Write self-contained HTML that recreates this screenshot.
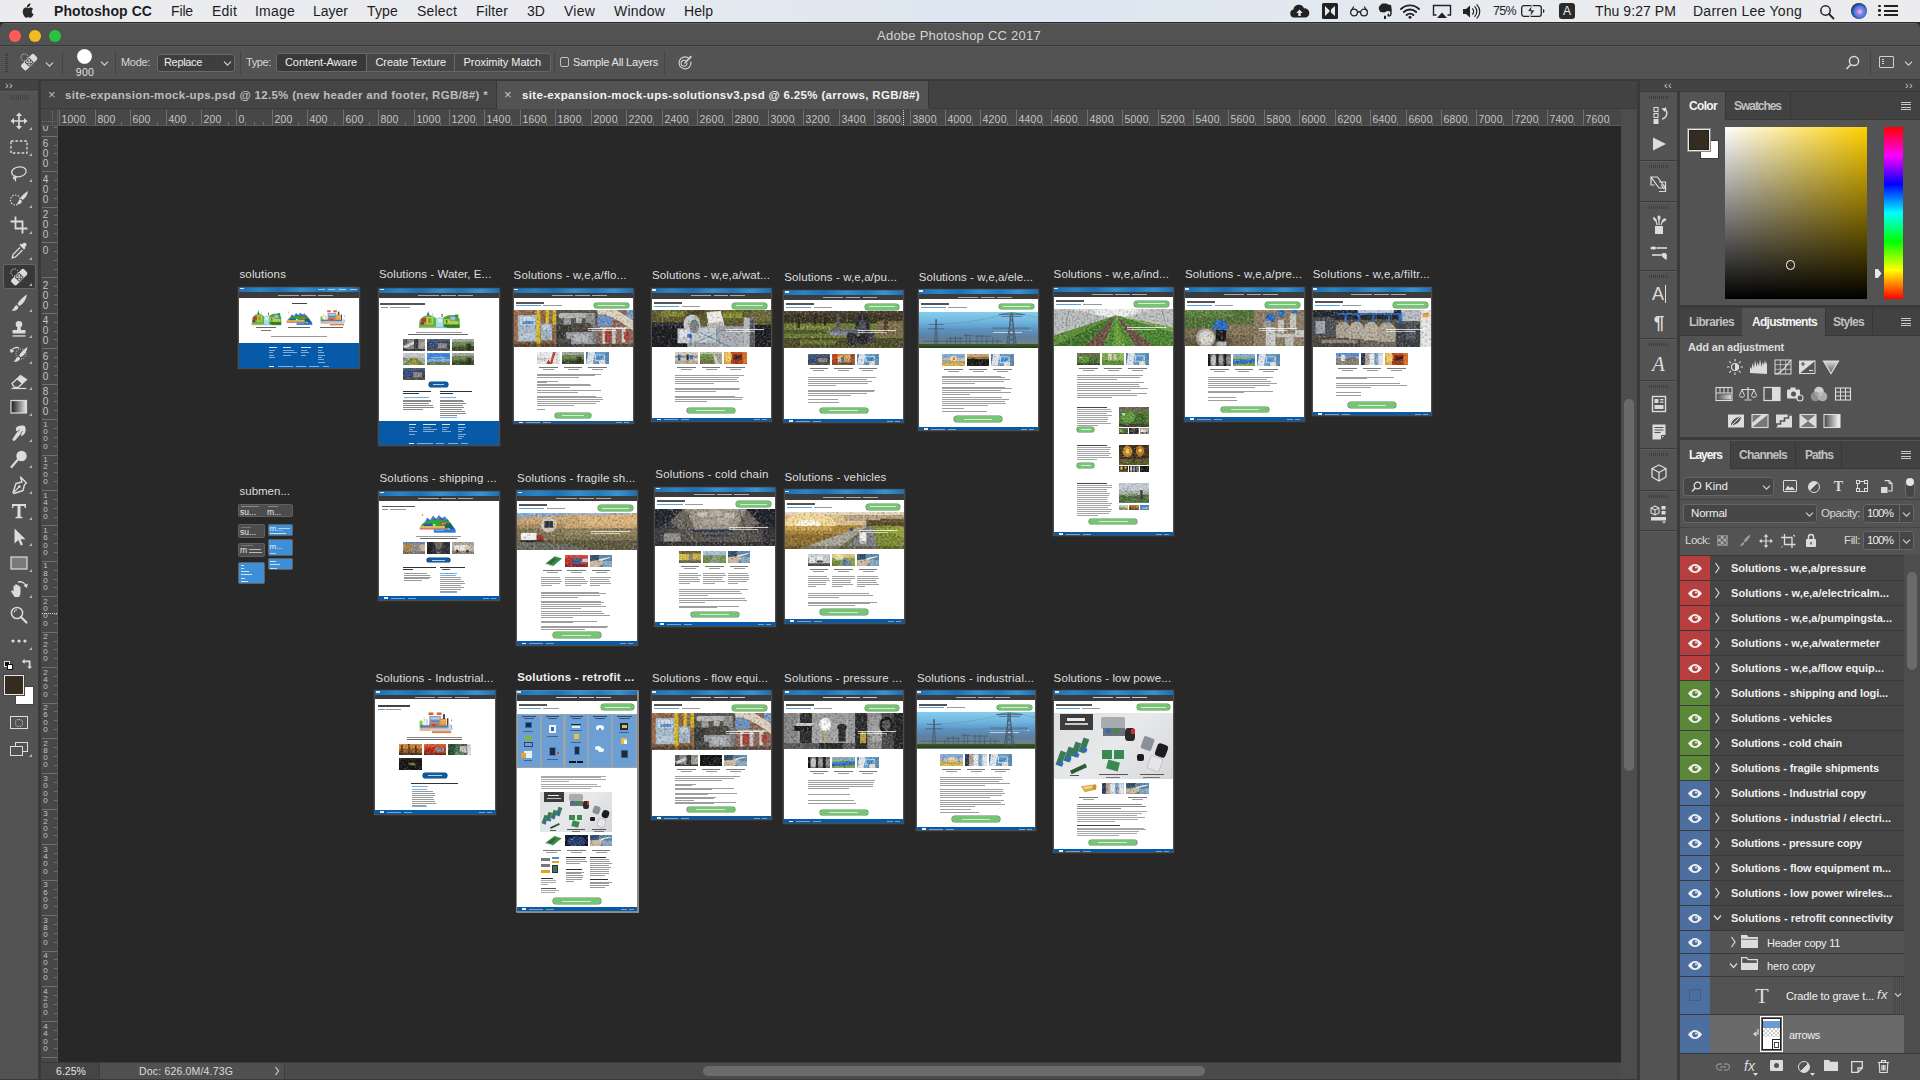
<!DOCTYPE html>
<html><head><meta charset="utf-8"><title>Photoshop</title>
<style>
html,body{margin:0;padding:0;width:1920px;height:1080px;overflow:hidden;background:#282828;font-family:"Liberation Sans",sans-serif;}
div,svg,span{position:absolute;box-sizing:border-box;}
svg{overflow:visible}
</style></head><body>
<div style="left:0px;top:0px;width:1920px;height:22px;background:linear-gradient(90deg,#ececee 0%,#e9ebf0 30%,#dde6f1 50%,#dfe7f1 62%,#e9ebef 80%,#ececee 100%);"></div>
<div style="left:0px;top:22px;width:1920px;height:1px;background:#2b2b2b;"></div>
<svg style="left:20px;top:3px;" width="14" height="16" viewBox="0 0 14 16"><path d="M9.6 3.1c.6-.8 1-1.8.9-2.9-.9.1-2 .6-2.6 1.4-.6.7-1.1 1.8-.9 2.8 1 .1 2-.5 2.6-1.3zM11.7 8.5c0-1.7 1.4-2.5 1.4-2.6-.8-1.1-2-1.3-2.4-1.3-1-.1-2 .6-2.5.6s-1.3-.6-2.2-.6c-1.1 0-2.2.7-2.7 1.7-1.2 2-.3 5 .8 6.7.6.8 1.2 1.7 2.1 1.7.8 0 1.2-.5 2.2-.5s1.3.5 2.2.5 1.5-.8 2-1.6c.6-.9.9-1.8.9-1.9 0 0-1.8-.7-1.8-2.7z" fill="#2a2a2a"/></svg>
<div style="left:54px;top:2px;font-size:14px;line-height:18px;color:#1d1d1f;white-space:pre;letter-spacing:0.066px;font-weight:700;">Photoshop CC</div>
<div style="left:171px;top:2px;font-size:14px;line-height:18px;color:#1d1d1f;white-space:pre;letter-spacing:-0.140px;">File</div>
<div style="left:212px;top:2px;font-size:14px;line-height:18px;color:#1d1d1f;white-space:pre;letter-spacing:0.219px;">Edit</div>
<div style="left:255px;top:2px;font-size:14px;line-height:18px;color:#1d1d1f;white-space:pre;letter-spacing:0.218px;">Image</div>
<div style="left:313px;top:2px;font-size:14px;line-height:18px;color:#1d1d1f;white-space:pre;letter-spacing:-0.004px;">Layer</div>
<div style="left:367px;top:2px;font-size:14px;line-height:18px;color:#1d1d1f;white-space:pre;letter-spacing:0.162px;">Type</div>
<div style="left:417px;top:2px;font-size:14px;line-height:18px;color:#1d1d1f;white-space:pre;letter-spacing:0.182px;">Select</div>
<div style="left:476px;top:2px;font-size:14px;line-height:18px;color:#1d1d1f;white-space:pre;letter-spacing:0.148px;">Filter</div>
<div style="left:527px;top:2px;font-size:14px;line-height:18px;color:#1d1d1f;white-space:pre;letter-spacing:0.052px;">3D</div>
<div style="left:564px;top:2px;font-size:14px;line-height:18px;color:#1d1d1f;white-space:pre;letter-spacing:0.227px;">View</div>
<div style="left:614px;top:2px;font-size:14px;line-height:18px;color:#1d1d1f;white-space:pre;letter-spacing:0.201px;">Window</div>
<div style="left:684px;top:2px;font-size:14px;line-height:18px;color:#1d1d1f;white-space:pre;letter-spacing:0.052px;">Help</div>
<div style="left:1493px;top:3px;font-size:12.5px;line-height:16px;color:#1d1d1f;white-space:pre;letter-spacing:-0.673px;">75%</div>
<div style="left:1595px;top:2px;font-size:14px;line-height:18px;color:#1d1d1f;white-space:pre;letter-spacing:0.077px;">Thu 9:27 PM</div>
<div style="left:1693px;top:2px;font-size:14px;line-height:18px;color:#1d1d1f;white-space:pre;letter-spacing:0.261px;">Darren Lee Yong</div>
<svg style="left:1289px;top:4px;" width="22" height="15" viewBox="0 0 22 15"><path d="M5 13.5a4 4 0 0 1-.6-7.9 5.5 5.5 0 0 1 10.6-1.2 4.6 4.6 0 0 1 1.5 9.1z" fill="#222"/><path d="M10.5 5.5l3.2 3.4h-2v3h-2.4v-3h-2z" fill="#e6e9ef"/></svg>
<div style="left:1322px;top:3px;width:16px;height:16px;background:#222;border-radius:1.5px;"></div>
<svg style="left:1322px;top:3px;" width="16" height="16" viewBox="0 0 16 16"><path d="M3 3l5 5-5 5zM13 3l-4 3.5v3l4 3.5z" fill="#e6e9ef"/></svg>
<svg style="left:1349px;top:5px;" width="20" height="12" viewBox="0 0 20 12"><circle cx="5" cy="7.5" r="3.4" fill="none" stroke="#222" stroke-width="1.3"/><circle cx="15" cy="7.5" r="3.4" fill="none" stroke="#222" stroke-width="1.3"/><path d="M8.4 7.5q1.6-1.5 3.2 0M1.8 6l3-4.5M18.2 6l-3-4.5" fill="none" stroke="#222" stroke-width="1.2"/></svg>
<svg style="left:1376px;top:2px;" width="17" height="18" viewBox="0 0 17 18"><path d="M3 4.5l3-3h4.5l1.5 1 3 .5.8 5-.3 5-1.5 1.5h-2.5v-2.5l1.5-.5v1.5h1l.3-3.5-3-.5-3 1.5-4-.5-1.5-3z" fill="#222"/><path d="M8 13.5l2 .5v3h-2z" fill="#222"/></svg>
<svg style="left:1400px;top:3px;" width="20" height="16" viewBox="0 0 20 16"><path d="M1 6a13 13 0 0 1 18 0M3.8 9a9 9 0 0 1 12.4 0M6.6 12a5 5 0 0 1 6.8 0" fill="none" stroke="#222" stroke-width="1.9" stroke-linecap="round"/><circle cx="10" cy="14.3" r="1.5" fill="#222"/></svg>
<svg style="left:1432px;top:4px;" width="20" height="15" viewBox="0 0 20 15"><path d="M4.5 11h-3v-9.5h17v9.5h-3" fill="none" stroke="#222" stroke-width="1.4"/><path d="M10 8.5l5 5.5h-10z" fill="#222"/></svg>
<svg style="left:1462px;top:4px;" width="18" height="15" viewBox="0 0 18 15"><path d="M1 5h3l4-3.5v12l-4-3.5h-3z" fill="#222"/><path d="M10.5 4.8a3.8 3.8 0 0 1 0 5.4M12.8 2.6a7 7 0 0 1 0 9.8M15 .8a9.5 9.5 0 0 1 0 13.4" fill="none" stroke="#222" stroke-width="1.2" stroke-linecap="round"/></svg>
<svg style="left:1521px;top:5px;" width="24" height="12" viewBox="0 0 24 12"><rect x=".7" y=".7" width="19.6" height="10.6" rx="2.2" fill="none" stroke="#222" stroke-width="1.3"/><path d="M22 4v4q1.5-.5 1.5-2t-1.5-2z" fill="#222"/><path d="M11.5 -.5l-5 7h3.5l-1.5 6 5.5-7.5h-3.7z" fill="#222" stroke="#e3e8f0" stroke-width=".8"/></svg>
<div style="left:1559px;top:3px;width:16px;height:16px;background:#2a2a2a;border-radius:3px;"></div>
<div style="left:1563px;top:3.3px;font-size:12px;line-height:16px;color:#eee;white-space:pre;">A</div>
<svg style="left:1819px;top:4px;" width="16" height="16" viewBox="0 0 16 16"><circle cx="6.5" cy="6.5" r="4.7" fill="none" stroke="#222" stroke-width="1.5"/><path d="M10 10l4.5 4.5" stroke="#222" stroke-width="1.8" stroke-linecap="round"/></svg>
<div style="left:1851px;top:3px;width:16px;height:16px;background:radial-gradient(circle at 55% 55%,#e8d0f0 0%,#a77fe0 22%,#3f7fe0 45%,#1a1a3a 75%,#111 100%);border-radius:50%;"></div>
<div style="left:1884px;top:5px;width:14px;height:2px;background:#222;"></div>
<div style="left:1878px;top:4.75px;width:2.5px;height:2.5px;background:#222;border-radius:50%;"></div>
<div style="left:1884px;top:9.5px;width:14px;height:2px;background:#222;"></div>
<div style="left:1878px;top:9.25px;width:2.5px;height:2.5px;background:#222;border-radius:50%;"></div>
<div style="left:1884px;top:14px;width:14px;height:2px;background:#222;"></div>
<div style="left:1878px;top:13.75px;width:2.5px;height:2.5px;background:#222;border-radius:50%;"></div>
<div style="left:0px;top:22px;width:1920px;height:6px;background:#2b2b2b;"></div>
<div style="left:0px;top:23px;width:1920px;height:23px;background:#525252;border-radius:5px 5px 0 0;"></div>
<div style="left:4px;top:23px;width:1912px;height:1px;background:#606060;"></div>
<div style="left:0px;top:45px;width:1920px;height:1px;background:#3a3a3a;"></div>
<div style="left:9px;top:30px;width:12px;height:12px;background:#fc5b57;border-radius:50%;"></div>
<div style="left:29px;top:30px;width:12px;height:12px;background:#f0bc20;border-radius:50%;"></div>
<div style="left:49px;top:30px;width:12px;height:12px;background:#2ac33f;border-radius:50%;"></div>
<div style="left:877px;top:26.5px;font-size:13px;line-height:17px;color:#d4d4d4;white-space:pre;letter-spacing:0.248px;">Adobe Photoshop CC 2017</div>
<div style="left:0px;top:46px;width:1920px;height:34px;background:#535353;"></div>
<div style="left:0px;top:46px;width:1920px;height:1px;background:#575757;"></div>
<div style="left:0px;top:79px;width:1920px;height:1px;background:#3a3a3a;"></div>
<div style="left:5px;top:53px;width:3px;height:19px;background:repeating-linear-gradient(180deg,#3c3c3c 0 1px,transparent 1px 2px);"></div>
<svg style="left:19px;top:52px;" width="20" height="20" viewBox="0 0 20 20"><g transform="rotate(-45 10 10)"><rect x="1" y="6.5" width="18" height="7.5" rx="2" fill="#dcdcdc"/><rect x="6.7" y="6.9" width="6.6" height="6.6" fill="#535353"/><circle cx="8.5" cy="8.7" r=".9" fill="#dcdcdc"/><circle cx="11.5" cy="8.7" r=".9" fill="#dcdcdc"/><circle cx="8.5" cy="11.7" r=".9" fill="#dcdcdc"/><circle cx="11.5" cy="11.7" r=".9" fill="#dcdcdc"/><circle cx="10" cy="10.2" r=".9" fill="#dcdcdc"/></g><circle cx="5.5" cy="5.5" r="3.6" fill="none" stroke="#dcdcdc" stroke-width="1" stroke-dasharray="1.2 1.2"/></svg>
<svg style="left:44.5px;top:60.5px;" width="9" height="7" viewBox="0 0 9 7"><path d="M1 1.57l3.5 3.5 3.5-3.5" fill="none" stroke="#d0d0d0" stroke-width="1.2"/></svg>
<div style="left:62px;top:51px;width:1px;height:23px;background:#444;"></div>
<div style="left:115px;top:51px;width:1px;height:23px;background:#444;"></div>
<div style="left:76.5px;top:48.5px;width:15px;height:15px;background:radial-gradient(circle,#fff 0 62%,rgba(255,255,255,.5) 82%,rgba(255,255,255,0) 100%);border-radius:50%;"></div>
<div style="left:75.75px;top:64.5px;font-size:10.5px;line-height:14px;color:#e0e0e0;white-space:pre;letter-spacing:0.327px;">900</div>
<svg style="left:99.5px;top:59.5px;" width="9" height="7" viewBox="0 0 9 7"><path d="M1 1.57l3.5 3.5 3.5-3.5" fill="none" stroke="#d0d0d0" stroke-width="1.2"/></svg>
<div style="left:121px;top:55px;font-size:11px;line-height:14px;color:#d6d6d6;white-space:pre;letter-spacing:-0.314px;">Mode:</div>
<div style="left:157px;top:54px;width:78px;height:18px;background:#3e3e3e;border:1px solid #6a6a6a;border-radius:3px;"></div>
<div style="left:164px;top:55px;font-size:11px;line-height:14px;color:#eee;white-space:pre;letter-spacing:-0.337px;">Replace</div>
<svg style="left:222.5px;top:59.5px;" width="9" height="7" viewBox="0 0 9 7"><path d="M1 1.57l3.5 3.5 3.5-3.5" fill="none" stroke="#d0d0d0" stroke-width="1.2"/></svg>
<div style="left:240px;top:51px;width:1px;height:23px;background:#444;"></div>
<div style="left:246px;top:55px;font-size:11px;line-height:14px;color:#d6d6d6;white-space:pre;letter-spacing:-0.381px;">Type:</div>
<div style="left:276px;top:53px;width:275px;height:19px;background:#464646;border:1px solid #666;border-radius:3px;"></div>
<div style="left:277px;top:54px;width:89px;height:17px;background:#383838;border-radius:2px 0 0 2px;"></div>
<div style="left:366px;top:54px;width:1px;height:17px;background:#6a6a6a;"></div>
<div style="left:454px;top:54px;width:1px;height:17px;background:#6a6a6a;"></div>
<div style="left:285px;top:55px;font-size:11px;line-height:14px;color:#f0f0f0;white-space:pre;letter-spacing:-0.090px;">Content-Aware</div>
<div style="left:375.5px;top:55px;font-size:11px;line-height:14px;color:#f0f0f0;white-space:pre;letter-spacing:-0.103px;">Create Texture</div>
<div style="left:463.5px;top:55px;font-size:11px;line-height:14px;color:#f0f0f0;white-space:pre;letter-spacing:-0.049px;">Proximity Match</div>
<div style="left:554px;top:51px;width:1px;height:23px;background:#444;"></div>
<div style="left:559.5px;top:57px;width:9.5px;height:9.5px;background:#535353;border:1px solid #c0c0c0;border-radius:2px;"></div>
<div style="left:573px;top:55px;font-size:11px;line-height:14px;color:#e8e8e8;white-space:pre;letter-spacing:-0.179px;">Sample All Layers</div>
<div style="left:664px;top:51px;width:1px;height:23px;background:#444;"></div>
<svg style="left:676px;top:54px;" width="17" height="17" viewBox="0 0 17 17"><path d="M13 4.5a6 6 0 1 0 1.8 3" fill="none" stroke="#d0d0d0" stroke-width="1.2"/><path d="M10 7a3 3 0 1 0 1 1.8" fill="none" stroke="#d0d0d0" stroke-width="1.1"/><path d="M8 9l6.5-7.5 1.5 1.5-7 7z" fill="#d0d0d0"/></svg>
<svg style="left:1845px;top:55px;" width="15" height="15" viewBox="0 0 15 15"><circle cx="9" cy="6" r="4.6" fill="none" stroke="#d8d8d8" stroke-width="1.5"/><path d="M5.8 9.5l-4.3 4.5" stroke="#d8d8d8" stroke-width="1.7"/></svg>
<div style="left:1870px;top:50px;width:1px;height:25px;background:#444;"></div>
<div style="left:1879px;top:56px;width:15px;height:12px;border:1.5px solid #d0d0d0;border-radius:1px;"></div>
<div style="left:1881.5px;top:59px;width:2px;height:6px;background:repeating-linear-gradient(180deg,#d0d0d0 0 1px,transparent 1px 2px);"></div>
<svg style="left:1903.5px;top:59.5px;" width="9" height="7" viewBox="0 0 9 7"><path d="M1 1.57l3.5 3.5 3.5-3.5" fill="none" stroke="#d0d0d0" stroke-width="1.2"/></svg>
<div style="left:0px;top:80px;width:41px;height:1000px;background:#3a3a3a;"></div>
<div style="left:0px;top:80px;width:38px;height:12px;background:#434343;"></div>
<div style="left:0px;top:92px;width:38px;height:988px;background:#535353;"></div>
<div style="left:0px;top:91px;width:38px;height:1px;background:#5c5c5c;"></div>
<div style="left:5px;top:78px;font-size:11px;line-height:14px;color:#c8c8c8;white-space:pre;letter-spacing:0.337px;">››</div>
<div style="left:10px;top:95px;width:20px;height:5px;background:repeating-linear-gradient(90deg,#444 0 1px,transparent 1px 2px);"></div>
<svg style="left:9px;top:111px;" width="20" height="20" viewBox="0 0 20 20"><path d="M10 1.5l3 3.5h-2.2v4.2h4.2v-2.2l3.5 3-3.5 3v-2.2h-4.2v4.2h2.2l-3 3.5-3-3.5h2.2v-4.2h-4.2v2.2l-3.5-3 3.5-3v2.2h4.2v-4.2h-2.2z" fill="#dcdcdc"/></svg>
<svg style="left:29px;top:127px;" width="3" height="3" viewBox="0 0 3 3"><path d="M3 0v3h-3z" fill="#b4b4b4"/></svg>
<svg style="left:9px;top:137px;" width="20" height="20" viewBox="0 0 20 20"><rect x="2" y="4" width="16" height="12" fill="none" stroke="#dcdcdc" stroke-width="1.3" stroke-dasharray="2.6 1.8"/></svg>
<svg style="left:29px;top:153px;" width="3" height="3" viewBox="0 0 3 3"><path d="M3 0v3h-3z" fill="#b4b4b4"/></svg>
<svg style="left:9px;top:163px;" width="20" height="20" viewBox="0 0 20 20"><path d="M5.5 13c-3-1-4-4.5-1-7s9-3 11.5-.5 1 6-3 7.5-6.5.5-7.5 0" fill="none" stroke="#dcdcdc" stroke-width="1.3"/><path d="M5.5 13c1.5 0 2 1.5 1 2.5s-2.5 0-2-1.2 2.5 1 2 4" fill="none" stroke="#dcdcdc" stroke-width="1.2"/></svg>
<svg style="left:29px;top:179px;" width="3" height="3" viewBox="0 0 3 3"><path d="M3 0v3h-3z" fill="#b4b4b4"/></svg>
<svg style="left:9px;top:189px;" width="20" height="20" viewBox="0 0 20 20"><circle cx="6.5" cy="11" r="5" fill="none" stroke="#dcdcdc" stroke-width="1.2" stroke-dasharray="1.4 1.4"/><path d="M19 2c-3 1.5-6 4.5-7.500 7l2 2c2.5-1.5 5-5 5.5-9z" fill="#dcdcdc"/><path d="M10.8 10l2.2 2.2c-.5 2.5-2.800 3.600-5.5 2.800 2-.8 1.800-3.800 3.300-5z" fill="#dcdcdc"/></svg>
<svg style="left:29px;top:205px;" width="3" height="3" viewBox="0 0 3 3"><path d="M3 0v3h-3z" fill="#b4b4b4"/></svg>
<svg style="left:9px;top:215px;" width="20" height="20" viewBox="0 0 20 20"><path d="M6.5 1.5v12h12M1.5 6.5h12v12" fill="none" stroke="#dcdcdc" stroke-width="1.8"/></svg>
<svg style="left:29px;top:231px;" width="3" height="3" viewBox="0 0 3 3"><path d="M3 0v3h-3z" fill="#b4b4b4"/></svg>
<svg style="left:9px;top:241px;" width="20" height="20" viewBox="0 0 20 20"><path d="M13 3.5c1.2-2 3-2.2 4-1.2s.8 2.8-1.2 4l.7.7-1.5 1.5-4.5-4.5 1.5-1.5z" fill="#dcdcdc"/><path d="M11 6.5l-7 7-.8 3.3 3.3-.8 7-7" fill="none" stroke="#dcdcdc" stroke-width="1.3"/></svg>
<svg style="left:29px;top:257px;" width="3" height="3" viewBox="0 0 3 3"><path d="M3 0v3h-3z" fill="#b4b4b4"/></svg>
<div style="left:3px;top:264px;width:33px;height:25px;background:#383838;border:1px solid #666;border-radius:3px;"></div>
<svg style="left:9px;top:267px;" width="20" height="20" viewBox="0 0 20 20"><g transform="rotate(-45 10 10)"><rect x="1" y="6.5" width="18" height="7.5" rx="2" fill="#dcdcdc"/><rect x="6.7" y="6.9" width="6.6" height="6.6" fill="#535353"/><circle cx="8.5" cy="8.7" r=".9" fill="#dcdcdc"/><circle cx="11.5" cy="8.7" r=".9" fill="#dcdcdc"/><circle cx="8.5" cy="11.7" r=".9" fill="#dcdcdc"/><circle cx="11.5" cy="11.7" r=".9" fill="#dcdcdc"/><circle cx="10" cy="10.2" r=".9" fill="#dcdcdc"/></g><circle cx="5.5" cy="5.5" r="3.6" fill="none" stroke="#dcdcdc" stroke-width="1" stroke-dasharray="1.2 1.2"/></svg>
<svg style="left:29px;top:283px;" width="3" height="3" viewBox="0 0 3 3"><path d="M3 0v3h-3z" fill="#b4b4b4"/></svg>
<svg style="left:9px;top:293px;" width="20" height="20" viewBox="0 0 20 20"><path d="M18 1.5c-4 2.5-8 6.5-9.5 9.5l2 2c3-1.5 6.5-6 7.5-11.5z" fill="#dcdcdc"/><path d="M7.5 12l2 2c-.5 3-3.5 4.5-7 3.5 2.5-1 2.5-4.5 5-5.5z" fill="#dcdcdc"/></svg>
<svg style="left:29px;top:309px;" width="3" height="3" viewBox="0 0 3 3"><path d="M3 0v3h-3z" fill="#b4b4b4"/></svg>
<svg style="left:9px;top:319px;" width="20" height="20" viewBox="0 0 20 20"><circle cx="10" cy="5.2" r="3.3" fill="#dcdcdc"/><path d="M8.6 7h2.8l.6 4.5h-4z" fill="#dcdcdc"/><rect x="3.5" y="11" width="13" height="3.6" rx=".8" fill="#dcdcdc"/><rect x="3.5" y="16.3" width="13" height="1.3" fill="#dcdcdc"/></svg>
<svg style="left:29px;top:335px;" width="3" height="3" viewBox="0 0 3 3"><path d="M3 0v3h-3z" fill="#b4b4b4"/></svg>
<svg style="left:9px;top:345px;" width="20" height="20" viewBox="0 0 20 20"><path d="M18.5 2c-3.5 2-7 5.5-8.5 8.5l1.8 1.8c3-1.5 6-5.5 6.7-10.3z" fill="#dcdcdc"/><path d="M9.2 11.5l1.8 1.8c-.5 2.7-3 4-6.5 3.2 2.3-1 2.3-4 4.7-5z" fill="#dcdcdc"/><path d="M2 6.5a6 6 0 0 1 8-3.5" fill="none" stroke="#dcdcdc" stroke-width="1.3"/><path d="M.5 4l1.5 4 3.5-2z" fill="#dcdcdc"/><circle cx="12" cy="9" r="5" fill="none" stroke="#dcdcdc" stroke-width=".9" stroke-dasharray="1 1.2"/></svg>
<svg style="left:29px;top:361px;" width="3" height="3" viewBox="0 0 3 3"><path d="M3 0v3h-3z" fill="#b4b4b4"/></svg>
<svg style="left:9px;top:371px;" width="20" height="20" viewBox="0 0 20 20"><path d="M3 12.5l8.5-8 6 4-8.5 8h-3.5z" fill="none" stroke="#dcdcdc" stroke-width="1.3"/><path d="M11.5 4.5l6 4-4.5 4.3-5.5-4.5z" fill="#dcdcdc"/><path d="M2.5 17.5h15" stroke="#dcdcdc" stroke-width="1.2"/></svg>
<svg style="left:29px;top:387px;" width="3" height="3" viewBox="0 0 3 3"><path d="M3 0v3h-3z" fill="#b4b4b4"/></svg>
<svg style="left:9px;top:397px;" width="20" height="20" viewBox="0 0 20 20"><defs><linearGradient id="tg"><stop offset="0" stop-color="#1a1a1a"/><stop offset="1" stop-color="#e6e6e6"/></linearGradient></defs><rect x="2" y="3.5" width="15.5" height="12.5" fill="url(#tg)" stroke="#dcdcdc" stroke-width="1.2"/></svg>
<svg style="left:29px;top:413px;" width="3" height="3" viewBox="0 0 3 3"><path d="M3 0v3h-3z" fill="#b4b4b4"/></svg>
<svg style="left:9px;top:423px;" width="20" height="20" viewBox="0 0 20 20"><path d="M7 5c2-2.5 6-3 8.5-2 1.5 1 1.5 5 .5 7-1 2-3 3.2-4.5 3 .8-1 1.2-2 1-3l-6.5 7.5c-1 1-3.2 0-2.5-1.5l5-7.5c-1.5-.5-2-1.8-1.5-3.5z" fill="#dcdcdc"/><path d="M8.5 9l2-2.5M11.5 10.5l2-2.5" stroke="#535353" stroke-width=".8" fill="none"/></svg>
<svg style="left:29px;top:439px;" width="3" height="3" viewBox="0 0 3 3"><path d="M3 0v3h-3z" fill="#b4b4b4"/></svg>
<svg style="left:9px;top:449px;" width="20" height="20" viewBox="0 0 20 20"><circle cx="12.5" cy="7" r="5.2" fill="#dcdcdc"/><path d="M8.5 11l-6 7" stroke="#dcdcdc" stroke-width="2.2" stroke-linecap="round"/></svg>
<svg style="left:29px;top:465px;" width="3" height="3" viewBox="0 0 3 3"><path d="M3 0v3h-3z" fill="#b4b4b4"/></svg>
<svg style="left:9px;top:475px;" width="20" height="20" viewBox="0 0 20 20"><path d="M11.5 2l6 6-2 1.5-1.5 6-9 3-1-1 3-9 6-1.5z" fill="none" stroke="#dcdcdc" stroke-width="1.4" stroke-linejoin="round"/><path d="M4.5 17.5l5-5" stroke="#dcdcdc" stroke-width="1.2"/><circle cx="10.3" cy="11.7" r="1.4" fill="#dcdcdc"/></svg>
<svg style="left:29px;top:491px;" width="3" height="3" viewBox="0 0 3 3"><path d="M3 0v3h-3z" fill="#b4b4b4"/></svg>
<svg style="left:9px;top:501px;" width="20" height="20" viewBox="0 0 20 20"><path d="M3 3h14v4h-1.2l-.5-2h-3.8v10.5l2 .5v1.2h-7v-1.2l2-.5v-10.5h-3.8l-.5 2h-1.2z" fill="#dcdcdc"/></svg>
<svg style="left:29px;top:517px;" width="3" height="3" viewBox="0 0 3 3"><path d="M3 0v3h-3z" fill="#b4b4b4"/></svg>
<svg style="left:9px;top:527px;" width="20" height="20" viewBox="0 0 20 20"><path d="M5.5 1.5v15l3.8-3.5 2.5 5.5 2.2-1-2.5-5.3h5z" fill="#dcdcdc"/></svg>
<svg style="left:29px;top:543px;" width="3" height="3" viewBox="0 0 3 3"><path d="M3 0v3h-3z" fill="#b4b4b4"/></svg>
<svg style="left:9px;top:553px;" width="20" height="20" viewBox="0 0 20 20"><rect x="2" y="4" width="16" height="12" fill="#7a7a7a" stroke="#dcdcdc" stroke-width="1.2"/></svg>
<svg style="left:29px;top:569px;" width="3" height="3" viewBox="0 0 3 3"><path d="M3 0v3h-3z" fill="#b4b4b4"/></svg>
<svg style="left:9px;top:579px;" width="20" height="20" viewBox="0 0 20 20"><path d="M5.5 18c-1-2.5-3-4-3.5-6 .5-1 1.8-.5 2.5.5v-5c0-1.3 1.7-1.3 1.7 0v-1.3c0-1.3 1.8-1.3 1.8 0v.8c0-1.3 1.8-1.3 1.8 0v1.2c0-1.2 1.7-1.2 1.7 0v5.3c0 2-1 3.5-1.5 4.5z" fill="#dcdcdc"/><path d="M9 3a7 7 0 0 1 8.5 5" fill="none" stroke="#dcdcdc" stroke-width="1.4"/><path d="M19 4.5l-1.2 4.5-3.3-2.5z" fill="#dcdcdc"/></svg>
<svg style="left:29px;top:595px;" width="3" height="3" viewBox="0 0 3 3"><path d="M3 0v3h-3z" fill="#b4b4b4"/></svg>
<svg style="left:9px;top:605px;" width="20" height="20" viewBox="0 0 20 20"><circle cx="8" cy="8" r="5.6" fill="none" stroke="#dcdcdc" stroke-width="1.5"/><path d="M12 12l5.5 5.5" stroke="#dcdcdc" stroke-width="2.2" stroke-linecap="round"/><path d="M5 7.5a3.2 3.2 0 0 1 3-2.7" fill="none" stroke="#dcdcdc" stroke-width="1"/></svg>
<svg style="left:9px;top:631px;" width="20" height="20" viewBox="0 0 20 20"><circle cx="4" cy="10" r="1.6" fill="#dcdcdc"/><circle cx="10" cy="10" r="1.6" fill="#dcdcdc"/><circle cx="16" cy="10" r="1.6" fill="#dcdcdc"/></svg>
<svg style="left:29px;top:647px;" width="3" height="3" viewBox="0 0 3 3"><path d="M3 0v3h-3z" fill="#b4b4b4"/></svg>
<div style="left:4px;top:661px;width:6px;height:6px;background:#111;border:1px solid #ddd;"></div>
<div style="left:7px;top:664px;width:6px;height:6px;background:#fff;border:1px solid #111;"></div>
<svg style="left:22px;top:658px;" width="12" height="12" viewBox="0 0 12 12"><path d="M3 1l-3 3 3 3v-2h5v5h-2l3 3 3-3h-2v-7h-7z" fill="#dcdcdc" transform="scale(.85)"/></svg>
<div style="left:15px;top:686px;width:19px;height:19px;background:#ffffff;border:1px solid #444;"></div>
<div style="left:4px;top:675px;width:20px;height:20px;background:#352b1f;border:1px solid #e8e8e8;box-shadow:0 0 0 1px #444;"></div>
<div style="left:10px;top:716px;width:18px;height:13px;border:1.3px solid #dcdcdc;"></div>
<div style="left:15px;top:718.5px;width:8px;height:8px;border:1px dotted #dcdcdc;border-radius:50%;"></div>
<div style="left:15px;top:742px;width:13px;height:10px;background:#535353;border:1.3px solid #dcdcdc;"></div>
<div style="left:10px;top:746px;width:13px;height:10px;background:#535353;border:1.3px solid #dcdcdc;"></div>
<svg style="left:29px;top:754px;" width="3" height="3" viewBox="0 0 3 3"><path d="M3 0v3h-3z" fill="#b4b4b4"/></svg>
<div style="left:41px;top:80px;width:1596px;height:29px;background:#424242;"></div>
<div style="left:41px;top:108px;width:1596px;height:1px;background:#3a3a3a;"></div>
<div style="left:41px;top:80px;width:1596px;height:1px;background:#383838;"></div>
<div style="left:41px;top:81px;width:456px;height:27px;background:#454545;"></div>
<div style="left:496px;top:81px;width:1px;height:27px;background:#383838;"></div>
<div style="left:497px;top:81px;width:432px;height:28px;background:#535353;"></div>
<div style="left:928px;top:81px;width:1px;height:27px;background:#383838;"></div>
<div style="left:48px;top:86px;font-size:13px;line-height:17px;color:#b8b8b8;white-space:pre;">×</div>
<div style="left:65px;top:87.5px;font-size:11.5px;line-height:15px;color:#bdbdbd;white-space:pre;letter-spacing:0.318px;font-weight:700;">site-expansion-mock-ups.psd @ 12.5% (new header and footer, RGB/8#) *</div>
<div style="left:504px;top:86px;font-size:13px;line-height:17px;color:#c8c8c8;white-space:pre;">×</div>
<div style="left:522px;top:87.5px;font-size:11.5px;line-height:15px;color:#f2f2f2;white-space:pre;letter-spacing:0.332px;font-weight:700;">site-expansion-mock-ups-solutionsv3.psd @ 6.25% (arrows, RGB/8#)</div>
<div style="left:41px;top:109px;width:1580px;height:17px;background:#474747;"></div>
<div style="left:41px;top:109px;width:17px;height:953px;background:#474747;"></div>
<div style="left:41px;top:125px;width:1580px;height:1px;background:#5a5a5a;"></div>
<div style="left:57px;top:109px;width:1px;height:953px;background:#5a5a5a;"></div>
<div style="left:52px;top:111px;width:1px;height:14px;background:repeating-linear-gradient(180deg,#777 0 1px,transparent 1px 2px);"></div>
<div style="left:42px;top:121px;width:14px;height:1px;background:repeating-linear-gradient(90deg,#777 0 1px,transparent 1px 2px);"></div>
<div style="left:59px;top:110px;width:1px;height:15px;background:#707070;"></div>
<div style="left:68px;top:122px;width:1px;height:3px;background:#707070;"></div>
<div style="left:77px;top:122px;width:1px;height:3px;background:#707070;"></div>
<div style="left:86px;top:122px;width:1px;height:3px;background:#707070;"></div>
<div style="left:61.5px;top:112.3px;font-size:10.5px;line-height:14px;color:#c4c4c4;white-space:pre;letter-spacing:0.210px;">1000</div>
<div style="left:95px;top:110px;width:1px;height:15px;background:#707070;"></div>
<div style="left:104px;top:122px;width:1px;height:3px;background:#707070;"></div>
<div style="left:112px;top:122px;width:1px;height:3px;background:#707070;"></div>
<div style="left:121px;top:122px;width:1px;height:3px;background:#707070;"></div>
<div style="left:97.5px;top:112.3px;font-size:10.5px;line-height:14px;color:#c4c4c4;white-space:pre;letter-spacing:0.210px;">800</div>
<div style="left:130px;top:110px;width:1px;height:15px;background:#707070;"></div>
<div style="left:139px;top:122px;width:1px;height:3px;background:#707070;"></div>
<div style="left:148px;top:122px;width:1px;height:3px;background:#707070;"></div>
<div style="left:157px;top:122px;width:1px;height:3px;background:#707070;"></div>
<div style="left:132.5px;top:112.3px;font-size:10.5px;line-height:14px;color:#c4c4c4;white-space:pre;letter-spacing:0.210px;">600</div>
<div style="left:166px;top:110px;width:1px;height:15px;background:#707070;"></div>
<div style="left:174px;top:122px;width:1px;height:3px;background:#707070;"></div>
<div style="left:183px;top:122px;width:1px;height:3px;background:#707070;"></div>
<div style="left:192px;top:122px;width:1px;height:3px;background:#707070;"></div>
<div style="left:168.5px;top:112.3px;font-size:10.5px;line-height:14px;color:#c4c4c4;white-space:pre;letter-spacing:0.210px;">400</div>
<div style="left:201px;top:110px;width:1px;height:15px;background:#707070;"></div>
<div style="left:210px;top:122px;width:1px;height:3px;background:#707070;"></div>
<div style="left:219px;top:122px;width:1px;height:3px;background:#707070;"></div>
<div style="left:228px;top:122px;width:1px;height:3px;background:#707070;"></div>
<div style="left:203.5px;top:112.3px;font-size:10.5px;line-height:14px;color:#c4c4c4;white-space:pre;letter-spacing:0.210px;">200</div>
<div style="left:236px;top:110px;width:1px;height:15px;background:#707070;"></div>
<div style="left:245px;top:122px;width:1px;height:3px;background:#707070;"></div>
<div style="left:254px;top:122px;width:1px;height:3px;background:#707070;"></div>
<div style="left:263px;top:122px;width:1px;height:3px;background:#707070;"></div>
<div style="left:238.5px;top:112.3px;font-size:10.5px;line-height:14px;color:#c4c4c4;white-space:pre;">0</div>
<div style="left:272px;top:110px;width:1px;height:15px;background:#707070;"></div>
<div style="left:281px;top:122px;width:1px;height:3px;background:#707070;"></div>
<div style="left:290px;top:122px;width:1px;height:3px;background:#707070;"></div>
<div style="left:298px;top:122px;width:1px;height:3px;background:#707070;"></div>
<div style="left:274.5px;top:112.3px;font-size:10.5px;line-height:14px;color:#c4c4c4;white-space:pre;letter-spacing:0.210px;">200</div>
<div style="left:307px;top:110px;width:1px;height:15px;background:#707070;"></div>
<div style="left:316px;top:122px;width:1px;height:3px;background:#707070;"></div>
<div style="left:325px;top:122px;width:1px;height:3px;background:#707070;"></div>
<div style="left:334px;top:122px;width:1px;height:3px;background:#707070;"></div>
<div style="left:309.5px;top:112.3px;font-size:10.5px;line-height:14px;color:#c4c4c4;white-space:pre;letter-spacing:0.210px;">400</div>
<div style="left:343px;top:110px;width:1px;height:15px;background:#707070;"></div>
<div style="left:352px;top:122px;width:1px;height:3px;background:#707070;"></div>
<div style="left:360px;top:122px;width:1px;height:3px;background:#707070;"></div>
<div style="left:369px;top:122px;width:1px;height:3px;background:#707070;"></div>
<div style="left:345.5px;top:112.3px;font-size:10.5px;line-height:14px;color:#c4c4c4;white-space:pre;letter-spacing:0.210px;">600</div>
<div style="left:378px;top:110px;width:1px;height:15px;background:#707070;"></div>
<div style="left:387px;top:122px;width:1px;height:3px;background:#707070;"></div>
<div style="left:396px;top:122px;width:1px;height:3px;background:#707070;"></div>
<div style="left:405px;top:122px;width:1px;height:3px;background:#707070;"></div>
<div style="left:380.5px;top:112.3px;font-size:10.5px;line-height:14px;color:#c4c4c4;white-space:pre;letter-spacing:0.210px;">800</div>
<div style="left:414px;top:110px;width:1px;height:15px;background:#707070;"></div>
<div style="left:422px;top:122px;width:1px;height:3px;background:#707070;"></div>
<div style="left:431px;top:122px;width:1px;height:3px;background:#707070;"></div>
<div style="left:440px;top:122px;width:1px;height:3px;background:#707070;"></div>
<div style="left:416.5px;top:112.3px;font-size:10.5px;line-height:14px;color:#c4c4c4;white-space:pre;letter-spacing:0.210px;">1000</div>
<div style="left:449px;top:110px;width:1px;height:15px;background:#707070;"></div>
<div style="left:458px;top:122px;width:1px;height:3px;background:#707070;"></div>
<div style="left:467px;top:122px;width:1px;height:3px;background:#707070;"></div>
<div style="left:476px;top:122px;width:1px;height:3px;background:#707070;"></div>
<div style="left:451.5px;top:112.3px;font-size:10.5px;line-height:14px;color:#c4c4c4;white-space:pre;letter-spacing:0.210px;">1200</div>
<div style="left:484px;top:110px;width:1px;height:15px;background:#707070;"></div>
<div style="left:493px;top:122px;width:1px;height:3px;background:#707070;"></div>
<div style="left:502px;top:122px;width:1px;height:3px;background:#707070;"></div>
<div style="left:511px;top:122px;width:1px;height:3px;background:#707070;"></div>
<div style="left:486.5px;top:112.3px;font-size:10.5px;line-height:14px;color:#c4c4c4;white-space:pre;letter-spacing:0.210px;">1400</div>
<div style="left:520px;top:110px;width:1px;height:15px;background:#707070;"></div>
<div style="left:529px;top:122px;width:1px;height:3px;background:#707070;"></div>
<div style="left:538px;top:122px;width:1px;height:3px;background:#707070;"></div>
<div style="left:546px;top:122px;width:1px;height:3px;background:#707070;"></div>
<div style="left:522.5px;top:112.3px;font-size:10.5px;line-height:14px;color:#c4c4c4;white-space:pre;letter-spacing:0.210px;">1600</div>
<div style="left:555px;top:110px;width:1px;height:15px;background:#707070;"></div>
<div style="left:564px;top:122px;width:1px;height:3px;background:#707070;"></div>
<div style="left:573px;top:122px;width:1px;height:3px;background:#707070;"></div>
<div style="left:582px;top:122px;width:1px;height:3px;background:#707070;"></div>
<div style="left:557.5px;top:112.3px;font-size:10.5px;line-height:14px;color:#c4c4c4;white-space:pre;letter-spacing:0.210px;">1800</div>
<div style="left:591px;top:110px;width:1px;height:15px;background:#707070;"></div>
<div style="left:600px;top:122px;width:1px;height:3px;background:#707070;"></div>
<div style="left:608px;top:122px;width:1px;height:3px;background:#707070;"></div>
<div style="left:617px;top:122px;width:1px;height:3px;background:#707070;"></div>
<div style="left:593.5px;top:112.3px;font-size:10.5px;line-height:14px;color:#c4c4c4;white-space:pre;letter-spacing:0.210px;">2000</div>
<div style="left:626px;top:110px;width:1px;height:15px;background:#707070;"></div>
<div style="left:635px;top:122px;width:1px;height:3px;background:#707070;"></div>
<div style="left:644px;top:122px;width:1px;height:3px;background:#707070;"></div>
<div style="left:653px;top:122px;width:1px;height:3px;background:#707070;"></div>
<div style="left:628.5px;top:112.3px;font-size:10.5px;line-height:14px;color:#c4c4c4;white-space:pre;letter-spacing:0.210px;">2200</div>
<div style="left:662px;top:110px;width:1px;height:15px;background:#707070;"></div>
<div style="left:670px;top:122px;width:1px;height:3px;background:#707070;"></div>
<div style="left:679px;top:122px;width:1px;height:3px;background:#707070;"></div>
<div style="left:688px;top:122px;width:1px;height:3px;background:#707070;"></div>
<div style="left:664.5px;top:112.3px;font-size:10.5px;line-height:14px;color:#c4c4c4;white-space:pre;letter-spacing:0.210px;">2400</div>
<div style="left:697px;top:110px;width:1px;height:15px;background:#707070;"></div>
<div style="left:706px;top:122px;width:1px;height:3px;background:#707070;"></div>
<div style="left:715px;top:122px;width:1px;height:3px;background:#707070;"></div>
<div style="left:724px;top:122px;width:1px;height:3px;background:#707070;"></div>
<div style="left:699.5px;top:112.3px;font-size:10.5px;line-height:14px;color:#c4c4c4;white-space:pre;letter-spacing:0.210px;">2600</div>
<div style="left:732px;top:110px;width:1px;height:15px;background:#707070;"></div>
<div style="left:741px;top:122px;width:1px;height:3px;background:#707070;"></div>
<div style="left:750px;top:122px;width:1px;height:3px;background:#707070;"></div>
<div style="left:759px;top:122px;width:1px;height:3px;background:#707070;"></div>
<div style="left:734.5px;top:112.3px;font-size:10.5px;line-height:14px;color:#c4c4c4;white-space:pre;letter-spacing:0.210px;">2800</div>
<div style="left:768px;top:110px;width:1px;height:15px;background:#707070;"></div>
<div style="left:777px;top:122px;width:1px;height:3px;background:#707070;"></div>
<div style="left:786px;top:122px;width:1px;height:3px;background:#707070;"></div>
<div style="left:794px;top:122px;width:1px;height:3px;background:#707070;"></div>
<div style="left:770.5px;top:112.3px;font-size:10.5px;line-height:14px;color:#c4c4c4;white-space:pre;letter-spacing:0.210px;">3000</div>
<div style="left:803px;top:110px;width:1px;height:15px;background:#707070;"></div>
<div style="left:812px;top:122px;width:1px;height:3px;background:#707070;"></div>
<div style="left:821px;top:122px;width:1px;height:3px;background:#707070;"></div>
<div style="left:830px;top:122px;width:1px;height:3px;background:#707070;"></div>
<div style="left:805.5px;top:112.3px;font-size:10.5px;line-height:14px;color:#c4c4c4;white-space:pre;letter-spacing:0.210px;">3200</div>
<div style="left:839px;top:110px;width:1px;height:15px;background:#707070;"></div>
<div style="left:848px;top:122px;width:1px;height:3px;background:#707070;"></div>
<div style="left:856px;top:122px;width:1px;height:3px;background:#707070;"></div>
<div style="left:865px;top:122px;width:1px;height:3px;background:#707070;"></div>
<div style="left:841.5px;top:112.3px;font-size:10.5px;line-height:14px;color:#c4c4c4;white-space:pre;letter-spacing:0.210px;">3400</div>
<div style="left:874px;top:110px;width:1px;height:15px;background:#707070;"></div>
<div style="left:883px;top:122px;width:1px;height:3px;background:#707070;"></div>
<div style="left:892px;top:122px;width:1px;height:3px;background:#707070;"></div>
<div style="left:901px;top:122px;width:1px;height:3px;background:#707070;"></div>
<div style="left:876.5px;top:112.3px;font-size:10.5px;line-height:14px;color:#c4c4c4;white-space:pre;letter-spacing:0.210px;">3600</div>
<div style="left:910px;top:110px;width:1px;height:15px;background:#707070;"></div>
<div style="left:918px;top:122px;width:1px;height:3px;background:#707070;"></div>
<div style="left:927px;top:122px;width:1px;height:3px;background:#707070;"></div>
<div style="left:936px;top:122px;width:1px;height:3px;background:#707070;"></div>
<div style="left:912.5px;top:112.3px;font-size:10.5px;line-height:14px;color:#c4c4c4;white-space:pre;letter-spacing:0.210px;">3800</div>
<div style="left:945px;top:110px;width:1px;height:15px;background:#707070;"></div>
<div style="left:954px;top:122px;width:1px;height:3px;background:#707070;"></div>
<div style="left:963px;top:122px;width:1px;height:3px;background:#707070;"></div>
<div style="left:972px;top:122px;width:1px;height:3px;background:#707070;"></div>
<div style="left:947.5px;top:112.3px;font-size:10.5px;line-height:14px;color:#c4c4c4;white-space:pre;letter-spacing:0.210px;">4000</div>
<div style="left:980px;top:110px;width:1px;height:15px;background:#707070;"></div>
<div style="left:989px;top:122px;width:1px;height:3px;background:#707070;"></div>
<div style="left:998px;top:122px;width:1px;height:3px;background:#707070;"></div>
<div style="left:1007px;top:122px;width:1px;height:3px;background:#707070;"></div>
<div style="left:982.5px;top:112.3px;font-size:10.5px;line-height:14px;color:#c4c4c4;white-space:pre;letter-spacing:0.210px;">4200</div>
<div style="left:1016px;top:110px;width:1px;height:15px;background:#707070;"></div>
<div style="left:1025px;top:122px;width:1px;height:3px;background:#707070;"></div>
<div style="left:1034px;top:122px;width:1px;height:3px;background:#707070;"></div>
<div style="left:1042px;top:122px;width:1px;height:3px;background:#707070;"></div>
<div style="left:1018.5px;top:112.3px;font-size:10.5px;line-height:14px;color:#c4c4c4;white-space:pre;letter-spacing:0.210px;">4400</div>
<div style="left:1051px;top:110px;width:1px;height:15px;background:#707070;"></div>
<div style="left:1060px;top:122px;width:1px;height:3px;background:#707070;"></div>
<div style="left:1069px;top:122px;width:1px;height:3px;background:#707070;"></div>
<div style="left:1078px;top:122px;width:1px;height:3px;background:#707070;"></div>
<div style="left:1053.5px;top:112.3px;font-size:10.5px;line-height:14px;color:#c4c4c4;white-space:pre;letter-spacing:0.210px;">4600</div>
<div style="left:1087px;top:110px;width:1px;height:15px;background:#707070;"></div>
<div style="left:1096px;top:122px;width:1px;height:3px;background:#707070;"></div>
<div style="left:1104px;top:122px;width:1px;height:3px;background:#707070;"></div>
<div style="left:1113px;top:122px;width:1px;height:3px;background:#707070;"></div>
<div style="left:1089.5px;top:112.3px;font-size:10.5px;line-height:14px;color:#c4c4c4;white-space:pre;letter-spacing:0.210px;">4800</div>
<div style="left:1122px;top:110px;width:1px;height:15px;background:#707070;"></div>
<div style="left:1131px;top:122px;width:1px;height:3px;background:#707070;"></div>
<div style="left:1140px;top:122px;width:1px;height:3px;background:#707070;"></div>
<div style="left:1149px;top:122px;width:1px;height:3px;background:#707070;"></div>
<div style="left:1124.5px;top:112.3px;font-size:10.5px;line-height:14px;color:#c4c4c4;white-space:pre;letter-spacing:0.210px;">5000</div>
<div style="left:1158px;top:110px;width:1px;height:15px;background:#707070;"></div>
<div style="left:1166px;top:122px;width:1px;height:3px;background:#707070;"></div>
<div style="left:1175px;top:122px;width:1px;height:3px;background:#707070;"></div>
<div style="left:1184px;top:122px;width:1px;height:3px;background:#707070;"></div>
<div style="left:1160.5px;top:112.3px;font-size:10.5px;line-height:14px;color:#c4c4c4;white-space:pre;letter-spacing:0.210px;">5200</div>
<div style="left:1193px;top:110px;width:1px;height:15px;background:#707070;"></div>
<div style="left:1202px;top:122px;width:1px;height:3px;background:#707070;"></div>
<div style="left:1211px;top:122px;width:1px;height:3px;background:#707070;"></div>
<div style="left:1220px;top:122px;width:1px;height:3px;background:#707070;"></div>
<div style="left:1195.5px;top:112.3px;font-size:10.5px;line-height:14px;color:#c4c4c4;white-space:pre;letter-spacing:0.210px;">5400</div>
<div style="left:1228px;top:110px;width:1px;height:15px;background:#707070;"></div>
<div style="left:1237px;top:122px;width:1px;height:3px;background:#707070;"></div>
<div style="left:1246px;top:122px;width:1px;height:3px;background:#707070;"></div>
<div style="left:1255px;top:122px;width:1px;height:3px;background:#707070;"></div>
<div style="left:1230.5px;top:112.3px;font-size:10.5px;line-height:14px;color:#c4c4c4;white-space:pre;letter-spacing:0.210px;">5600</div>
<div style="left:1264px;top:110px;width:1px;height:15px;background:#707070;"></div>
<div style="left:1273px;top:122px;width:1px;height:3px;background:#707070;"></div>
<div style="left:1282px;top:122px;width:1px;height:3px;background:#707070;"></div>
<div style="left:1290px;top:122px;width:1px;height:3px;background:#707070;"></div>
<div style="left:1266.5px;top:112.3px;font-size:10.5px;line-height:14px;color:#c4c4c4;white-space:pre;letter-spacing:0.210px;">5800</div>
<div style="left:1299px;top:110px;width:1px;height:15px;background:#707070;"></div>
<div style="left:1308px;top:122px;width:1px;height:3px;background:#707070;"></div>
<div style="left:1317px;top:122px;width:1px;height:3px;background:#707070;"></div>
<div style="left:1326px;top:122px;width:1px;height:3px;background:#707070;"></div>
<div style="left:1301.5px;top:112.3px;font-size:10.5px;line-height:14px;color:#c4c4c4;white-space:pre;letter-spacing:0.210px;">6000</div>
<div style="left:1335px;top:110px;width:1px;height:15px;background:#707070;"></div>
<div style="left:1344px;top:122px;width:1px;height:3px;background:#707070;"></div>
<div style="left:1352px;top:122px;width:1px;height:3px;background:#707070;"></div>
<div style="left:1361px;top:122px;width:1px;height:3px;background:#707070;"></div>
<div style="left:1337.5px;top:112.3px;font-size:10.5px;line-height:14px;color:#c4c4c4;white-space:pre;letter-spacing:0.210px;">6200</div>
<div style="left:1370px;top:110px;width:1px;height:15px;background:#707070;"></div>
<div style="left:1379px;top:122px;width:1px;height:3px;background:#707070;"></div>
<div style="left:1388px;top:122px;width:1px;height:3px;background:#707070;"></div>
<div style="left:1397px;top:122px;width:1px;height:3px;background:#707070;"></div>
<div style="left:1372.5px;top:112.3px;font-size:10.5px;line-height:14px;color:#c4c4c4;white-space:pre;letter-spacing:0.210px;">6400</div>
<div style="left:1406px;top:110px;width:1px;height:15px;background:#707070;"></div>
<div style="left:1414px;top:122px;width:1px;height:3px;background:#707070;"></div>
<div style="left:1423px;top:122px;width:1px;height:3px;background:#707070;"></div>
<div style="left:1432px;top:122px;width:1px;height:3px;background:#707070;"></div>
<div style="left:1408.5px;top:112.3px;font-size:10.5px;line-height:14px;color:#c4c4c4;white-space:pre;letter-spacing:0.210px;">6600</div>
<div style="left:1441px;top:110px;width:1px;height:15px;background:#707070;"></div>
<div style="left:1450px;top:122px;width:1px;height:3px;background:#707070;"></div>
<div style="left:1459px;top:122px;width:1px;height:3px;background:#707070;"></div>
<div style="left:1468px;top:122px;width:1px;height:3px;background:#707070;"></div>
<div style="left:1443.5px;top:112.3px;font-size:10.5px;line-height:14px;color:#c4c4c4;white-space:pre;letter-spacing:0.210px;">6800</div>
<div style="left:1476px;top:110px;width:1px;height:15px;background:#707070;"></div>
<div style="left:1485px;top:122px;width:1px;height:3px;background:#707070;"></div>
<div style="left:1494px;top:122px;width:1px;height:3px;background:#707070;"></div>
<div style="left:1503px;top:122px;width:1px;height:3px;background:#707070;"></div>
<div style="left:1478.5px;top:112.3px;font-size:10.5px;line-height:14px;color:#c4c4c4;white-space:pre;letter-spacing:0.210px;">7000</div>
<div style="left:1512px;top:110px;width:1px;height:15px;background:#707070;"></div>
<div style="left:1521px;top:122px;width:1px;height:3px;background:#707070;"></div>
<div style="left:1530px;top:122px;width:1px;height:3px;background:#707070;"></div>
<div style="left:1538px;top:122px;width:1px;height:3px;background:#707070;"></div>
<div style="left:1514.5px;top:112.3px;font-size:10.5px;line-height:14px;color:#c4c4c4;white-space:pre;letter-spacing:0.210px;">7200</div>
<div style="left:1547px;top:110px;width:1px;height:15px;background:#707070;"></div>
<div style="left:1556px;top:122px;width:1px;height:3px;background:#707070;"></div>
<div style="left:1565px;top:122px;width:1px;height:3px;background:#707070;"></div>
<div style="left:1574px;top:122px;width:1px;height:3px;background:#707070;"></div>
<div style="left:1549.5px;top:112.3px;font-size:10.5px;line-height:14px;color:#c4c4c4;white-space:pre;letter-spacing:0.210px;">7400</div>
<div style="left:1583px;top:110px;width:1px;height:15px;background:#707070;"></div>
<div style="left:1592px;top:122px;width:1px;height:3px;background:#707070;"></div>
<div style="left:1600px;top:122px;width:1px;height:3px;background:#707070;"></div>
<div style="left:1609px;top:122px;width:1px;height:3px;background:#707070;"></div>
<div style="left:1585.5px;top:112.3px;font-size:10.5px;line-height:14px;color:#c4c4c4;white-space:pre;letter-spacing:0.210px;">7600</div>
<div style="left:54px;top:127px;width:3px;height:1px;background:#707070;"></div>
<div style="left:42px;top:136px;width:15px;height:1px;background:#707070;"></div>
<div style="left:54px;top:145px;width:3px;height:1px;background:#707070;"></div>
<div style="left:54px;top:153px;width:3px;height:1px;background:#707070;"></div>
<div style="left:54px;top:162px;width:3px;height:1px;background:#707070;"></div>
<div style="left:42.72px;top:137.21px;font-size:10px;line-height:13px;color:#c4c4c4;white-space:pre;">6</div>
<div style="left:42.72px;top:147.21px;font-size:10px;line-height:13px;color:#c4c4c4;white-space:pre;">0</div>
<div style="left:42.72px;top:157.21px;font-size:10px;line-height:13px;color:#c4c4c4;white-space:pre;">0</div>
<div style="left:42px;top:171px;width:15px;height:1px;background:#707070;"></div>
<div style="left:54px;top:180px;width:3px;height:1px;background:#707070;"></div>
<div style="left:54px;top:189px;width:3px;height:1px;background:#707070;"></div>
<div style="left:54px;top:198px;width:3px;height:1px;background:#707070;"></div>
<div style="left:42.72px;top:172.64px;font-size:10px;line-height:13px;color:#c4c4c4;white-space:pre;">4</div>
<div style="left:42.72px;top:182.64px;font-size:10px;line-height:13px;color:#c4c4c4;white-space:pre;">0</div>
<div style="left:42.72px;top:192.64px;font-size:10px;line-height:13px;color:#c4c4c4;white-space:pre;">0</div>
<div style="left:42px;top:207px;width:15px;height:1px;background:#707070;"></div>
<div style="left:54px;top:215px;width:3px;height:1px;background:#707070;"></div>
<div style="left:54px;top:224px;width:3px;height:1px;background:#707070;"></div>
<div style="left:54px;top:233px;width:3px;height:1px;background:#707070;"></div>
<div style="left:42.72px;top:208.07px;font-size:10px;line-height:13px;color:#c4c4c4;white-space:pre;">2</div>
<div style="left:42.72px;top:218.07px;font-size:10px;line-height:13px;color:#c4c4c4;white-space:pre;">0</div>
<div style="left:42.72px;top:228.07px;font-size:10px;line-height:13px;color:#c4c4c4;white-space:pre;">0</div>
<div style="left:42px;top:242px;width:15px;height:1px;background:#707070;"></div>
<div style="left:54px;top:251px;width:3px;height:1px;background:#707070;"></div>
<div style="left:54px;top:260px;width:3px;height:1px;background:#707070;"></div>
<div style="left:54px;top:269px;width:3px;height:1px;background:#707070;"></div>
<div style="left:42.72px;top:243.5px;font-size:10px;line-height:13px;color:#c4c4c4;white-space:pre;">0</div>
<div style="left:42px;top:277px;width:15px;height:1px;background:#707070;"></div>
<div style="left:54px;top:286px;width:3px;height:1px;background:#707070;"></div>
<div style="left:54px;top:295px;width:3px;height:1px;background:#707070;"></div>
<div style="left:54px;top:304px;width:3px;height:1px;background:#707070;"></div>
<div style="left:42.72px;top:278.93px;font-size:10px;line-height:13px;color:#c4c4c4;white-space:pre;">2</div>
<div style="left:42.72px;top:288.93px;font-size:10px;line-height:13px;color:#c4c4c4;white-space:pre;">0</div>
<div style="left:42.72px;top:298.93px;font-size:10px;line-height:13px;color:#c4c4c4;white-space:pre;">0</div>
<div style="left:42px;top:313px;width:15px;height:1px;background:#707070;"></div>
<div style="left:54px;top:322px;width:3px;height:1px;background:#707070;"></div>
<div style="left:54px;top:331px;width:3px;height:1px;background:#707070;"></div>
<div style="left:54px;top:339px;width:3px;height:1px;background:#707070;"></div>
<div style="left:42.72px;top:314.36px;font-size:10px;line-height:13px;color:#c4c4c4;white-space:pre;">4</div>
<div style="left:42.72px;top:324.36px;font-size:10px;line-height:13px;color:#c4c4c4;white-space:pre;">0</div>
<div style="left:42.72px;top:334.36px;font-size:10px;line-height:13px;color:#c4c4c4;white-space:pre;">0</div>
<div style="left:42px;top:348px;width:15px;height:1px;background:#707070;"></div>
<div style="left:54px;top:357px;width:3px;height:1px;background:#707070;"></div>
<div style="left:54px;top:366px;width:3px;height:1px;background:#707070;"></div>
<div style="left:54px;top:375px;width:3px;height:1px;background:#707070;"></div>
<div style="left:42.72px;top:349.79px;font-size:10px;line-height:13px;color:#c4c4c4;white-space:pre;">6</div>
<div style="left:42.72px;top:359.79px;font-size:10px;line-height:13px;color:#c4c4c4;white-space:pre;">0</div>
<div style="left:42.72px;top:369.79px;font-size:10px;line-height:13px;color:#c4c4c4;white-space:pre;">0</div>
<div style="left:42px;top:384px;width:15px;height:1px;background:#707070;"></div>
<div style="left:54px;top:393px;width:3px;height:1px;background:#707070;"></div>
<div style="left:54px;top:401px;width:3px;height:1px;background:#707070;"></div>
<div style="left:54px;top:410px;width:3px;height:1px;background:#707070;"></div>
<div style="left:42.72px;top:385.22px;font-size:10px;line-height:13px;color:#c4c4c4;white-space:pre;">8</div>
<div style="left:42.72px;top:395.22px;font-size:10px;line-height:13px;color:#c4c4c4;white-space:pre;">0</div>
<div style="left:42.72px;top:405.22px;font-size:10px;line-height:13px;color:#c4c4c4;white-space:pre;">0</div>
<div style="left:42px;top:419px;width:15px;height:1px;background:#707070;"></div>
<div style="left:54px;top:428px;width:3px;height:1px;background:#707070;"></div>
<div style="left:54px;top:437px;width:3px;height:1px;background:#707070;"></div>
<div style="left:54px;top:446px;width:3px;height:1px;background:#707070;"></div>
<div style="left:43.28px;top:419.65px;font-size:8px;line-height:10px;color:#c4c4c4;white-space:pre;">1</div>
<div style="left:43.28px;top:426.95px;font-size:8px;line-height:10px;color:#c4c4c4;white-space:pre;">0</div>
<div style="left:43.28px;top:434.25px;font-size:8px;line-height:10px;color:#c4c4c4;white-space:pre;">0</div>
<div style="left:43.28px;top:441.55px;font-size:8px;line-height:10px;color:#c4c4c4;white-space:pre;">0</div>
<div style="left:42px;top:455px;width:15px;height:1px;background:#707070;"></div>
<div style="left:54px;top:463px;width:3px;height:1px;background:#707070;"></div>
<div style="left:54px;top:472px;width:3px;height:1px;background:#707070;"></div>
<div style="left:54px;top:481px;width:3px;height:1px;background:#707070;"></div>
<div style="left:43.28px;top:455.08px;font-size:8px;line-height:10px;color:#c4c4c4;white-space:pre;">1</div>
<div style="left:43.28px;top:462.38px;font-size:8px;line-height:10px;color:#c4c4c4;white-space:pre;">2</div>
<div style="left:43.28px;top:469.68px;font-size:8px;line-height:10px;color:#c4c4c4;white-space:pre;">0</div>
<div style="left:43.28px;top:476.98px;font-size:8px;line-height:10px;color:#c4c4c4;white-space:pre;">0</div>
<div style="left:42px;top:490px;width:15px;height:1px;background:#707070;"></div>
<div style="left:54px;top:499px;width:3px;height:1px;background:#707070;"></div>
<div style="left:54px;top:508px;width:3px;height:1px;background:#707070;"></div>
<div style="left:54px;top:517px;width:3px;height:1px;background:#707070;"></div>
<div style="left:43.28px;top:490.51px;font-size:8px;line-height:10px;color:#c4c4c4;white-space:pre;">1</div>
<div style="left:43.28px;top:497.81px;font-size:8px;line-height:10px;color:#c4c4c4;white-space:pre;">4</div>
<div style="left:43.28px;top:505.11px;font-size:8px;line-height:10px;color:#c4c4c4;white-space:pre;">0</div>
<div style="left:43.28px;top:512.41px;font-size:8px;line-height:10px;color:#c4c4c4;white-space:pre;">0</div>
<div style="left:42px;top:525px;width:15px;height:1px;background:#707070;"></div>
<div style="left:54px;top:534px;width:3px;height:1px;background:#707070;"></div>
<div style="left:54px;top:543px;width:3px;height:1px;background:#707070;"></div>
<div style="left:54px;top:552px;width:3px;height:1px;background:#707070;"></div>
<div style="left:43.28px;top:525.94px;font-size:8px;line-height:10px;color:#c4c4c4;white-space:pre;">1</div>
<div style="left:43.28px;top:533.24px;font-size:8px;line-height:10px;color:#c4c4c4;white-space:pre;">6</div>
<div style="left:43.28px;top:540.54px;font-size:8px;line-height:10px;color:#c4c4c4;white-space:pre;">0</div>
<div style="left:43.28px;top:547.84px;font-size:8px;line-height:10px;color:#c4c4c4;white-space:pre;">0</div>
<div style="left:42px;top:561px;width:15px;height:1px;background:#707070;"></div>
<div style="left:54px;top:570px;width:3px;height:1px;background:#707070;"></div>
<div style="left:54px;top:579px;width:3px;height:1px;background:#707070;"></div>
<div style="left:54px;top:587px;width:3px;height:1px;background:#707070;"></div>
<div style="left:43.28px;top:561.37px;font-size:8px;line-height:10px;color:#c4c4c4;white-space:pre;">1</div>
<div style="left:43.28px;top:568.67px;font-size:8px;line-height:10px;color:#c4c4c4;white-space:pre;">8</div>
<div style="left:43.28px;top:575.97px;font-size:8px;line-height:10px;color:#c4c4c4;white-space:pre;">0</div>
<div style="left:43.28px;top:583.27px;font-size:8px;line-height:10px;color:#c4c4c4;white-space:pre;">0</div>
<div style="left:42px;top:596px;width:15px;height:1px;background:#707070;"></div>
<div style="left:54px;top:605px;width:3px;height:1px;background:#707070;"></div>
<div style="left:54px;top:614px;width:3px;height:1px;background:#707070;"></div>
<div style="left:54px;top:623px;width:3px;height:1px;background:#707070;"></div>
<div style="left:43.28px;top:596.8px;font-size:8px;line-height:10px;color:#c4c4c4;white-space:pre;">2</div>
<div style="left:43.28px;top:604.1px;font-size:8px;line-height:10px;color:#c4c4c4;white-space:pre;">0</div>
<div style="left:43.28px;top:611.4px;font-size:8px;line-height:10px;color:#c4c4c4;white-space:pre;">0</div>
<div style="left:43.28px;top:618.7px;font-size:8px;line-height:10px;color:#c4c4c4;white-space:pre;">0</div>
<div style="left:42px;top:632px;width:15px;height:1px;background:#707070;"></div>
<div style="left:54px;top:641px;width:3px;height:1px;background:#707070;"></div>
<div style="left:54px;top:649px;width:3px;height:1px;background:#707070;"></div>
<div style="left:54px;top:658px;width:3px;height:1px;background:#707070;"></div>
<div style="left:43.28px;top:632.23px;font-size:8px;line-height:10px;color:#c4c4c4;white-space:pre;">2</div>
<div style="left:43.28px;top:639.53px;font-size:8px;line-height:10px;color:#c4c4c4;white-space:pre;">2</div>
<div style="left:43.28px;top:646.83px;font-size:8px;line-height:10px;color:#c4c4c4;white-space:pre;">0</div>
<div style="left:43.28px;top:654.13px;font-size:8px;line-height:10px;color:#c4c4c4;white-space:pre;">0</div>
<div style="left:42px;top:667px;width:15px;height:1px;background:#707070;"></div>
<div style="left:54px;top:676px;width:3px;height:1px;background:#707070;"></div>
<div style="left:54px;top:685px;width:3px;height:1px;background:#707070;"></div>
<div style="left:54px;top:694px;width:3px;height:1px;background:#707070;"></div>
<div style="left:43.28px;top:667.66px;font-size:8px;line-height:10px;color:#c4c4c4;white-space:pre;">2</div>
<div style="left:43.28px;top:674.96px;font-size:8px;line-height:10px;color:#c4c4c4;white-space:pre;">4</div>
<div style="left:43.28px;top:682.26px;font-size:8px;line-height:10px;color:#c4c4c4;white-space:pre;">0</div>
<div style="left:43.28px;top:689.56px;font-size:8px;line-height:10px;color:#c4c4c4;white-space:pre;">0</div>
<div style="left:42px;top:703px;width:15px;height:1px;background:#707070;"></div>
<div style="left:54px;top:711px;width:3px;height:1px;background:#707070;"></div>
<div style="left:54px;top:720px;width:3px;height:1px;background:#707070;"></div>
<div style="left:54px;top:729px;width:3px;height:1px;background:#707070;"></div>
<div style="left:43.28px;top:703.09px;font-size:8px;line-height:10px;color:#c4c4c4;white-space:pre;">2</div>
<div style="left:43.28px;top:710.39px;font-size:8px;line-height:10px;color:#c4c4c4;white-space:pre;">6</div>
<div style="left:43.28px;top:717.69px;font-size:8px;line-height:10px;color:#c4c4c4;white-space:pre;">0</div>
<div style="left:43.28px;top:724.99px;font-size:8px;line-height:10px;color:#c4c4c4;white-space:pre;">0</div>
<div style="left:42px;top:738px;width:15px;height:1px;background:#707070;"></div>
<div style="left:54px;top:747px;width:3px;height:1px;background:#707070;"></div>
<div style="left:54px;top:756px;width:3px;height:1px;background:#707070;"></div>
<div style="left:54px;top:765px;width:3px;height:1px;background:#707070;"></div>
<div style="left:43.28px;top:738.52px;font-size:8px;line-height:10px;color:#c4c4c4;white-space:pre;">2</div>
<div style="left:43.28px;top:745.82px;font-size:8px;line-height:10px;color:#c4c4c4;white-space:pre;">8</div>
<div style="left:43.28px;top:753.12px;font-size:8px;line-height:10px;color:#c4c4c4;white-space:pre;">0</div>
<div style="left:43.28px;top:760.42px;font-size:8px;line-height:10px;color:#c4c4c4;white-space:pre;">0</div>
<div style="left:42px;top:773px;width:15px;height:1px;background:#707070;"></div>
<div style="left:54px;top:782px;width:3px;height:1px;background:#707070;"></div>
<div style="left:54px;top:791px;width:3px;height:1px;background:#707070;"></div>
<div style="left:54px;top:800px;width:3px;height:1px;background:#707070;"></div>
<div style="left:43.28px;top:773.95px;font-size:8px;line-height:10px;color:#c4c4c4;white-space:pre;">3</div>
<div style="left:43.28px;top:781.25px;font-size:8px;line-height:10px;color:#c4c4c4;white-space:pre;">0</div>
<div style="left:43.28px;top:788.55px;font-size:8px;line-height:10px;color:#c4c4c4;white-space:pre;">0</div>
<div style="left:43.28px;top:795.85px;font-size:8px;line-height:10px;color:#c4c4c4;white-space:pre;">0</div>
<div style="left:42px;top:809px;width:15px;height:1px;background:#707070;"></div>
<div style="left:54px;top:818px;width:3px;height:1px;background:#707070;"></div>
<div style="left:54px;top:827px;width:3px;height:1px;background:#707070;"></div>
<div style="left:54px;top:835px;width:3px;height:1px;background:#707070;"></div>
<div style="left:43.28px;top:809.38px;font-size:8px;line-height:10px;color:#c4c4c4;white-space:pre;">3</div>
<div style="left:43.28px;top:816.68px;font-size:8px;line-height:10px;color:#c4c4c4;white-space:pre;">2</div>
<div style="left:43.28px;top:823.98px;font-size:8px;line-height:10px;color:#c4c4c4;white-space:pre;">0</div>
<div style="left:43.28px;top:831.28px;font-size:8px;line-height:10px;color:#c4c4c4;white-space:pre;">0</div>
<div style="left:42px;top:844px;width:15px;height:1px;background:#707070;"></div>
<div style="left:54px;top:853px;width:3px;height:1px;background:#707070;"></div>
<div style="left:54px;top:862px;width:3px;height:1px;background:#707070;"></div>
<div style="left:54px;top:871px;width:3px;height:1px;background:#707070;"></div>
<div style="left:43.28px;top:844.81px;font-size:8px;line-height:10px;color:#c4c4c4;white-space:pre;">3</div>
<div style="left:43.28px;top:852.11px;font-size:8px;line-height:10px;color:#c4c4c4;white-space:pre;">4</div>
<div style="left:43.28px;top:859.41px;font-size:8px;line-height:10px;color:#c4c4c4;white-space:pre;">0</div>
<div style="left:43.28px;top:866.71px;font-size:8px;line-height:10px;color:#c4c4c4;white-space:pre;">0</div>
<div style="left:42px;top:880px;width:15px;height:1px;background:#707070;"></div>
<div style="left:54px;top:889px;width:3px;height:1px;background:#707070;"></div>
<div style="left:54px;top:897px;width:3px;height:1px;background:#707070;"></div>
<div style="left:54px;top:906px;width:3px;height:1px;background:#707070;"></div>
<div style="left:43.28px;top:880.24px;font-size:8px;line-height:10px;color:#c4c4c4;white-space:pre;">3</div>
<div style="left:43.28px;top:887.54px;font-size:8px;line-height:10px;color:#c4c4c4;white-space:pre;">6</div>
<div style="left:43.28px;top:894.84px;font-size:8px;line-height:10px;color:#c4c4c4;white-space:pre;">0</div>
<div style="left:43.28px;top:902.14px;font-size:8px;line-height:10px;color:#c4c4c4;white-space:pre;">0</div>
<div style="left:42px;top:915px;width:15px;height:1px;background:#707070;"></div>
<div style="left:54px;top:924px;width:3px;height:1px;background:#707070;"></div>
<div style="left:54px;top:933px;width:3px;height:1px;background:#707070;"></div>
<div style="left:54px;top:942px;width:3px;height:1px;background:#707070;"></div>
<div style="left:43.28px;top:915.67px;font-size:8px;line-height:10px;color:#c4c4c4;white-space:pre;">3</div>
<div style="left:43.28px;top:922.97px;font-size:8px;line-height:10px;color:#c4c4c4;white-space:pre;">8</div>
<div style="left:43.28px;top:930.27px;font-size:8px;line-height:10px;color:#c4c4c4;white-space:pre;">0</div>
<div style="left:43.28px;top:937.57px;font-size:8px;line-height:10px;color:#c4c4c4;white-space:pre;">0</div>
<div style="left:42px;top:951px;width:15px;height:1px;background:#707070;"></div>
<div style="left:54px;top:959px;width:3px;height:1px;background:#707070;"></div>
<div style="left:54px;top:968px;width:3px;height:1px;background:#707070;"></div>
<div style="left:54px;top:977px;width:3px;height:1px;background:#707070;"></div>
<div style="left:43.28px;top:951.1px;font-size:8px;line-height:10px;color:#c4c4c4;white-space:pre;">4</div>
<div style="left:43.28px;top:958.4px;font-size:8px;line-height:10px;color:#c4c4c4;white-space:pre;">0</div>
<div style="left:43.28px;top:965.7px;font-size:8px;line-height:10px;color:#c4c4c4;white-space:pre;">0</div>
<div style="left:43.28px;top:973px;font-size:8px;line-height:10px;color:#c4c4c4;white-space:pre;">0</div>
<div style="left:42px;top:986px;width:15px;height:1px;background:#707070;"></div>
<div style="left:54px;top:995px;width:3px;height:1px;background:#707070;"></div>
<div style="left:54px;top:1004px;width:3px;height:1px;background:#707070;"></div>
<div style="left:54px;top:1013px;width:3px;height:1px;background:#707070;"></div>
<div style="left:43.28px;top:986.53px;font-size:8px;line-height:10px;color:#c4c4c4;white-space:pre;">4</div>
<div style="left:43.28px;top:993.83px;font-size:8px;line-height:10px;color:#c4c4c4;white-space:pre;">2</div>
<div style="left:43.28px;top:1001.13px;font-size:8px;line-height:10px;color:#c4c4c4;white-space:pre;">0</div>
<div style="left:43.28px;top:1008.43px;font-size:8px;line-height:10px;color:#c4c4c4;white-space:pre;">0</div>
<div style="left:42px;top:1021px;width:15px;height:1px;background:#707070;"></div>
<div style="left:54px;top:1030px;width:3px;height:1px;background:#707070;"></div>
<div style="left:54px;top:1039px;width:3px;height:1px;background:#707070;"></div>
<div style="left:54px;top:1048px;width:3px;height:1px;background:#707070;"></div>
<div style="left:43.28px;top:1021.96px;font-size:8px;line-height:10px;color:#c4c4c4;white-space:pre;">4</div>
<div style="left:43.28px;top:1029.26px;font-size:8px;line-height:10px;color:#c4c4c4;white-space:pre;">4</div>
<div style="left:43.28px;top:1036.56px;font-size:8px;line-height:10px;color:#c4c4c4;white-space:pre;">0</div>
<div style="left:43.28px;top:1043.86px;font-size:8px;line-height:10px;color:#c4c4c4;white-space:pre;">0</div>
<div style="left:42px;top:1057px;width:15px;height:1px;background:#707070;"></div>
<div style="left:41px;top:126px;width:16px;height:8px;overflow:hidden;"><div style="left:1.7px;top:-5.5px;font-size:10px;line-height:13px;color:#c4c4c4">0</div></div>
<div style="left:903px;top:110px;width:1px;height:15px;background:repeating-linear-gradient(180deg,#ddd 0 1px,transparent 1px 2px);"></div>
<div style="left:42px;top:613px;width:15px;height:1px;background:repeating-linear-gradient(90deg,#ddd 0 1px,transparent 1px 2px);"></div>
<div style="left:58px;top:126px;width:1563px;height:937px;background:#282828;"></div>
<div style="left:1621px;top:109px;width:16px;height:971px;background:#4d4d4d;"></div>
<div style="left:1624px;top:399px;width:10px;height:372px;background:#6a6a6a;border-radius:5px;"></div>
<div style="left:1637px;top:80px;width:3px;height:1000px;background:#3a3a3a;"></div>
<div style="left:41px;top:1063px;width:1580px;height:17px;background:#4b4b4b;"></div>
<div style="left:41px;top:1063px;width:244px;height:17px;background:#505050;"></div>
<div style="left:41px;top:1063px;width:58px;height:17px;background:#454545;"></div>
<div style="left:99px;top:1063px;width:1px;height:17px;background:#3c3c3c;"></div>
<div style="left:284px;top:1063px;width:1px;height:17px;background:#3c3c3c;"></div>
<div style="left:41px;top:1062px;width:1580px;height:1px;background:#3a3a3a;"></div>
<div style="left:56px;top:1064px;font-size:10.5px;line-height:14px;color:#e4e4e4;white-space:pre;letter-spacing:0.046px;">6.25%</div>
<div style="left:139px;top:1064px;font-size:10.5px;line-height:14px;color:#dcdcdc;white-space:pre;letter-spacing:0.174px;">Doc: 626.0M/4.73G</div>
<svg style="left:274px;top:1066px;" width="6" height="10" viewBox="0 0 6 10"><path d="M1.5 1l3 4-3 4" fill="none" stroke="#d0d0d0" stroke-width="1.2"/></svg>
<div style="left:703px;top:1066px;width:502px;height:10px;background:#6b6b6b;border-radius:5px;"></div>
<div style="left:0px;top:1079px;width:1920px;height:1px;background:#3a3a3a;"></div>
<div style="left:1640px;top:80px;width:280px;height:12px;background:#434343;"></div>
<div style="left:1640px;top:91px;width:280px;height:1px;background:#383838;"></div>
<div style="left:1664px;top:78px;font-size:11px;line-height:14px;color:#c8c8c8;white-space:pre;letter-spacing:0.337px;">‹‹</div>
<div style="left:1905px;top:78px;font-size:11px;line-height:14px;color:#c8c8c8;white-space:pre;letter-spacing:0.337px;">››</div>
<div style="left:1640px;top:92px;width:37px;height:988px;background:#535353;"></div>
<div style="left:1677px;top:92px;width:3px;height:988px;background:#3a3a3a;"></div>
<div style="left:1640px;top:160px;width:37px;height:1px;background:#3a3a3a;"></div>
<div style="left:1640px;top:161px;width:37px;height:1px;background:#5c5c5c;"></div>
<div style="left:1640px;top:201px;width:37px;height:1px;background:#3a3a3a;"></div>
<div style="left:1640px;top:202px;width:37px;height:1px;background:#5c5c5c;"></div>
<div style="left:1640px;top:270px;width:37px;height:1px;background:#3a3a3a;"></div>
<div style="left:1640px;top:271px;width:37px;height:1px;background:#5c5c5c;"></div>
<div style="left:1640px;top:338px;width:37px;height:1px;background:#3a3a3a;"></div>
<div style="left:1640px;top:339px;width:37px;height:1px;background:#5c5c5c;"></div>
<div style="left:1640px;top:380px;width:37px;height:1px;background:#3a3a3a;"></div>
<div style="left:1640px;top:381px;width:37px;height:1px;background:#5c5c5c;"></div>
<div style="left:1640px;top:448px;width:37px;height:1px;background:#3a3a3a;"></div>
<div style="left:1640px;top:449px;width:37px;height:1px;background:#5c5c5c;"></div>
<div style="left:1640px;top:490px;width:37px;height:1px;background:#3a3a3a;"></div>
<div style="left:1640px;top:491px;width:37px;height:1px;background:#5c5c5c;"></div>
<div style="left:1640px;top:530px;width:37px;height:1px;background:#3a3a3a;"></div>
<div style="left:1640px;top:531px;width:37px;height:1px;background:#5c5c5c;"></div>
<div style="left:1649px;top:95.5px;width:20px;height:3.5px;background:repeating-linear-gradient(90deg,#3e3e3e 0 1px,transparent 1px 2px);"></div>
<div style="left:1649px;top:164.5px;width:20px;height:3.5px;background:repeating-linear-gradient(90deg,#3e3e3e 0 1px,transparent 1px 2px);"></div>
<div style="left:1649px;top:205.5px;width:20px;height:3.5px;background:repeating-linear-gradient(90deg,#3e3e3e 0 1px,transparent 1px 2px);"></div>
<div style="left:1649px;top:274.5px;width:20px;height:3.5px;background:repeating-linear-gradient(90deg,#3e3e3e 0 1px,transparent 1px 2px);"></div>
<div style="left:1649px;top:342.5px;width:20px;height:3.5px;background:repeating-linear-gradient(90deg,#3e3e3e 0 1px,transparent 1px 2px);"></div>
<div style="left:1649px;top:384.5px;width:20px;height:3.5px;background:repeating-linear-gradient(90deg,#3e3e3e 0 1px,transparent 1px 2px);"></div>
<div style="left:1649px;top:452.5px;width:20px;height:3.5px;background:repeating-linear-gradient(90deg,#3e3e3e 0 1px,transparent 1px 2px);"></div>
<div style="left:1649px;top:494.5px;width:20px;height:3.5px;background:repeating-linear-gradient(90deg,#3e3e3e 0 1px,transparent 1px 2px);"></div>
<svg style="left:1651px;top:105px;" width="20" height="20" viewBox="0 0 20 20"><rect x="3" y="2.5" width="4" height="4" fill="none" stroke="#dcdcdc" stroke-width="1.1"/><rect x="3" y="8.5" width="4" height="4" fill="none" stroke="#dcdcdc" stroke-width="1.1"/><rect x="2.5" y="14" width="5" height="5" fill="#dcdcdc"/><path d="M11 14c5-1 6.5-7 2.5-10.5" fill="none" stroke="#dcdcdc" stroke-width="1.5"/><path d="M10.5 3.5l5-1-1.5 4.5z" fill="#dcdcdc"/></svg>
<svg style="left:1649px;top:134px;" width="20" height="20" viewBox="0 0 20 20"><path d="M4 3.5l13 6.5-13 6.5z" fill="#dcdcdc"/></svg>
<svg style="left:1649px;top:174px;" width="20" height="20" viewBox="0 0 20 20"><path d="M2 3h6.5l8 11h-6.5z M2 3v8h3.5 M10 8h6.5v9.5h-6.5 M12 10.5l3 4.5" fill="none" stroke="#dcdcdc" stroke-width="1.2"/></svg>
<svg style="left:1649px;top:215px;" width="20" height="20" viewBox="0 0 20 20"><rect x="6" y="11" width="8" height="8" fill="#dcdcdc"/><path d="M8 10l-1-3.5c-1-1-3-1.5-2.5-4 2 .5 3 2 3 4zM10 10v-5l-1-1v-3h2v3l-1 1zM12 10l1-3.5c0-2 2-3 4-2.5-.5 2-2 2.5-3.5 3z" fill="#dcdcdc" stroke="#dcdcdc" stroke-width=".8"/></svg>
<svg style="left:1649px;top:243px;" width="20" height="20" viewBox="0 0 20 20"><path d="M1 5c2-2 5-2 6.5 0-1.5 2-4.5 2-6.5 0z" fill="#dcdcdc"/><rect x="7.5" y="4.2" width="10.5" height="1.6" fill="#dcdcdc"/><rect x="3" y="11.2" width="9" height="1.6" fill="#dcdcdc"/><path d="M12 12c1.5-3 4.5-3 6 0l-.5 5c-2-1-4-3-5.5-5z" fill="#dcdcdc"/></svg>
<div style="left:1652px;top:282.5px;font-size:18px;line-height:23px;color:#dcdcdc;white-space:pre;">A</div>
<div style="left:1665px;top:285px;width:1px;height:18px;background:#dcdcdc;"></div>
<div style="left:1653.72px;top:309.5px;font-size:19px;line-height:25px;color:#dcdcdc;white-space:pre;font-weight:700;">¶</div>
<div style="left:1652px;top:350.5px;font-size:21px;line-height:27px;color:#dcdcdc;white-space:pre;font-style:italic;font-family:'Liberation Serif',serif;">A</div>
<svg style="left:1649px;top:394px;" width="20" height="20" viewBox="0 0 20 20"><rect x="3.5" y="2.5" width="13" height="15" fill="none" stroke="#dcdcdc" stroke-width="1.4"/><rect x="5.5" y="5" width="4" height="4" fill="#dcdcdc"/><rect x="11" y="5" width="3.5" height="1.3" fill="#dcdcdc"/><rect x="11" y="7.5" width="3.5" height="1.3" fill="#dcdcdc"/><rect x="5.5" y="11" width="9" height="4" fill="#dcdcdc"/></svg>
<svg style="left:1649px;top:422px;" width="20" height="20" viewBox="0 0 20 20"><path d="M3.5 2.5h13v10l-5 5h-8z" fill="#dcdcdc"/><path d="M5.5 5.5h9M5.5 8h9M5.5 10.5h6" stroke="#535353" stroke-width="1.1"/><path d="M12.5 17v-3.5h3.5" fill="none" stroke="#535353" stroke-width="1"/></svg>
<svg style="left:1649px;top:463px;" width="20" height="20" viewBox="0 0 20 20"><path d="M10 2l7 3.5v8.5l-7 4-7-4v-8.5zM3 5.5l7 4 7-4M10 9.5v8.5" fill="none" stroke="#dcdcdc" stroke-width="1.3" stroke-linejoin="round"/></svg>
<svg style="left:1649px;top:503px;" width="20" height="20" viewBox="0 0 20 20"><path d="M6 3l4 2v5l-4 2-4-2v-5zM2 5l4 2 4-2M6 7v5" fill="none" stroke="#dcdcdc" stroke-width="1.1"/><rect x="12.5" y="3" width="4" height="3.5" fill="#dcdcdc"/><rect x="12.5" y="8" width="4" height="3.5" fill="#dcdcdc"/><rect x="2" y="14" width="15" height="3.5" fill="#dcdcdc"/><path d="M13 18.5h4l-2 2z" fill="#dcdcdc"/></svg>
<div style="left:1680px;top:92px;width:240px;height:988px;background:#535353;"></div>
<div style="left:1680px;top:92px;width:240px;height:28px;background:#424242;"></div>
<div style="left:1680px;top:119px;width:240px;height:1px;background:#383838;"></div>
<div style="left:1680px;top:92px;width:45px;height:28px;background:#535353;"></div>
<div style="left:1689px;top:98px;font-size:12px;line-height:16px;color:#f4f4f4;white-space:pre;letter-spacing:-0.666px;font-weight:700;">Color</div>
<div style="left:1725px;top:92px;width:1px;height:27px;background:#383838;"></div>
<div style="left:1734px;top:98px;font-size:12px;line-height:16px;color:#c0c0c0;white-space:pre;letter-spacing:-1.045px;font-weight:700;">Swatches</div>
<div style="left:1790px;top:92px;width:1px;height:27px;background:#383838;"></div>
<div style="left:1901px;top:101.5px;width:10px;height:1px;background:#c8c8c8;"></div>
<div style="left:1901px;top:104px;width:10px;height:1px;background:#c8c8c8;"></div>
<div style="left:1901px;top:106.5px;width:10px;height:1px;background:#c8c8c8;"></div>
<div style="left:1901px;top:109px;width:10px;height:1px;background:#c8c8c8;"></div>
<div style="left:1700px;top:140px;width:19px;height:19px;background:#fff;border:1px solid #3a3a3a;"></div>
<div style="left:1688px;top:129px;width:22px;height:22px;background:#352b1f;border:1px solid #e8e8e8;box-shadow:0 0 0 1px #8a8a8a,inset 0 0 0 1px #222;"></div>
<div style="left:1725px;top:127px;width:142px;height:172px;background:linear-gradient(180deg,rgba(0,0,0,0) 0%,#000 100%),linear-gradient(90deg,#fff 0%,#ffd000 100%);"></div>
<div style="left:1785.5px;top:260px;width:9.5px;height:9.5px;border:1.2px solid #fff;border-radius:50%;"></div>
<div style="left:1884px;top:127px;width:19px;height:172px;background:linear-gradient(180deg,#f00 0%,#f0f 16.6%,#00f 33.3%,#0ff 50%,#0f0 66.6%,#ff0 83.3%,#f00 100%);"></div>
<svg style="left:1875px;top:269px;" width="7" height="9" viewBox="0 0 7 9"><path d="M0 1q0-1 1-1h2l3.5 4.5-3.5 4.5h-2q-1 0-1-1z" fill="#e8e8e8"/></svg>
<div style="left:1680px;top:305px;width:240px;height:3px;background:#3a3a3a;"></div>
<div style="left:1680px;top:308px;width:240px;height:28px;background:#424242;"></div>
<div style="left:1680px;top:335px;width:240px;height:1px;background:#383838;"></div>
<div style="left:1689px;top:314px;font-size:12px;line-height:16px;color:#c0c0c0;white-space:pre;letter-spacing:-0.632px;font-weight:700;">Libraries</div>
<div style="left:1742px;top:308px;width:1px;height:27px;background:#383838;"></div>
<div style="left:1742px;top:308px;width:83px;height:28px;background:#535353;"></div>
<div style="left:1752px;top:314px;font-size:12px;line-height:16px;color:#f4f4f4;white-space:pre;letter-spacing:-0.698px;font-weight:700;">Adjustments</div>
<div style="left:1825px;top:308px;width:1px;height:27px;background:#383838;"></div>
<div style="left:1833px;top:314px;font-size:12px;line-height:16px;color:#c0c0c0;white-space:pre;letter-spacing:-0.726px;font-weight:700;">Styles</div>
<div style="left:1872px;top:308px;width:1px;height:27px;background:#383838;"></div>
<div style="left:1901px;top:317.5px;width:10px;height:1px;background:#c8c8c8;"></div>
<div style="left:1901px;top:320px;width:10px;height:1px;background:#c8c8c8;"></div>
<div style="left:1901px;top:322.5px;width:10px;height:1px;background:#c8c8c8;"></div>
<div style="left:1901px;top:325px;width:10px;height:1px;background:#c8c8c8;"></div>
<div style="left:1688px;top:340px;font-size:11px;line-height:14px;color:#dedede;white-space:pre;letter-spacing:-0.177px;font-weight:700;">Add an adjustment</div>
<svg style="left:1726px;top:359px;" width="18" height="16" viewBox="0 0 18 16"><circle cx="9" cy="8" r="3.5" fill="none" stroke="#dcdcdc" stroke-width="1.2"/><path d="M9 4.5a3.5 3.5 0 0 1 0 7z" fill="#dcdcdc"/><path d="M9 0v2.5M9 13.5v2.5M1 8h2.5M14.5 8h2.5M3.3 2.3l1.8 1.8M12.9 11.9l1.8 1.8M3.3 13.7l1.8-1.8M12.9 4.1l1.8-1.8" stroke="#dcdcdc" stroke-width="1.1"/></svg>
<svg style="left:1750px;top:359px;" width="18" height="16" viewBox="0 0 18 16"><path d="M0 14v-6l1.5 2 1-6 1.5 5 1-8 1.5 7 1-5 1.5 4 1-7 1.5 8 1-5 1.5 3 1-5 1 4 1-2v12z" fill="#dcdcdc"/></svg>
<svg style="left:1774px;top:359px;" width="18" height="16" viewBox="0 0 18 16"><rect x="1" y="1" width="16" height="14" fill="none" stroke="#dcdcdc" stroke-width="1"/><path d="M1 5.7h16M1 10.3h16M6.3 1v14M11.7 1v14" stroke="#dcdcdc" stroke-width=".7"/><path d="M1 15c7-1 9-6 16-14" fill="none" stroke="#dcdcdc" stroke-width="1.2"/></svg>
<svg style="left:1798px;top:359px;" width="18" height="16" viewBox="0 0 18 16"><rect x="1" y="1.5" width="16" height="13" fill="#dcdcdc"/><path d="M17 1.5v13h-16z" fill="#535353" stroke="#dcdcdc" stroke-width="1"/><path d="M3 5h4M5 3v4" stroke="#535353" stroke-width="1.2"/><path d="M11 11.5h4" stroke="#dcdcdc" stroke-width="1.2"/></svg>
<svg style="left:1822px;top:359px;" width="18" height="16" viewBox="0 0 18 16"><defs><linearGradient id="vg" x2="0" y2="1"><stop offset="0" stop-color="#dcdcdc"/><stop offset="1" stop-color="#555"/></linearGradient></defs><path d="M1.5 2h15l-7.5 12.5z" fill="url(#vg)" stroke="#dcdcdc" stroke-width="1.2"/></svg>
<svg style="left:1715px;top:386px;" width="18" height="16" viewBox="0 0 18 16"><rect x="1" y="1.5" width="16" height="13" fill="none" stroke="#dcdcdc" stroke-width="1.1"/><path d="M1 7h16M5 1.5v5.5M9 1.5v5.5M13 1.5v5.5" stroke="#dcdcdc" stroke-width="1"/><defs><linearGradient id="hg"><stop offset="0" stop-color="#555"/><stop offset="1" stop-color="#dcdcdc"/></linearGradient></defs><rect x="2" y="8.5" width="14" height="5" fill="url(#hg)"/></svg>
<svg style="left:1739px;top:386px;" width="18" height="16" viewBox="0 0 18 16"><path d="M9 1v12M3 3.5h12M5.5 14h7" stroke="#dcdcdc" stroke-width="1.2"/><path d="M3 3.5l-2.5 6a2.6 2.6 0 0 0 5 0zM15 3.5l-2.5 6a2.6 2.6 0 0 0 5 0z" fill="none" stroke="#dcdcdc" stroke-width="1"/></svg>
<svg style="left:1763px;top:386px;" width="18" height="16" viewBox="0 0 18 16"><rect x="1" y="1.5" width="16" height="13" fill="none" stroke="#dcdcdc" stroke-width="1.2"/><rect x="9" y="1.5" width="8" height="13" fill="#dcdcdc"/></svg>
<svg style="left:1786px;top:386px;" width="18" height="16" viewBox="0 0 18 16"><rect x="1" y="3.5" width="13" height="9" rx="1" fill="#dcdcdc"/><rect x="4.5" y="1.5" width="5" height="2.5" fill="#dcdcdc"/><circle cx="7.5" cy="8" r="2.5" fill="#535353"/><circle cx="14" cy="12" r="3" fill="#535353" stroke="#dcdcdc" stroke-width="1.1"/></svg>
<svg style="left:1810px;top:386px;" width="18" height="16" viewBox="0 0 18 16"><circle cx="9" cy="5.5" r="4.8" fill="#dcdcdc" fill-opacity=".9"/><circle cx="5.5" cy="10.5" r="4.8" fill="#9a9a9a" fill-opacity=".85"/><circle cx="12.5" cy="10.5" r="4.8" fill="#bbb" fill-opacity=".85"/></svg>
<svg style="left:1834px;top:386px;" width="18" height="16" viewBox="0 0 18 16"><rect x="1.5" y="2" width="15" height="12" fill="none" stroke="#dcdcdc" stroke-width="1.1"/><path d="M1.5 6h15M1.5 10h15M6.5 2v12M11.5 2v12" stroke="#dcdcdc" stroke-width="1"/></svg>
<svg style="left:1727px;top:413px;" width="18" height="16" viewBox="0 0 18 16"><rect x="1" y="1.5" width="16" height="13" fill="#dcdcdc"/><path d="M4 12.5c0-4 3-8 10-9c0 4-3 8-10 9z" fill="#535353"/><path d="M3 14l12-12" stroke="#dcdcdc" stroke-width="1"/></svg>
<svg style="left:1751px;top:413px;" width="18" height="16" viewBox="0 0 18 16"><rect x="1" y="1.5" width="16" height="13" fill="#777" stroke="#dcdcdc" stroke-width="1.1"/><path d="M1 10l10-8.5h6l-16 13z" fill="#dcdcdc"/></svg>
<svg style="left:1775px;top:413px;" width="18" height="16" viewBox="0 0 18 16"><rect x="1" y="1.5" width="16" height="13" fill="#dcdcdc"/><path d="M1.5 14v-3h4v-3h4v-3h4v-3h3.5" fill="none" stroke="#535353" stroke-width="1.6"/></svg>
<svg style="left:1799px;top:413px;" width="18" height="16" viewBox="0 0 18 16"><rect x="1" y="1.5" width="16" height="13" fill="#777" stroke="#dcdcdc" stroke-width="1.1"/><path d="M1 1.5l8 6.5-8 6.5zM17 1.5l-8 6.5 8 6.5z" fill="#dcdcdc"/></svg>
<svg style="left:1823px;top:413px;" width="18" height="16" viewBox="0 0 18 16"><defs><linearGradient id="gg"><stop offset="0" stop-color="#444"/><stop offset="1" stop-color="#fff"/></linearGradient></defs><rect x="1" y="1.5" width="16" height="13" fill="url(#gg)" stroke="#dcdcdc" stroke-width="1.1"/></svg>
<div style="left:1680px;top:437px;width:240px;height:3px;background:#3a3a3a;"></div>
<div style="left:1680px;top:441px;width:240px;height:28px;background:#424242;"></div>
<div style="left:1680px;top:468px;width:240px;height:1px;background:#383838;"></div>
<div style="left:1680px;top:441px;width:50px;height:28px;background:#535353;"></div>
<div style="left:1689px;top:447px;font-size:12px;line-height:16px;color:#f4f4f4;white-space:pre;letter-spacing:-0.949px;font-weight:700;">Layers</div>
<div style="left:1730px;top:441px;width:1px;height:27px;background:#383838;"></div>
<div style="left:1739px;top:447px;font-size:12px;line-height:16px;color:#c0c0c0;white-space:pre;letter-spacing:-0.752px;font-weight:700;">Channels</div>
<div style="left:1795px;top:441px;width:1px;height:27px;background:#383838;"></div>
<div style="left:1805px;top:447px;font-size:12px;line-height:16px;color:#c0c0c0;white-space:pre;letter-spacing:-0.936px;font-weight:700;">Paths</div>
<div style="left:1841px;top:441px;width:1px;height:27px;background:#383838;"></div>
<div style="left:1901px;top:450.5px;width:10px;height:1px;background:#c8c8c8;"></div>
<div style="left:1901px;top:453px;width:10px;height:1px;background:#c8c8c8;"></div>
<div style="left:1901px;top:455.5px;width:10px;height:1px;background:#c8c8c8;"></div>
<div style="left:1901px;top:458px;width:10px;height:1px;background:#c8c8c8;"></div>
<div style="left:1683px;top:477px;width:91px;height:19px;background:#464646;border:1px solid #666;border-radius:3px;"></div>
<svg style="left:1691px;top:481px;" width="11" height="11" viewBox="0 0 11 11"><circle cx="6.5" cy="4.5" r="3.3" fill="none" stroke="#dcdcdc" stroke-width="1.3"/><path d="M4.2 7l-3.2 3.5" stroke="#dcdcdc" stroke-width="1.5"/></svg>
<div style="left:1705px;top:479px;font-size:11.5px;line-height:15px;color:#eee;white-space:pre;letter-spacing:-0.004px;">Kind</div>
<svg style="left:1761.5px;top:483.5px;" width="9" height="7" viewBox="0 0 9 7"><path d="M1 1.57l3.5 3.5 3.5-3.5" fill="none" stroke="#d0d0d0" stroke-width="1.2"/></svg>
<div style="left:1783px;top:480px;width:14px;height:12px;border:1.3px solid #dcdcdc;border-radius:1px;"></div>
<svg style="left:1785px;top:484px;" width="10" height="6" viewBox="0 0 10 6"><path d="M0 6l3-4.5 2 2.5 2-1.5 3 3.5z" fill="#dcdcdc"/></svg>
<div style="left:1808px;top:480.5px;width:12px;height:12px;background:linear-gradient(135deg,#dcdcdc 0 50%,transparent 50%);border:1.3px solid #dcdcdc;border-radius:50%;"></div>
<div style="left:1833.72px;top:477.5px;font-size:14px;line-height:18px;color:#dcdcdc;white-space:pre;font-weight:700;font-family:'Liberation Serif',serif;">T</div>
<div style="left:1857px;top:481px;width:11px;height:11px;border:1.3px solid #dcdcdc;"></div>
<div style="left:1855.5px;top:479.5px;width:4px;height:4px;background:#535353;border:1px solid #dcdcdc;"></div>
<div style="left:1855.5px;top:487.5px;width:4px;height:4px;background:#535353;border:1px solid #dcdcdc;"></div>
<div style="left:1863.5px;top:479.5px;width:4px;height:4px;background:#535353;border:1px solid #dcdcdc;"></div>
<div style="left:1863.5px;top:487.5px;width:4px;height:4px;background:#535353;border:1px solid #dcdcdc;"></div>
<svg style="left:1880px;top:479px;" width="13" height="15" viewBox="0 0 13 15"><path d="M4.6 1.6h4.4l3 3v7.4h-4" fill="none" stroke="#dcdcdc" stroke-width="1.2"/><path d="M9 1.6v3h3" fill="none" stroke="#dcdcdc" stroke-width="1"/><path d="M1 8h6.5v6h-6.5z" fill="#dcdcdc"/></svg>
<div style="left:1905px;top:479.5px;width:10px;height:18px;background:#454545;border:1px solid #6a6a6a;border-radius:5px;"></div>
<div style="left:1906px;top:478px;width:8px;height:8px;background:#e4e4e4;border-radius:50%;"></div>
<div style="left:1680px;top:499px;width:240px;height:1px;background:#444;"></div>
<div style="left:1683px;top:504px;width:134px;height:19px;background:#464646;border:1px solid #666;border-radius:3px;"></div>
<div style="left:1691px;top:506px;font-size:11.5px;line-height:15px;color:#eee;white-space:pre;letter-spacing:-0.177px;">Normal</div>
<svg style="left:1804.5px;top:510.5px;" width="9" height="7" viewBox="0 0 9 7"><path d="M1 1.57l3.5 3.5 3.5-3.5" fill="none" stroke="#d0d0d0" stroke-width="1.2"/></svg>
<div style="left:1821px;top:506px;font-size:11.5px;line-height:15px;color:#d8d8d8;white-space:pre;letter-spacing:-0.398px;">Opacity:</div>
<div style="left:1863px;top:504px;width:51px;height:19px;background:#464646;border:1px solid #666;border-radius:3px;"></div>
<div style="left:1899px;top:505px;width:1px;height:17px;background:#6a6a6a;"></div>
<div style="left:1867px;top:506px;font-size:11.5px;line-height:15px;color:#eee;white-space:pre;letter-spacing:-0.853px;">100%</div>
<svg style="left:1902px;top:510.5px;" width="9" height="7" viewBox="0 0 9 7"><path d="M1 1.57l3.5 3.5 3.5-3.5" fill="none" stroke="#d0d0d0" stroke-width="1.2"/></svg>
<div style="left:1680px;top:527px;width:240px;height:1px;background:#444;"></div>
<div style="left:1685px;top:533px;font-size:11.5px;line-height:15px;color:#d8d8d8;white-space:pre;letter-spacing:-0.497px;">Lock:</div>
<div style="left:1717px;top:535px;width:11px;height:11px;background:conic-gradient(#aaa 25%,#666 0 50%,#aaa 0 75%,#666 0);background-size:5.5px 5.5px;border:1px solid #888;"></div>
<svg style="left:1738px;top:534px;" width="13" height="13" viewBox="0 0 13 13"><path d="M12.5 .5c-3 1.5-6 4.5-7 6.5l1.5 1.5c2-1 5-4.5 5.5-8zM5 8l1.3 1.3c-.3 2-2.3 3-4.8 2.5 1.8-.8 1.7-3 3.5-3.8z" fill="#9a9a9a"/></svg>
<svg style="left:1759px;top:534px;" width="14" height="14" viewBox="0 0 14 14"><path d="M7 0l2.3 2.7h-1.7v3.7h3.7v-1.7l2.7 2.3-2.7 2.3v-1.7h-3.7v3.7h1.7l-2.3 2.7-2.3-2.7h1.7v-3.7h-3.7v1.7l-2.7-2.3 2.7-2.3v1.7h3.7v-3.7h-1.7z" fill="#dcdcdc"/></svg>
<svg style="left:1781px;top:534px;" width="15" height="14" viewBox="0 0 15 14"><path d="M3.5 0v10.5h11M0 3.5h11v10.5" fill="none" stroke="#dcdcdc" stroke-width="1.3"/><path d="M12 1l2 1-1 .5M1.5 12l-1 1.5" stroke="#dcdcdc" stroke-width="1" fill="none"/></svg>
<svg style="left:1805px;top:533px;" width="12" height="14" viewBox="0 0 12 14"><rect x="1" y="6" width="10" height="8" rx="1" fill="#dcdcdc"/><path d="M3.5 6v-2a2.5 2.5 0 0 1 5 0v2" fill="none" stroke="#dcdcdc" stroke-width="1.5"/><rect x="5.3" y="9" width="1.4" height="2.5" fill="#535353"/></svg>
<div style="left:1844px;top:533px;font-size:11.5px;line-height:15px;color:#d8d8d8;white-space:pre;letter-spacing:-0.377px;">Fill:</div>
<div style="left:1863px;top:531px;width:51px;height:19px;background:#464646;border:1px solid #666;border-radius:3px;"></div>
<div style="left:1899px;top:532px;width:1px;height:17px;background:#6a6a6a;"></div>
<div style="left:1867px;top:533px;font-size:11.5px;line-height:15px;color:#eee;white-space:pre;letter-spacing:-0.853px;">100%</div>
<svg style="left:1902px;top:537.5px;" width="9" height="7" viewBox="0 0 9 7"><path d="M1 1.57l3.5 3.5 3.5-3.5" fill="none" stroke="#d0d0d0" stroke-width="1.2"/></svg>
<div style="left:1680px;top:555px;width:240px;height:499px;background:#3a3a3a;"></div>
<div style="left:1680px;top:556px;width:30px;height:24px;background:#b63e3e;"></div>
<div style="left:1710px;top:556px;width:194px;height:24px;background:#454545;"></div>
<svg style="left:1688px;top:563.5px;" width="14" height="9" viewBox="0 0 14 9"><path d="M0 4.5q7-9 14 0q-7 9-14 0z" fill="#f2f2f2"/><circle cx="7" cy="4.5" r="2.8" fill="#b63e3e"/><circle cx="8" cy="3.5" r="1" fill="#f2f2f2"/></svg>
<svg style="left:1714px;top:562px;" width="7" height="12" viewBox="0 0 7 12"><path d="M1.5 1l3.5 5-3.5 5" fill="none" stroke="#dcdcdc" stroke-width="1.2"/></svg>
<div style="left:1731px;top:560.5px;font-size:11px;line-height:14px;color:#f0f0f0;white-space:pre;letter-spacing:-0.035px;font-weight:700;">Solutions - w,e,a/pressure</div>
<div style="left:1680px;top:581px;width:30px;height:24px;background:#b63e3e;"></div>
<div style="left:1710px;top:581px;width:194px;height:24px;background:#454545;"></div>
<svg style="left:1688px;top:588.5px;" width="14" height="9" viewBox="0 0 14 9"><path d="M0 4.5q7-9 14 0q-7 9-14 0z" fill="#f2f2f2"/><circle cx="7" cy="4.5" r="2.8" fill="#b63e3e"/><circle cx="8" cy="3.5" r="1" fill="#f2f2f2"/></svg>
<svg style="left:1714px;top:587px;" width="7" height="12" viewBox="0 0 7 12"><path d="M1.5 1l3.5 5-3.5 5" fill="none" stroke="#dcdcdc" stroke-width="1.2"/></svg>
<div style="left:1731px;top:585.5px;font-size:11px;line-height:14px;color:#f0f0f0;white-space:pre;letter-spacing:0.060px;font-weight:700;">Solutions - w,e,a/electricalm...</div>
<div style="left:1680px;top:606px;width:30px;height:24px;background:#b63e3e;"></div>
<div style="left:1710px;top:606px;width:194px;height:24px;background:#454545;"></div>
<svg style="left:1688px;top:613.5px;" width="14" height="9" viewBox="0 0 14 9"><path d="M0 4.5q7-9 14 0q-7 9-14 0z" fill="#f2f2f2"/><circle cx="7" cy="4.5" r="2.8" fill="#b63e3e"/><circle cx="8" cy="3.5" r="1" fill="#f2f2f2"/></svg>
<svg style="left:1714px;top:612px;" width="7" height="12" viewBox="0 0 7 12"><path d="M1.5 1l3.5 5-3.5 5" fill="none" stroke="#dcdcdc" stroke-width="1.2"/></svg>
<div style="left:1731px;top:610.5px;font-size:11px;line-height:14px;color:#f0f0f0;white-space:pre;letter-spacing:0.002px;font-weight:700;">Solutions - w,e,a/pumpingsta...</div>
<div style="left:1680px;top:631px;width:30px;height:24px;background:#b63e3e;"></div>
<div style="left:1710px;top:631px;width:194px;height:24px;background:#454545;"></div>
<svg style="left:1688px;top:638.5px;" width="14" height="9" viewBox="0 0 14 9"><path d="M0 4.5q7-9 14 0q-7 9-14 0z" fill="#f2f2f2"/><circle cx="7" cy="4.5" r="2.8" fill="#b63e3e"/><circle cx="8" cy="3.5" r="1" fill="#f2f2f2"/></svg>
<svg style="left:1714px;top:637px;" width="7" height="12" viewBox="0 0 7 12"><path d="M1.5 1l3.5 5-3.5 5" fill="none" stroke="#dcdcdc" stroke-width="1.2"/></svg>
<div style="left:1731px;top:635.5px;font-size:11px;line-height:14px;color:#f0f0f0;white-space:pre;letter-spacing:0.031px;font-weight:700;">Solutions - w,e,a/watermeter</div>
<div style="left:1680px;top:656px;width:30px;height:24px;background:#b63e3e;"></div>
<div style="left:1710px;top:656px;width:194px;height:24px;background:#454545;"></div>
<svg style="left:1688px;top:663.5px;" width="14" height="9" viewBox="0 0 14 9"><path d="M0 4.5q7-9 14 0q-7 9-14 0z" fill="#f2f2f2"/><circle cx="7" cy="4.5" r="2.8" fill="#b63e3e"/><circle cx="8" cy="3.5" r="1" fill="#f2f2f2"/></svg>
<svg style="left:1714px;top:662px;" width="7" height="12" viewBox="0 0 7 12"><path d="M1.5 1l3.5 5-3.5 5" fill="none" stroke="#dcdcdc" stroke-width="1.2"/></svg>
<div style="left:1731px;top:660.5px;font-size:11px;line-height:14px;color:#f0f0f0;white-space:pre;letter-spacing:0.000px;font-weight:700;">Solutions - w,e,a/flow equip...</div>
<div style="left:1680px;top:681px;width:30px;height:24px;background:#5a8838;"></div>
<div style="left:1710px;top:681px;width:194px;height:24px;background:#454545;"></div>
<svg style="left:1688px;top:688.5px;" width="14" height="9" viewBox="0 0 14 9"><path d="M0 4.5q7-9 14 0q-7 9-14 0z" fill="#f2f2f2"/><circle cx="7" cy="4.5" r="2.8" fill="#5a8838"/><circle cx="8" cy="3.5" r="1" fill="#f2f2f2"/></svg>
<svg style="left:1714px;top:687px;" width="7" height="12" viewBox="0 0 7 12"><path d="M1.5 1l3.5 5-3.5 5" fill="none" stroke="#dcdcdc" stroke-width="1.2"/></svg>
<div style="left:1731px;top:685.5px;font-size:11px;line-height:14px;color:#f0f0f0;white-space:pre;letter-spacing:-0.097px;font-weight:700;">Solutions - shipping and logi...</div>
<div style="left:1680px;top:706px;width:30px;height:24px;background:#5a8838;"></div>
<div style="left:1710px;top:706px;width:194px;height:24px;background:#454545;"></div>
<svg style="left:1688px;top:713.5px;" width="14" height="9" viewBox="0 0 14 9"><path d="M0 4.5q7-9 14 0q-7 9-14 0z" fill="#f2f2f2"/><circle cx="7" cy="4.5" r="2.8" fill="#5a8838"/><circle cx="8" cy="3.5" r="1" fill="#f2f2f2"/></svg>
<svg style="left:1714px;top:712px;" width="7" height="12" viewBox="0 0 7 12"><path d="M1.5 1l3.5 5-3.5 5" fill="none" stroke="#dcdcdc" stroke-width="1.2"/></svg>
<div style="left:1731px;top:710.5px;font-size:11px;line-height:14px;color:#f0f0f0;white-space:pre;letter-spacing:-0.115px;font-weight:700;">Solutions - vehicles</div>
<div style="left:1680px;top:731px;width:30px;height:24px;background:#5a8838;"></div>
<div style="left:1710px;top:731px;width:194px;height:24px;background:#454545;"></div>
<svg style="left:1688px;top:738.5px;" width="14" height="9" viewBox="0 0 14 9"><path d="M0 4.5q7-9 14 0q-7 9-14 0z" fill="#f2f2f2"/><circle cx="7" cy="4.5" r="2.8" fill="#5a8838"/><circle cx="8" cy="3.5" r="1" fill="#f2f2f2"/></svg>
<svg style="left:1714px;top:737px;" width="7" height="12" viewBox="0 0 7 12"><path d="M1.5 1l3.5 5-3.5 5" fill="none" stroke="#dcdcdc" stroke-width="1.2"/></svg>
<div style="left:1731px;top:735.5px;font-size:11px;line-height:14px;color:#f0f0f0;white-space:pre;letter-spacing:-0.149px;font-weight:700;">Solutions - cold chain</div>
<div style="left:1680px;top:756px;width:30px;height:24px;background:#5a8838;"></div>
<div style="left:1710px;top:756px;width:194px;height:24px;background:#454545;"></div>
<svg style="left:1688px;top:763.5px;" width="14" height="9" viewBox="0 0 14 9"><path d="M0 4.5q7-9 14 0q-7 9-14 0z" fill="#f2f2f2"/><circle cx="7" cy="4.5" r="2.8" fill="#5a8838"/><circle cx="8" cy="3.5" r="1" fill="#f2f2f2"/></svg>
<svg style="left:1714px;top:762px;" width="7" height="12" viewBox="0 0 7 12"><path d="M1.5 1l3.5 5-3.5 5" fill="none" stroke="#dcdcdc" stroke-width="1.2"/></svg>
<div style="left:1731px;top:760.5px;font-size:11px;line-height:14px;color:#f0f0f0;white-space:pre;letter-spacing:-0.102px;font-weight:700;">Solutions - fragile shipments</div>
<div style="left:1680px;top:781px;width:30px;height:24px;background:#4d6fa0;"></div>
<div style="left:1710px;top:781px;width:194px;height:24px;background:#454545;"></div>
<svg style="left:1688px;top:788.5px;" width="14" height="9" viewBox="0 0 14 9"><path d="M0 4.5q7-9 14 0q-7 9-14 0z" fill="#f2f2f2"/><circle cx="7" cy="4.5" r="2.8" fill="#4d6fa0"/><circle cx="8" cy="3.5" r="1" fill="#f2f2f2"/></svg>
<svg style="left:1714px;top:787px;" width="7" height="12" viewBox="0 0 7 12"><path d="M1.5 1l3.5 5-3.5 5" fill="none" stroke="#dcdcdc" stroke-width="1.2"/></svg>
<div style="left:1731px;top:785.5px;font-size:11px;line-height:14px;color:#f0f0f0;white-space:pre;letter-spacing:-0.115px;font-weight:700;">Solutions - Industrial copy</div>
<div style="left:1680px;top:806px;width:30px;height:24px;background:#4d6fa0;"></div>
<div style="left:1710px;top:806px;width:194px;height:24px;background:#454545;"></div>
<svg style="left:1688px;top:813.5px;" width="14" height="9" viewBox="0 0 14 9"><path d="M0 4.5q7-9 14 0q-7 9-14 0z" fill="#f2f2f2"/><circle cx="7" cy="4.5" r="2.8" fill="#4d6fa0"/><circle cx="8" cy="3.5" r="1" fill="#f2f2f2"/></svg>
<svg style="left:1714px;top:812px;" width="7" height="12" viewBox="0 0 7 12"><path d="M1.5 1l3.5 5-3.5 5" fill="none" stroke="#dcdcdc" stroke-width="1.2"/></svg>
<div style="left:1731px;top:810.5px;font-size:11px;line-height:14px;color:#f0f0f0;white-space:pre;letter-spacing:-0.004px;font-weight:700;">Solutions - industrial / electri...</div>
<div style="left:1680px;top:831px;width:30px;height:24px;background:#4d6fa0;"></div>
<div style="left:1710px;top:831px;width:194px;height:24px;background:#454545;"></div>
<svg style="left:1688px;top:838.5px;" width="14" height="9" viewBox="0 0 14 9"><path d="M0 4.5q7-9 14 0q-7 9-14 0z" fill="#f2f2f2"/><circle cx="7" cy="4.5" r="2.8" fill="#4d6fa0"/><circle cx="8" cy="3.5" r="1" fill="#f2f2f2"/></svg>
<svg style="left:1714px;top:837px;" width="7" height="12" viewBox="0 0 7 12"><path d="M1.5 1l3.5 5-3.5 5" fill="none" stroke="#dcdcdc" stroke-width="1.2"/></svg>
<div style="left:1731px;top:835.5px;font-size:11px;line-height:14px;color:#f0f0f0;white-space:pre;letter-spacing:-0.163px;font-weight:700;">Solutions - pressure copy</div>
<div style="left:1680px;top:856px;width:30px;height:24px;background:#4d6fa0;"></div>
<div style="left:1710px;top:856px;width:194px;height:24px;background:#454545;"></div>
<svg style="left:1688px;top:863.5px;" width="14" height="9" viewBox="0 0 14 9"><path d="M0 4.5q7-9 14 0q-7 9-14 0z" fill="#f2f2f2"/><circle cx="7" cy="4.5" r="2.8" fill="#4d6fa0"/><circle cx="8" cy="3.5" r="1" fill="#f2f2f2"/></svg>
<svg style="left:1714px;top:862px;" width="7" height="12" viewBox="0 0 7 12"><path d="M1.5 1l3.5 5-3.5 5" fill="none" stroke="#dcdcdc" stroke-width="1.2"/></svg>
<div style="left:1731px;top:860.5px;font-size:11px;line-height:14px;color:#f0f0f0;white-space:pre;letter-spacing:-0.082px;font-weight:700;">Solutions - flow equipment m...</div>
<div style="left:1680px;top:881px;width:30px;height:24px;background:#4d6fa0;"></div>
<div style="left:1710px;top:881px;width:194px;height:24px;background:#454545;"></div>
<svg style="left:1688px;top:888.5px;" width="14" height="9" viewBox="0 0 14 9"><path d="M0 4.5q7-9 14 0q-7 9-14 0z" fill="#f2f2f2"/><circle cx="7" cy="4.5" r="2.8" fill="#4d6fa0"/><circle cx="8" cy="3.5" r="1" fill="#f2f2f2"/></svg>
<svg style="left:1714px;top:887px;" width="7" height="12" viewBox="0 0 7 12"><path d="M1.5 1l3.5 5-3.5 5" fill="none" stroke="#dcdcdc" stroke-width="1.2"/></svg>
<div style="left:1731px;top:885.5px;font-size:11px;line-height:14px;color:#f0f0f0;white-space:pre;letter-spacing:-0.068px;font-weight:700;">Solutions - low power wireles...</div>
<div style="left:1680px;top:906px;width:30px;height:24px;background:#4d6fa0;"></div>
<div style="left:1710px;top:906px;width:194px;height:24px;background:#454545;"></div>
<svg style="left:1688px;top:913.5px;" width="14" height="9" viewBox="0 0 14 9"><path d="M0 4.5q7-9 14 0q-7 9-14 0z" fill="#f2f2f2"/><circle cx="7" cy="4.5" r="2.8" fill="#4d6fa0"/><circle cx="8" cy="3.5" r="1" fill="#f2f2f2"/></svg>
<svg style="left:1713px;top:914px;" width="9" height="7" viewBox="0 0 9 7"><path d="M1 1.5l3.5 4 3.5-4" fill="none" stroke="#dcdcdc" stroke-width="1.2"/></svg>
<div style="left:1731px;top:910.5px;font-size:11px;line-height:14px;color:#f0f0f0;white-space:pre;letter-spacing:-0.017px;font-weight:700;">Solutions - retrofit connectivity</div>
<div style="left:1680px;top:931px;width:30px;height:22px;background:#4d6fa0;"></div>
<div style="left:1710px;top:931px;width:194px;height:22px;background:#535353;"></div>
<svg style="left:1688px;top:937.5px;" width="14" height="9" viewBox="0 0 14 9"><path d="M0 4.5q7-9 14 0q-7 9-14 0z" fill="#f2f2f2"/><circle cx="7" cy="4.5" r="2.8" fill="#4d6fa0"/><circle cx="8" cy="3.5" r="1" fill="#f2f2f2"/></svg>
<svg style="left:1730px;top:936px;" width="7" height="12" viewBox="0 0 7 12"><path d="M1.5 1l3.5 5-3.5 5" fill="none" stroke="#dcdcdc" stroke-width="1.2"/></svg>
<svg style="left:1741px;top:935px;" width="17" height="13" viewBox="0 0 17 13"><path d="M0 13v-13h6l1.5 2h9.5v11z" fill="#dcdcdc"/><path d="M.5 4.3h16" stroke="#535353" stroke-width=".8"/></svg>
<div style="left:1767px;top:935.5px;font-size:11px;line-height:14px;color:#f0f0f0;white-space:pre;letter-spacing:-0.275px;">Header copy 11</div>
<div style="left:1680px;top:954px;width:30px;height:22px;background:#4d6fa0;"></div>
<div style="left:1710px;top:954px;width:194px;height:22px;background:#535353;"></div>
<svg style="left:1688px;top:960.5px;" width="14" height="9" viewBox="0 0 14 9"><path d="M0 4.5q7-9 14 0q-7 9-14 0z" fill="#f2f2f2"/><circle cx="7" cy="4.5" r="2.8" fill="#4d6fa0"/><circle cx="8" cy="3.5" r="1" fill="#f2f2f2"/></svg>
<svg style="left:1729px;top:962px;" width="9" height="7" viewBox="0 0 9 7"><path d="M1 1.5l3.5 4 3.5-4" fill="none" stroke="#dcdcdc" stroke-width="1.2"/></svg>
<svg style="left:1741px;top:957px;" width="17" height="13" viewBox="0 0 17 13"><path d="M.6 12.4v-11.8h5l1.5 2h9.3v9.8z" fill="none" stroke="#dcdcdc" stroke-width="1.2"/><path d="M.6 12.4v-6.5h15.8v6.5z" fill="#dcdcdc"/></svg>
<div style="left:1767px;top:958.5px;font-size:11px;line-height:14px;color:#f0f0f0;white-space:pre;letter-spacing:-0.034px;">hero copy</div>
<div style="left:1680px;top:977px;width:30px;height:37px;background:#4d6fa0;"></div>
<div style="left:1710px;top:977px;width:194px;height:37px;background:#535353;"></div>
<div style="left:1689px;top:989px;width:12px;height:12px;border:1px solid #3f5f8c;"></div>
<div style="left:1893px;top:977px;width:11px;height:37px;background:repeating-linear-gradient(90deg,#484848 0 1px,#535353 1px 2px);"></div>
<div style="left:1755.28px;top:980.5px;font-size:22px;line-height:29px;color:#dcdcdc;white-space:pre;font-family:'Liberation Serif',serif;">T</div>
<div style="left:1786px;top:989px;font-size:11px;line-height:14px;color:#f0f0f0;white-space:pre;letter-spacing:-0.124px;">Cradle to grave t...</div>
<div style="left:1877px;top:985.5px;font-size:13px;line-height:17px;color:#e0e0e0;white-space:pre;letter-spacing:0.444px;font-style:italic;">fx</div>
<svg style="left:1894px;top:992px;" width="8" height="6" viewBox="0 0 8 6"><path d="M1 1.35l3 3 3-3" fill="none" stroke="#d0d0d0" stroke-width="1.2"/></svg>
<div style="left:1680px;top:1015px;width:30px;height:38px;background:#4d6fa0;"></div>
<div style="left:1710px;top:1015px;width:194px;height:38px;background:#6a6a6a;"></div>
<svg style="left:1688px;top:1030px;" width="14" height="9" viewBox="0 0 14 9"><path d="M0 4.5q7-9 14 0q-7 9-14 0z" fill="#f2f2f2"/><circle cx="7" cy="4.5" r="2.8" fill="#4d6fa0"/><circle cx="8" cy="3.5" r="1" fill="#f2f2f2"/></svg>
<svg style="left:1753px;top:1029px;" width="8" height="9" viewBox="0 0 8 9"><path d="M5 0v5h-3.5M3.5 3l-2.5 2 2.5 2" fill="none" stroke="#dcdcdc" stroke-width="1.2"/></svg>
<div style="left:1760px;top:1016px;width:23px;height:36px;border:1px solid #fff;"></div>
<div style="left:1762px;top:1018px;width:19px;height:32px;background:#fff;border:1px solid #222;"></div>
<div style="left:1763px;top:1021px;width:17px;height:7px;background:#6b9bd0;"></div>
<div style="left:1763px;top:1028px;width:17px;height:9px;background:conic-gradient(#ccc 25%,#fff 0 50%,#ccc 0 75%,#fff 0);background-size:4px 4px;"></div>
<div style="left:1772px;top:1039px;width:9px;height:11px;background:#fff;border:1px solid #222;"></div>
<div style="left:1774px;top:1042px;width:5px;height:6px;border:1px solid #444;"></div>
<div style="left:1789px;top:1027.5px;font-size:11px;line-height:14px;color:#f0f0f0;white-space:pre;letter-spacing:-0.334px;">arrows</div>
<div style="left:1904px;top:555px;width:16px;height:499px;background:#4d4d4d;"></div>
<div style="left:1907px;top:572px;width:10px;height:98px;background:#6a6a6a;border-radius:5px;"></div>
<div style="left:1680px;top:1054px;width:240px;height:26px;background:#535353;"></div>
<div style="left:1680px;top:1053px;width:240px;height:1px;background:#3a3a3a;"></div>
<svg style="left:1716px;top:1063px;" width="14" height="8" viewBox="0 0 14 8"><path d="M6 1h-2.5a3 3 0 0 0 0 6h2.5M8 1h2.5a3 3 0 0 1 0 6h-2.5M4 4h6" fill="none" stroke="#8a8a8a" stroke-width="1.3"/></svg>
<div style="left:1744px;top:1057px;font-size:14px;line-height:18px;color:#dcdcdc;white-space:pre;letter-spacing:0.055px;font-style:italic;">fx</div>
<svg style="left:1753px;top:1073px;" width="5" height="3" viewBox="0 0 5 3"><path d="M0 0h5l-2.5 3z" fill="#dcdcdc"/></svg>
<div style="left:1769.5px;top:1060px;width:13px;height:11px;background:#dcdcdc;border-radius:1px;"></div>
<div style="left:1773.5px;top:1063px;width:5px;height:5px;background:#535353;border-radius:50%;"></div>
<div style="left:1798px;top:1060.5px;width:12px;height:12px;background:linear-gradient(135deg,transparent 0 50%,#dcdcdc 50%);border:1.3px solid #dcdcdc;border-radius:50%;"></div>
<svg style="left:1810px;top:1073px;" width="5" height="3" viewBox="0 0 5 3"><path d="M0 0h5l-2.5 3z" fill="#dcdcdc"/></svg>
<svg style="left:1824px;top:1060px;" width="14" height="11" viewBox="0 0 14 11"><path d="M0 11v-11h5l1.2 1.8h7.8v9.2z" fill="#dcdcdc"/></svg>
<svg style="left:1851px;top:1061px;" width="12" height="12" viewBox="0 0 12 12"><path d="M.7 .7h10.6v6.3l-4.3 4.3h-6.3z" fill="none" stroke="#dcdcdc" stroke-width="1.3"/><path d="M7 11.3v-4.3h4.3" fill="none" stroke="#dcdcdc" stroke-width="1.3"/></svg>
<svg style="left:1878px;top:1060px;" width="11" height="13" viewBox="0 0 11 13"><path d="M0 2.5h11M3.5 2.5v-1.8h4v1.8M1.2 2.5l.6 10h7.4l.6-10M4 5v5.5M5.5 5v5.5M7 5v5.5" fill="none" stroke="#dcdcdc" stroke-width="1.2"/></svg>
<svg width="0" height="0" style="left:0;top:0"><defs><filter id="b1" x="0" y="0" width="100%" height="100%" color-interpolation-filters="sRGB"><feGaussianBlur in="SourceGraphic" stdDeviation="0.45 1.3" result="bl"/><feTurbulence type="fractalNoise" baseFrequency="0.55 0.17" numOctaves="2" seed="7" result="n"/><feColorMatrix in="n" type="matrix" values=".3 .3 0 0 .2  .3 .3 0 0 .2  .3 .3 0 0 .2  0 0 0 0 1" result="g"/><feBlend in="bl" in2="g" mode="overlay"/></filter><filter id="b2" x="0" y="0" width="100%" height="100%" color-interpolation-filters="sRGB"><feGaussianBlur in="SourceGraphic" stdDeviation="1.2 2.5" result="bl"/><feTurbulence type="fractalNoise" baseFrequency="0.16 0.3" numOctaves="2" seed="11" result="n"/><feColorMatrix in="n" type="matrix" values=".3 .3 0 0 .2  .3 .3 0 0 .2  .3 .3 0 0 .2  0 0 0 0 1" result="g"/><feBlend in="bl" in2="g" mode="overlay"/></filter><filter id="b3" x="0" y="0" width="100%" height="100%"><feGaussianBlur stdDeviation="0.45 1.3"/></filter></defs></svg>
<div style="left:239.5px;top:266.8px;font-size:11.5px;line-height:15px;color:#dedede;white-space:pre;letter-spacing:0.124px;">solutions</div>
<div style="left:238px;top:286.6px;width:121.4px;height:82.4px;background:#fff;"></div>
<div style="left:238px;top:286.6px;width:121.4px;height:5.4px;background:linear-gradient(90deg,#1d6cb2 0%,#2a85c6 18%,#1c70b6 34%,#3590cd 52%,#2079bd 68%,#3a93d0 84%,#1d6cb2 100%);"></div>
<div style="left:239.5px;top:287.8px;width:4px;height:1.6px;background:rgba(255,255,255,.85);"></div>
<div style="left:238px;top:292px;width:121.4px;height:5.8px;background:#3b3b3b;"></div>
<div style="left:278.06px;top:294.5px;width:20.64px;height:0.9px;background:#aaa;"></div>
<div style="left:301.13px;top:294.5px;width:14.57px;height:0.9px;background:#aaa;"></div>
<div style="left:318.12px;top:294.5px;width:14.57px;height:0.9px;background:#aaa;"></div>
<div style="left:318px;top:289.2px;width:7px;height:0.9px;background:rgba(255,255,255,.6);"></div>
<div style="left:328px;top:289.2px;width:7px;height:0.9px;background:rgba(255,255,255,.6);"></div>
<div style="left:339px;top:289.2px;width:7px;height:0.9px;background:rgba(255,255,255,.6);"></div>
<div style="left:350px;top:289.2px;width:7px;height:0.9px;background:rgba(255,255,255,.6);"></div>
<div style="left:291.5px;top:302.6px;width:15px;height:1.6px;background:#444;"></div>
<svg style="left:251px;top:309.5px;overflow:hidden" width="30.5" height="16" viewBox="0 0 100 100" preserveAspectRatio="none"><g><rect width="100" height="100" fill="#fff"/><polygon points="2,92 4,50 14,28 30,24 44,40 44,92" fill="#5cb84a"/><polygon points="44,92 44,40 52,34 60,40 60,92" fill="#a8dcf0"/><rect x="47" y="44" width="10" height="20" fill="#d4eefa"/><polygon points="60,92 60,36 72,24 92,22 99,44 99,92" fill="#4aa83a"/><rect x="8" y="40" width="12" height="22" fill="#c8302a"/><rect x="6" y="62" width="8" height="14" fill="#8a2a5a"/><rect x="20" y="34" width="16" height="40" fill="#c4cf44"/><rect x="24" y="40" width="8" height="28" fill="#8a9a30"/><polygon points="20,26 24,2 28,26" fill="#5a6a70"/><rect x="34" y="10" width="2" height="18" fill="#9ad0f0"/><rect x="62" y="46" width="14" height="26" fill="#c0d838"/><rect x="66" y="50" width="4" height="18" fill="#3a7a2a"/><rect x="76" y="28" width="14" height="30" fill="#7a9ab8"/><rect x="78" y="34" width="10" height="14" fill="#a8c4dc"/><rect x="56" y="16" width="3" height="18" fill="#a85a30"/><rect x="88" y="20" width="8" height="12" fill="#2f8a2f"/><rect x="62" y="76" width="37" height="14" fill="#2f7a2f"/><rect x="74" y="56" width="22" height="18" fill="#b8d040"/><rect x="2" y="90" width="36" height="5" fill="#e89a40"/><rect x="38" y="90" width="30" height="5" fill="#6ab8e0"/><rect x="68" y="90" width="31" height="5" fill="#2f7a2f"/></g></svg>
<svg style="left:286px;top:311px;overflow:hidden" width="26.5" height="14.5" viewBox="0 0 100 100" preserveAspectRatio="none"><g><rect width="100" height="100" fill="#fff"/><polygon points="14,50 22,22 30,34 38,12 46,28 54,10 62,26 70,16 80,40 86,50" fill="#5a7ad0"/><polygon points="16,50 26,30 34,40 42,24 52,36 60,22 70,36 78,30 84,50" fill="#3a5ac0"/><polygon points="4,66 12,48 28,36 50,32 72,36 86,48 92,66" fill="#2fa82f"/><rect x="14" y="52" width="22" height="12" fill="#2f4fc0"/><rect x="38" y="54" width="6" height="8" fill="#e8eef4"/><rect x="58" y="46" width="18" height="14" fill="#d83a2c"/><rect x="62" y="50" width="4" height="5" fill="#f0e0e0"/><rect x="69" y="50" width="4" height="5" fill="#f0e0e0"/><rect x="8" y="4" width="3" height="10" fill="#e89a30"/><rect x="2" y="66" width="80" height="5" fill="#f0c020"/><rect x="2" y="71" width="80" height="5" fill="#e87a20"/><rect x="2" y="76" width="76" height="4" fill="#c8302a"/><polygon points="70,52 84,50 96,74 70,74" fill="#1f6a4a"/><polygon points="80,60 96,74 98,82 84,82" fill="#1f4fa8"/><rect x="40" y="80" width="59" height="16" fill="#1f7fd8"/><rect x="44" y="84" width="24" height="4" fill="#6ab8f0"/></g></svg>
<svg style="left:320px;top:309.5px;overflow:hidden" width="25.5" height="16" viewBox="0 0 100 100" preserveAspectRatio="none"><g><rect width="100" height="100" fill="#fff"/><rect x="28" y="2" width="14" height="12" fill="#e0602c"/><rect x="52" y="2" width="14" height="12" fill="#e0602c"/><rect x="30" y="18" width="34" height="40" fill="#8aa0c0"/><rect x="34" y="24" width="26" height="10" fill="#b8cce0"/><rect x="34" y="38" width="26" height="8" fill="#6a84a8"/><rect x="62" y="30" width="18" height="30" fill="#f09020"/><rect x="64" y="36" width="14" height="5" fill="#f8c060"/><rect x="64" y="46" width="14" height="5" fill="#f8c060"/><rect x="70" y="10" width="6" height="22" fill="#3a4a6a"/><rect x="82" y="28" width="4" height="34" fill="#4a3a3a"/><rect x="94" y="34" width="3" height="8" fill="#e87a20"/><rect x="14" y="22" width="1.6" height="46" fill="#9ad0f0"/><rect x="14" y="34" width="12" height="4" fill="#f0d040"/><rect x="20" y="38" width="6" height="20" fill="#c8d8e8"/><ellipse cx="6" cy="50" rx="5" ry="12" fill="#8ad040"/><rect x="2" y="58" width="10" height="14" fill="#6ab838"/><rect x="4" y="60" width="92" height="12" fill="#5a7aa8"/><rect x="30" y="52" width="30" height="14" fill="#d86a30"/><rect x="40" y="56" width="8" height="8" fill="#c8302a"/><rect x="2" y="72" width="96" height="8" fill="#b8bcc0"/><rect x="2" y="80" width="34" height="5" fill="#e89a40"/><rect x="38" y="80" width="56" height="14" fill="#c8ccd0"/><rect x="38" y="88" width="56" height="8" fill="#e87a30"/><rect x="86" y="56" width="8" height="24" fill="#c8d8e8"/></g></svg>
<div style="left:256px;top:327.4px;width:20px;height:1px;background:#666;"></div>
<div style="left:288px;top:327.4px;width:22px;height:1px;background:#666;"></div>
<div style="left:320px;top:327.4px;width:23px;height:1px;background:#666;"></div>
<div style="left:261px;top:329.6px;width:10px;height:0.9px;background:#777;"></div>
<div style="left:271px;top:335.6px;width:56px;height:1px;background:#999;"></div>
<div style="left:238px;top:343px;width:121.4px;height:26px;background:#065aa8;"></div>
<div style="left:269px;top:346.6px;width:8px;height:1.2px;background:rgba(255,255,255,.85);"></div>
<div style="left:283px;top:346.6px;width:8px;height:1.2px;background:rgba(255,255,255,.85);"></div>
<div style="left:301px;top:346.6px;width:10px;height:1.2px;background:rgba(255,255,255,.85);"></div>
<div style="left:318px;top:346.6px;width:5px;height:1.2px;background:rgba(255,255,255,.85);"></div>
<div style="left:269px;top:350px;width:6px;height:0.8px;background:rgba(255,255,255,.5);"></div>
<div style="left:269px;top:352.3px;width:3.6px;height:0.8px;background:rgba(255,255,255,.5);"></div>
<div style="left:269px;top:354.6px;width:4.8px;height:0.8px;background:rgba(255,255,255,.5);"></div>
<div style="left:269px;top:356.9px;width:6px;height:0.8px;background:rgba(255,255,255,.5);"></div>
<div style="left:283px;top:350px;width:11.2px;height:0.8px;background:rgba(255,255,255,.5);"></div>
<div style="left:283px;top:352.3px;width:14px;height:0.8px;background:rgba(255,255,255,.5);"></div>
<div style="left:283px;top:354.6px;width:8.4px;height:0.8px;background:rgba(255,255,255,.5);"></div>
<div style="left:301px;top:350px;width:6.4px;height:0.8px;background:rgba(255,255,255,.5);"></div>
<div style="left:301px;top:352.3px;width:8px;height:0.8px;background:rgba(255,255,255,.5);"></div>
<div style="left:301px;top:354.6px;width:4.8px;height:0.8px;background:rgba(255,255,255,.5);"></div>
<div style="left:318px;top:350px;width:4.2px;height:0.8px;background:rgba(255,255,255,.5);"></div>
<div style="left:318px;top:352.3px;width:5.6px;height:0.8px;background:rgba(255,255,255,.5);"></div>
<div style="left:318px;top:354.6px;width:7px;height:0.8px;background:rgba(255,255,255,.5);"></div>
<div style="left:318px;top:356.9px;width:4.2px;height:0.8px;background:rgba(255,255,255,.5);"></div>
<div style="left:318px;top:359.2px;width:5.6px;height:0.8px;background:rgba(255,255,255,.5);"></div>
<div style="left:318px;top:361.5px;width:7px;height:0.8px;background:rgba(255,255,255,.5);"></div>
<div style="left:269px;top:366px;width:5px;height:1.2px;background:rgba(255,255,255,.9);"></div>
<div style="left:278px;top:366.2px;width:15px;height:0.8px;background:rgba(255,255,255,.5);"></div>
<div style="left:296px;top:366.2px;width:10px;height:0.8px;background:rgba(255,255,255,.5);"></div>
<div style="left:309px;top:366.2px;width:10px;height:0.8px;background:rgba(255,255,255,.5);"></div>
<div style="left:323px;top:366.2px;width:6px;height:0.8px;background:rgba(255,255,255,.5);"></div>
<div style="left:379.1px;top:267.1px;font-size:11.5px;line-height:15px;color:#dedede;white-space:pre;letter-spacing:0.066px;">Solutions - Water, E...</div>
<div style="left:378px;top:287.6px;width:121.6px;height:158.6px;background:#fff;"></div>
<div style="left:378px;top:287.6px;width:121.6px;height:5.2px;background:linear-gradient(90deg,#1d6cb2 0%,#2a85c6 18%,#1c70b6 34%,#3590cd 52%,#2079bd 68%,#3a93d0 84%,#1d6cb2 100%);"></div>
<div style="left:379.5px;top:288.8px;width:4px;height:1.6px;background:rgba(255,255,255,.85);"></div>
<div style="left:378px;top:292.8px;width:121.6px;height:5px;background:#3b3b3b;"></div>
<div style="left:418.13px;top:294.9px;width:20.67px;height:0.9px;background:#aaa;"></div>
<div style="left:441.23px;top:294.9px;width:14.59px;height:0.9px;background:#aaa;"></div>
<div style="left:458.26px;top:294.9px;width:14.59px;height:0.9px;background:#aaa;"></div>
<div style="left:380px;top:303.2px;width:45px;height:1.6px;background:#555;"></div>
<div style="left:381px;top:306.8px;width:7px;height:0.9px;background:#5aa0dc;"></div>
<div style="left:390px;top:306.8px;width:20px;height:0.9px;background:#999;"></div>
<svg style="left:417.5px;top:311px;overflow:hidden" width="42" height="18" viewBox="0 0 100 100" preserveAspectRatio="none"><g><rect width="100" height="100" fill="#fff"/><polygon points="2,92 4,50 14,28 30,24 44,40 44,92" fill="#5cb84a"/><polygon points="44,92 44,40 52,34 60,40 60,92" fill="#a8dcf0"/><rect x="47" y="44" width="10" height="20" fill="#d4eefa"/><polygon points="60,92 60,36 72,24 92,22 99,44 99,92" fill="#4aa83a"/><rect x="8" y="40" width="12" height="22" fill="#c8302a"/><rect x="6" y="62" width="8" height="14" fill="#8a2a5a"/><rect x="20" y="34" width="16" height="40" fill="#c4cf44"/><rect x="24" y="40" width="8" height="28" fill="#8a9a30"/><polygon points="20,26 24,2 28,26" fill="#5a6a70"/><rect x="34" y="10" width="2" height="18" fill="#9ad0f0"/><rect x="62" y="46" width="14" height="26" fill="#c0d838"/><rect x="66" y="50" width="4" height="18" fill="#3a7a2a"/><rect x="76" y="28" width="14" height="30" fill="#7a9ab8"/><rect x="78" y="34" width="10" height="14" fill="#a8c4dc"/><rect x="56" y="16" width="3" height="18" fill="#a85a30"/><rect x="88" y="20" width="8" height="12" fill="#2f8a2f"/><rect x="62" y="76" width="37" height="14" fill="#2f7a2f"/><rect x="74" y="56" width="22" height="18" fill="#b8d040"/><rect x="2" y="90" width="36" height="5" fill="#e89a40"/><rect x="38" y="90" width="30" height="5" fill="#6ab8e0"/><rect x="68" y="90" width="31" height="5" fill="#2f7a2f"/></g></svg>
<div style="left:416px;top:331.8px;width:46px;height:0.9px;background:#999;"></div>
<div style="left:408px;top:334px;width:60px;height:1px;background:#666;"></div>
<svg style="left:403px;top:339px;overflow:hidden" width="22" height="11.8" viewBox="0 0 100 100" preserveAspectRatio="none"><g filter="url(#b2)"><rect width="100" height="100" fill="#8a8a8a"/><rect x="0" y="0" width="20" height="100" fill="#5a5a5a"/><polygon points="0,60 50,20 60,36 10,80" fill="#d4d4d4"/><rect x="50" y="0" width="20" height="100" fill="#3a3a3a"/><rect x="72" y="20" width="28" height="80" fill="#a8a098"/><rect x="0" y="84" width="100" height="16" fill="#3a3a3a"/></g></svg>
<svg style="left:427px;top:339px;overflow:hidden" width="23" height="11.8" viewBox="0 0 100 100" preserveAspectRatio="none"><g filter="url(#b2)"><rect width="100" height="100" fill="#3a4252"/><rect x="0" y="0" width="100" height="24" fill="#4a5a7a"/><rect x="8" y="30" width="34" height="40" fill="#2f5090"/><rect x="46" y="36" width="40" height="44" fill="#8a8a88"/><rect x="0" y="80" width="100" height="20" fill="#55504a"/></g></svg>
<svg style="left:452px;top:339px;overflow:hidden" width="22" height="11.8" viewBox="0 0 100 100" preserveAspectRatio="none"><g filter="url(#b2)"><rect width="100" height="100" fill="#50683a"/><rect x="0" y="0" width="100" height="28" fill="#a0a8a0"/><rect x="0" y="28" width="100" height="30" fill="#6a8a4a"/><rect x="0" y="70" width="100" height="30" fill="#3c4428"/><rect x="66" y="40" width="22" height="50" fill="#2c3020"/></g></svg>
<svg style="left:403px;top:353px;overflow:hidden" width="22" height="12" viewBox="0 0 100 100" preserveAspectRatio="none"><g filter="url(#b2)"><rect width="100" height="100" fill="#a8aca8"/><rect x="0" y="0" width="100" height="40" fill="#c8cacc"/><polygon points="0,100 40,40 60,40 100,100" fill="#6a8a3a"/><polygon points="30,100 46,40 54,40 70,100" fill="#a89a40"/><rect x="0" y="40" width="20" height="30" fill="#8a8c88"/></g></svg>
<svg style="left:427px;top:353px;overflow:hidden" width="23" height="12" viewBox="0 0 100 100" preserveAspectRatio="none"><g filter="url(#b2)"><rect width="100" height="100" fill="#4a90dc"/><rect x="0" y="0" width="100" height="50" fill="#3f88d8"/><rect x="0" y="50" width="100" height="20" fill="#7ab0e4"/><rect x="0" y="76" width="100" height="24" fill="#6a7a48"/><rect x="20" y="36" width="60" height="6" fill="#c8ccd0"/><rect x="30" y="36" width="4" height="44" fill="#b8bcc0"/><rect x="66" y="36" width="4" height="44" fill="#b8bcc0"/></g></svg>
<svg style="left:452px;top:353px;overflow:hidden" width="22" height="12" viewBox="0 0 100 100" preserveAspectRatio="none"><g filter="url(#b2)"><rect width="100" height="100" fill="#50683a"/><rect x="0" y="0" width="100" height="28" fill="#a0a8a0"/><rect x="0" y="28" width="100" height="30" fill="#6a8a4a"/><rect x="0" y="70" width="100" height="30" fill="#3c4428"/><rect x="66" y="40" width="22" height="50" fill="#2c3020"/></g></svg>
<svg style="left:403px;top:368px;overflow:hidden" width="22" height="11.8" viewBox="0 0 100 100" preserveAspectRatio="none"><g filter="url(#b2)"><rect width="100" height="100" fill="#3a4252"/><rect x="0" y="0" width="100" height="24" fill="#4a5a7a"/><rect x="8" y="30" width="34" height="40" fill="#2f5090"/><rect x="46" y="36" width="40" height="44" fill="#8a8a88"/><rect x="0" y="80" width="100" height="20" fill="#55504a"/></g></svg>
<div style="left:429.4px;top:381.8px;width:18.4px;height:5.4px;background:#0e5ba6;border-radius:3px;box-shadow:0 0 0 .6px #123a66;"></div>
<div style="left:433.08px;top:384.1px;width:11.04px;height:0.9px;background:rgba(255,255,255,.7);"></div>
<div style="left:403px;top:391.2px;width:28px;height:1px;background:#333;"></div>
<div style="left:403px;top:393.4px;width:16px;height:1px;background:#333;"></div>
<div style="left:440px;top:391.2px;width:32px;height:1px;background:#333;"></div>
<div style="left:440px;top:393.4px;width:13px;height:1px;background:#333;"></div>
<div style="left:404px;top:396.8px;width:25px;height:0.9px;background:#7ab0e0;"></div>
<div style="left:440px;top:396.8px;width:16px;height:0.9px;background:#7ab0e0;"></div>
<div style="left:403px;top:399.5px;width:27.98px;height:1px;background:#888;"></div>
<div style="left:403px;top:401.45px;width:28.2px;height:1px;background:#888;"></div>
<div style="left:403px;top:403.4px;width:25.79px;height:1px;background:#888;"></div>
<div style="left:403px;top:405.35px;width:30.36px;height:1px;background:#888;"></div>
<div style="left:403px;top:407.3px;width:30.6px;height:1px;background:#888;"></div>
<div style="left:403px;top:409.25px;width:19.63px;height:1px;background:#888;"></div>
<div style="left:440px;top:399.5px;width:23.34px;height:1px;background:#888;"></div>
<div style="left:440px;top:401.45px;width:24.12px;height:1px;background:#888;"></div>
<div style="left:440px;top:403.4px;width:25.95px;height:1px;background:#888;"></div>
<div style="left:440px;top:405.35px;width:23.21px;height:1px;background:#888;"></div>
<div style="left:440px;top:407.3px;width:24.38px;height:1px;background:#888;"></div>
<div style="left:440px;top:409.25px;width:22.44px;height:1px;background:#888;"></div>
<div style="left:440px;top:411.2px;width:25.01px;height:1px;background:#888;"></div>
<div style="left:440px;top:413.15px;width:26.07px;height:1px;background:#888;"></div>
<div style="left:440px;top:415.1px;width:17.33px;height:1px;background:#888;"></div>
<div style="left:440px;top:417.4px;width:17px;height:0.9px;background:#7ab0e0;"></div>
<div style="left:378px;top:420.8px;width:121.6px;height:25.4px;background:#065aa8;"></div>
<div style="left:409px;top:424px;width:7.2px;height:1.1px;background:rgba(255,255,255,.85);"></div>
<div style="left:409px;top:427px;width:6.2px;height:0.8px;background:rgba(255,255,255,.5);"></div>
<div style="left:409px;top:429.2px;width:4.4px;height:0.8px;background:rgba(255,255,255,.5);"></div>
<div style="left:409px;top:431.4px;width:8px;height:0.8px;background:rgba(255,255,255,.5);"></div>
<div style="left:409px;top:433.6px;width:6.2px;height:0.8px;background:rgba(255,255,255,.5);"></div>
<div style="left:423px;top:424px;width:12.6px;height:1.1px;background:rgba(255,255,255,.85);"></div>
<div style="left:423px;top:427px;width:7.7px;height:0.8px;background:rgba(255,255,255,.5);"></div>
<div style="left:423px;top:429.2px;width:14px;height:0.8px;background:rgba(255,255,255,.5);"></div>
<div style="left:423px;top:431.4px;width:10.85px;height:0.8px;background:rgba(255,255,255,.5);"></div>
<div style="left:442px;top:424px;width:8.1px;height:1.1px;background:rgba(255,255,255,.85);"></div>
<div style="left:442px;top:427px;width:6.98px;height:0.8px;background:rgba(255,255,255,.5);"></div>
<div style="left:442px;top:429.2px;width:4.95px;height:0.8px;background:rgba(255,255,255,.5);"></div>
<div style="left:442px;top:431.4px;width:9px;height:0.8px;background:rgba(255,255,255,.5);"></div>
<div style="left:458px;top:424px;width:7.2px;height:1.1px;background:rgba(255,255,255,.85);"></div>
<div style="left:458px;top:427px;width:8px;height:0.8px;background:rgba(255,255,255,.5);"></div>
<div style="left:458px;top:429.2px;width:6.2px;height:0.8px;background:rgba(255,255,255,.5);"></div>
<div style="left:458px;top:431.4px;width:4.4px;height:0.8px;background:rgba(255,255,255,.5);"></div>
<div style="left:458px;top:433.6px;width:8px;height:0.8px;background:rgba(255,255,255,.5);"></div>
<div style="left:458px;top:435.8px;width:6.2px;height:0.8px;background:rgba(255,255,255,.5);"></div>
<div style="left:458px;top:438px;width:4.4px;height:0.8px;background:rgba(255,255,255,.5);"></div>
<div style="left:409px;top:443px;width:5px;height:1.3px;background:rgba(255,255,255,.9);"></div>
<div style="left:417px;top:443.3px;width:16px;height:0.8px;background:rgba(255,255,255,.5);"></div>
<div style="left:436px;top:443.3px;width:8px;height:0.8px;background:rgba(255,255,255,.5);"></div>
<div style="left:448px;top:443.3px;width:10px;height:0.8px;background:rgba(255,255,255,.5);"></div>
<div style="left:461px;top:443.3px;width:7px;height:0.8px;background:rgba(255,255,255,.5);"></div>
<div style="left:513.6px;top:268.1px;font-size:11.5px;line-height:15px;color:#dedede;white-space:pre;letter-spacing:0.154px;">Solutions - w,e,a/flo...</div>
<div style="left:512.6px;top:287.6px;width:120.8px;height:136.6px;background:#fff;"></div>
<div style="left:512.6px;top:287.6px;width:120.8px;height:5.4px;background:linear-gradient(90deg,#1d6cb2 0%,#2a85c6 18%,#1c70b6 34%,#3590cd 52%,#2079bd 68%,#3a93d0 84%,#1d6cb2 100%);"></div>
<div style="left:514.1px;top:288.8px;width:4px;height:1.6px;background:rgba(255,255,255,.85);"></div>
<div style="left:512.6px;top:293px;width:120.8px;height:5px;background:#3b3b3b;"></div>
<div style="left:552.46px;top:295.1px;width:20.54px;height:0.9px;background:#aaa;"></div>
<div style="left:575.42px;top:295.1px;width:14.5px;height:0.9px;background:#aaa;"></div>
<div style="left:592.33px;top:295.1px;width:14.5px;height:0.9px;background:#aaa;"></div>
<div style="left:515.6px;top:301.5px;width:28px;height:2px;background:#555;"></div>
<div style="left:515.6px;top:305.3px;width:25.3px;height:0.9px;background:#5aa0dc;"></div>
<div style="left:543.2px;top:305.3px;width:18.4px;height:0.9px;background:#999;"></div>
<div style="left:594.4px;top:302.5px;width:34.5px;height:5.5px;background:#77c474;border-radius:3px;box-shadow:0 0 0 .5px #5a8a58;"></div>
<div style="left:598.4px;top:304.85px;width:26.5px;height:0.9px;background:rgba(255,255,255,.7);"></div>
<svg style="left:512.6px;top:310px;overflow:hidden" width="120.8" height="36.8" viewBox="0 0 100 100" preserveAspectRatio="none"><g filter="url(#b1)"><rect width="100" height="100" fill="#6a6660"/><rect x="0" y="0" width="36" height="100" fill="#8e6448"/><rect x="0" y="0" width="6" height="100" fill="#a06c4a"/><rect x="4" y="14" width="16" height="72" fill="#a6b9c9"/><rect x="6" y="18" width="12" height="22" fill="#c9d8e4"/><rect x="8" y="30" width="9" height="8" fill="#5a8ad0"/><rect x="6" y="62" width="12" height="18" fill="#bac8d2"/><rect x="0" y="86" width="36" height="14" fill="#7a5a40"/><rect x="19.5" y="0" width="3.2" height="100" fill="#d6b81e"/><rect x="23" y="36" width="9.5" height="46" fill="#9db0c0"/><rect x="24.5" y="40" width="6" height="14" fill="#c0d0dc"/><rect x="27" y="0" width="2.6" height="36" fill="#d8bc22"/><rect x="33" y="0" width="2.8" height="40" fill="#d6b81e"/><rect x="30" y="0" width="3" height="30" fill="#8a7a50"/><rect x="36" y="0" width="34" height="100" fill="#55544f"/><rect x="38" y="8" width="30" height="14" fill="#b4b4b2"/><rect x="42" y="22" width="6" height="26" fill="#9a9a98"/><rect x="52" y="20" width="5" height="20" fill="#a8a8a6"/><rect x="60" y="10" width="8" height="30" fill="#8a8a86"/><rect x="36" y="40" width="12" height="40" fill="#3a3a34"/><rect x="48" y="36" width="16" height="26" fill="#4a463c"/><rect x="44" y="60" width="24" height="34" fill="#989ca0"/><rect x="50" y="66" width="12" height="20" fill="#b0b4b8"/><rect x="36" y="78" width="12" height="22" fill="#4a4a46"/><rect x="66" y="40" width="6" height="50" fill="#77797c"/><rect x="70" y="0" width="30" height="100" fill="#8a6658"/><rect x="70" y="14" width="12" height="30" fill="#6a90c2"/><rect x="94" y="0" width="6" height="24" fill="#7a9cc8"/><polygon points="70,0 86,0 100,30 100,58 88,30 76,12 70,12" fill="#dcd0bc"/><rect x="72" y="46" width="26" height="5" fill="#c8c0b4"/><rect x="74" y="52" width="3" height="40" fill="#d0ccc4"/><rect x="82" y="52" width="3" height="40" fill="#c8c4bc"/><rect x="90" y="52" width="3" height="36" fill="#d0ccc4"/><rect x="76" y="56" width="5" height="30" fill="#a84038"/><rect x="92" y="60" width="4" height="20" fill="#b03a34"/><rect x="0" y="92" width="100" height="8" fill="#3a342c" opacity="0.6"/></g></svg>
<div style="left:587.5px;top:328.4px;width:38.66px;height:1px;background:rgba(255,255,255,.75);"></div>
<div style="left:587.5px;top:330.4px;width:28.99px;height:1px;background:rgba(255,255,255,.6);"></div>
<svg style="left:537px;top:352px;overflow:hidden" width="23" height="12" viewBox="0 0 100 100" preserveAspectRatio="none"><g filter="url(#b2)"><rect width="100" height="100" fill="#ececee"/><rect x="0" y="50" width="40" height="20" fill="#c8c8ca"/><polygon points="55,100 70,0 82,0 66,100" fill="#c04a3c"/><rect x="84" y="0" width="8" height="100" fill="#d8d8da"/><polygon points="40,100 50,60 60,100" fill="#b84034"/></g></svg>
<div style="left:539.3px;top:367.2px;width:18.4px;height:0.9px;background:#777;"></div>
<div style="left:542.75px;top:369.2px;width:11.5px;height:0.9px;background:#999;"></div>
<svg style="left:562px;top:352px;overflow:hidden" width="22.2" height="12" viewBox="0 0 100 100" preserveAspectRatio="none"><g filter="url(#b2)"><rect width="100" height="100" fill="#50683a"/><rect x="0" y="0" width="100" height="28" fill="#a0a8a0"/><rect x="0" y="28" width="100" height="30" fill="#6a8a4a"/><rect x="0" y="70" width="100" height="30" fill="#3c4428"/><rect x="66" y="40" width="22" height="50" fill="#2c3020"/></g></svg>
<div style="left:564.22px;top:367.2px;width:17.76px;height:0.9px;background:#777;"></div>
<div style="left:567.55px;top:369.2px;width:11.1px;height:0.9px;background:#999;"></div>
<svg style="left:586px;top:352px;overflow:hidden" width="23" height="12" viewBox="0 0 100 100" preserveAspectRatio="none"><g filter="url(#b2)"><rect width="100" height="100" fill="#6a9cc4"/><rect x="0" y="0" width="30" height="100" fill="#4a7aa4"/><polygon points="10,0 40,0 30,100 0,100" fill="#dfe8ee"/><rect x="38" y="20" width="44" height="56" fill="#b8d4e8"/><rect x="44" y="28" width="32" height="38" fill="#4a90d0"/><ellipse cx="70" cy="86" rx="14" ry="22" fill="#e8e0d4"/><rect x="86" y="0" width="14" height="100" fill="#5a88b0"/></g></svg>
<div style="left:588.3px;top:367.2px;width:18.4px;height:0.9px;background:#777;"></div>
<div style="left:591.75px;top:369.2px;width:11.5px;height:0.9px;background:#999;"></div>
<div style="left:537px;top:373.5px;width:63.59px;height:1px;background:#9e9e9e;"></div>
<div style="left:537px;top:375.45px;width:58.25px;height:1px;background:#9e9e9e;"></div>
<div style="left:537px;top:377.4px;width:42.35px;height:1px;background:#9e9e9e;"></div>
<div style="left:537px;top:380.5px;width:20.93px;height:1px;background:#9e9e9e;"></div>
<div style="left:537px;top:382.45px;width:9.95px;height:1px;background:#9e9e9e;"></div>
<div style="left:537px;top:383.5px;width:53.2px;height:1px;background:#9e9e9e;"></div>
<div style="left:537px;top:385.45px;width:54.16px;height:1px;background:#9e9e9e;"></div>
<div style="left:537px;top:387.4px;width:32.87px;height:1px;background:#9e9e9e;"></div>
<div style="left:537px;top:390px;width:64.29px;height:1px;background:#9e9e9e;"></div>
<div style="left:537px;top:391.95px;width:41.24px;height:1px;background:#9e9e9e;"></div>
<div style="left:537px;top:395.5px;width:58.98px;height:1px;background:#9e9e9e;"></div>
<div style="left:537px;top:397.45px;width:64.8px;height:1px;background:#9e9e9e;"></div>
<div style="left:537px;top:399.4px;width:65.73px;height:1px;background:#9e9e9e;"></div>
<div style="left:537px;top:401.35px;width:62.58px;height:1px;background:#9e9e9e;"></div>
<div style="left:537px;top:403.3px;width:59.29px;height:1px;background:#9e9e9e;"></div>
<div style="left:537px;top:405.25px;width:37.1px;height:1px;background:#9e9e9e;"></div>
<div style="left:537px;top:408.5px;width:7.76px;height:1px;background:#9e9e9e;"></div>
<div style="left:555px;top:413px;width:36.2px;height:5.4px;background:#77c474;border-radius:3px;box-shadow:0 0 0 .6px #5a8a58;"></div>
<div style="left:562.24px;top:415.3px;width:21.72px;height:0.9px;background:rgba(255,255,255,.7);"></div>
<div style="left:512.6px;top:421px;width:120.8px;height:3.2px;background:#065aa8;"></div>
<div style="left:518.6px;top:421.8px;width:4px;height:1.6px;background:rgba(255,255,255,.9);"></div>
<div style="left:525.6px;top:422.3px;width:14px;height:0.8px;background:rgba(255,255,255,.45);"></div>
<div style="left:542.6px;top:422.3px;width:8px;height:0.8px;background:rgba(255,255,255,.45);"></div>
<div style="left:616.4px;top:422.3px;width:6px;height:0.8px;background:rgba(255,255,255,.45);"></div>
<div style="left:624.4px;top:422.3px;width:5px;height:0.8px;background:rgba(255,255,255,.45);"></div>
<div style="left:651.9px;top:268.1px;font-size:11.5px;line-height:15px;color:#dedede;white-space:pre;letter-spacing:0.127px;">Solutions - w,e,a/wat...</div>
<div style="left:650.9px;top:288px;width:120.4px;height:133.3px;background:#fff;"></div>
<div style="left:650.9px;top:288px;width:120.4px;height:5px;background:linear-gradient(90deg,#1d6cb2 0%,#2a85c6 18%,#1c70b6 34%,#3590cd 52%,#2079bd 68%,#3a93d0 84%,#1d6cb2 100%);"></div>
<div style="left:652.4px;top:289.2px;width:4px;height:1.6px;background:rgba(255,255,255,.85);"></div>
<div style="left:650.9px;top:293px;width:120.4px;height:5.5px;background:#3b3b3b;"></div>
<div style="left:690.63px;top:295.35px;width:20.47px;height:0.9px;background:#aaa;"></div>
<div style="left:713.51px;top:295.35px;width:14.45px;height:0.9px;background:#aaa;"></div>
<div style="left:730.36px;top:295.35px;width:14.45px;height:0.9px;background:#aaa;"></div>
<div style="left:653.9px;top:302px;width:28px;height:2px;background:#555;"></div>
<div style="left:653.9px;top:305.8px;width:25.3px;height:0.9px;background:#5aa0dc;"></div>
<div style="left:681.5px;top:305.8px;width:18.4px;height:0.9px;background:#999;"></div>
<div style="left:732.3px;top:303px;width:34.5px;height:5.5px;background:#77c474;border-radius:3px;box-shadow:0 0 0 .5px #5a8a58;"></div>
<div style="left:736.3px;top:305.35px;width:26.5px;height:0.9px;background:rgba(255,255,255,.7);"></div>
<svg style="left:650.9px;top:310px;overflow:hidden" width="120.4" height="37" viewBox="0 0 100 100" preserveAspectRatio="none"><g filter="url(#b1)"><rect width="100" height="100" fill="#5c5830"/><rect x="0" y="0" width="100" height="42" fill="#5f5a30"/><rect x="8" y="4" width="20" height="14" fill="#7c8630"/><rect x="60" y="6" width="16" height="16" fill="#86902e"/><rect x="84" y="0" width="16" height="30" fill="#6e6838"/><rect x="30" y="0" width="14" height="16" fill="#4a4626"/><rect x="0" y="34" width="32" height="66" fill="#1b1d21"/><rect x="0" y="34" width="32" height="10" fill="#2e3036"/><rect x="83" y="40" width="17" height="60" fill="#1c1e22"/><rect x="30" y="44" width="54" height="56" fill="#9a9ea4"/><rect x="34" y="48" width="20" height="40" fill="#c4c8cc"/><rect x="56" y="60" width="24" height="40" fill="#a8acb2"/><ellipse cx="34" cy="40" rx="7" ry="28" fill="#c4c8cc"/><ellipse cx="36" cy="44" rx="4" ry="18" fill="#7a7e84"/><polygon points="46,6 58,2 61,40 48,46" fill="#eceae4"/><polygon points="46,36 60,32 61,44 48,50" fill="#bcbab4"/><rect x="22" y="50" width="10" height="40" fill="#c8ccd0"/><rect x="24" y="54" width="6" height="20" fill="#e0e2e4"/><rect x="77" y="20" width="9" height="80" fill="#b4b8bc"/><rect x="82" y="22" width="4" height="78" fill="#55585c"/><path d="M40 60L66 100" stroke="#3a8a9a" stroke-width="0.8" vector-effect="non-scaling-stroke" fill="none"/><path d="M55 62L30 98" stroke="#4a8aa8" stroke-width="0.7" vector-effect="non-scaling-stroke" fill="none"/><ellipse cx="32" cy="70" rx="2" ry="6" fill="#2a6ad0"/></g></svg>
<div style="left:725.55px;top:328.5px;width:38.53px;height:1px;background:rgba(255,255,255,.75);"></div>
<div style="left:725.55px;top:330.5px;width:28.9px;height:1px;background:rgba(255,255,255,.6);"></div>
<svg style="left:675px;top:351.8px;overflow:hidden" width="23" height="12.2" viewBox="0 0 100 100" preserveAspectRatio="none"><g filter="url(#b2)"><rect width="100" height="100" fill="#d4ccbe"/><rect x="0" y="30" width="100" height="16" fill="#8a8a88"/><rect x="12" y="24" width="12" height="50" fill="#2f5fa8"/><rect x="50" y="20" width="10" height="50" fill="#2a2c30"/><rect x="64" y="26" width="14" height="34" fill="#2f5fa8"/><rect x="0" y="70" width="100" height="30" fill="#b8ae9c"/></g></svg>
<div style="left:677.3px;top:367.2px;width:18.4px;height:0.9px;background:#777;"></div>
<div style="left:680.75px;top:369.2px;width:11.5px;height:0.9px;background:#999;"></div>
<svg style="left:700px;top:351.8px;overflow:hidden" width="22" height="12.2" viewBox="0 0 100 100" preserveAspectRatio="none"><g filter="url(#b2)"><rect width="100" height="100" fill="#6a8c42"/><rect x="0" y="0" width="100" height="16" fill="#b8c4b4"/><polygon points="60,16 100,16 100,100 70,100" fill="#a8a090"/><polygon points="70,100 60,16 66,16 90,100" fill="#d4d0c8"/><rect x="0" y="16" width="60" height="20" fill="#7a9a4a"/><rect x="0" y="70" width="60" height="30" fill="#7a6a4a"/></g></svg>
<div style="left:702.2px;top:367.2px;width:17.6px;height:0.9px;background:#777;"></div>
<div style="left:705.5px;top:369.2px;width:11px;height:0.9px;background:#999;"></div>
<svg style="left:724px;top:351.8px;overflow:hidden" width="23" height="12.2" viewBox="0 0 100 100" preserveAspectRatio="none"><g filter="url(#b2)"><rect width="100" height="100" fill="#c8501c"/><rect x="0" y="0" width="30" height="100" fill="#e8a848"/><ellipse cx="20" cy="40" rx="14" ry="40" fill="#f4d070"/><rect x="40" y="20" width="40" height="50" fill="#6a2418"/><rect x="48" y="36" width="30" height="16" fill="#2a1a18"/><rect x="80" y="0" width="20" height="100" fill="#d87028"/><rect x="30" y="70" width="50" height="30" fill="#a83c1c"/></g></svg>
<div style="left:726.3px;top:367.2px;width:18.4px;height:0.9px;background:#777;"></div>
<div style="left:729.75px;top:369.2px;width:11.5px;height:0.9px;background:#999;"></div>
<div style="left:675px;top:375px;width:69.37px;height:1px;background:#9e9e9e;"></div>
<div style="left:675px;top:376.95px;width:64.19px;height:1px;background:#9e9e9e;"></div>
<div style="left:675px;top:378.9px;width:61.71px;height:1px;background:#9e9e9e;"></div>
<div style="left:675px;top:380.85px;width:63.84px;height:1px;background:#9e9e9e;"></div>
<div style="left:675px;top:382.8px;width:39.15px;height:1px;background:#9e9e9e;"></div>
<div style="left:675px;top:387.5px;width:65.14px;height:1px;background:#9e9e9e;"></div>
<div style="left:675px;top:389.45px;width:63.84px;height:1px;background:#9e9e9e;"></div>
<div style="left:675px;top:391.4px;width:40.57px;height:1px;background:#9e9e9e;"></div>
<div style="left:675px;top:395.5px;width:60.27px;height:1px;background:#9e9e9e;"></div>
<div style="left:675px;top:397.45px;width:68.47px;height:1px;background:#9e9e9e;"></div>
<div style="left:675px;top:399.4px;width:67.19px;height:1px;background:#9e9e9e;"></div>
<div style="left:675px;top:401.35px;width:32.49px;height:1px;background:#9e9e9e;"></div>
<div style="left:686.8px;top:408px;width:48px;height:5.2px;background:#77c474;border-radius:3px;box-shadow:0 0 0 .6px #5a8a58;"></div>
<div style="left:696.4px;top:410.2px;width:28.8px;height:0.9px;background:rgba(255,255,255,.7);"></div>
<div style="left:650.9px;top:417.9px;width:120.4px;height:3.4px;background:#065aa8;"></div>
<div style="left:656.9px;top:418.8px;width:4px;height:1.6px;background:rgba(255,255,255,.9);"></div>
<div style="left:663.9px;top:419.3px;width:14px;height:0.8px;background:rgba(255,255,255,.45);"></div>
<div style="left:680.9px;top:419.3px;width:8px;height:0.8px;background:rgba(255,255,255,.45);"></div>
<div style="left:754.3px;top:419.3px;width:6px;height:0.8px;background:rgba(255,255,255,.45);"></div>
<div style="left:762.3px;top:419.3px;width:5px;height:0.8px;background:rgba(255,255,255,.45);"></div>
<div style="left:784.2px;top:269.9px;font-size:11.5px;line-height:15px;color:#dedede;white-space:pre;letter-spacing:0.124px;">Solutions - w,e,a/pu...</div>
<div style="left:783.2px;top:290px;width:120.4px;height:132.8px;background:#fff;"></div>
<div style="left:783.2px;top:290px;width:120.4px;height:4.6px;background:linear-gradient(90deg,#1d6cb2 0%,#2a85c6 18%,#1c70b6 34%,#3590cd 52%,#2079bd 68%,#3a93d0 84%,#1d6cb2 100%);"></div>
<div style="left:784.7px;top:291.2px;width:4px;height:1.6px;background:rgba(255,255,255,.85);"></div>
<div style="left:783.2px;top:294.6px;width:120.4px;height:5px;background:#3b3b3b;"></div>
<div style="left:822.93px;top:296.7px;width:20.47px;height:0.9px;background:#aaa;"></div>
<div style="left:845.81px;top:296.7px;width:14.45px;height:0.9px;background:#aaa;"></div>
<div style="left:862.66px;top:296.7px;width:14.45px;height:0.9px;background:#aaa;"></div>
<div style="left:786.2px;top:303.1px;width:28px;height:2px;background:#555;"></div>
<div style="left:786.2px;top:306.9px;width:25.3px;height:0.9px;background:#5aa0dc;"></div>
<div style="left:813.8px;top:306.9px;width:18.4px;height:0.9px;background:#999;"></div>
<div style="left:864.6px;top:304.1px;width:34.5px;height:5.5px;background:#77c474;border-radius:3px;box-shadow:0 0 0 .5px #5a8a58;"></div>
<div style="left:868.6px;top:306.45px;width:26.5px;height:0.9px;background:rgba(255,255,255,.7);"></div>
<svg style="left:783.2px;top:311.2px;overflow:hidden" width="120.4" height="36.6" viewBox="0 0 100 100" preserveAspectRatio="none"><g filter="url(#b1)"><rect width="100" height="100" fill="#55542c"/><rect x="0" y="0" width="100" height="34" fill="#3c3524"/><rect x="0" y="0" width="100" height="10" fill="#4a4030"/><rect x="0" y="34" width="100" height="40" fill="#6c7a36"/><rect x="10" y="40" width="30" height="8" fill="#7c8a3c"/><rect x="0" y="52" width="36" height="10" fill="#4e5528"/><rect x="44" y="70" width="30" height="10" fill="#7a8a3a"/><rect x="0" y="74" width="100" height="26" fill="#4c4c28"/><rect x="14" y="80" width="30" height="12" fill="#6a7434"/><rect x="78" y="28" width="22" height="44" fill="#7d6d4a"/><rect x="84" y="10" width="3" height="50" fill="#4a3a28"/><rect x="12" y="10" width="2" height="36" fill="#2e281c"/><rect x="26" y="8" width="2" height="32" fill="#2e281c"/><rect x="34" y="10" width="2" height="30" fill="#2e281c"/><ellipse cx="66" cy="52" rx="6.5" ry="40" fill="#25272b"/><ellipse cx="66" cy="44" rx="3.5" ry="20" fill="#4a4e54"/><rect x="40" y="48" width="24" height="20" fill="#64686e"/><rect x="38" y="58" width="16" height="8" fill="#8a8e92"/><rect x="53" y="60" width="8" height="34" fill="#2e3034"/><rect x="44.5" y="8" width="2.5" height="42" fill="#55595e"/><rect x="64.8" y="0" width="1.6" height="18" fill="#2a2c30"/><rect x="70" y="60" width="6" height="24" fill="#3a3e44"/></g></svg>
<div style="left:857.85px;top:329.5px;width:38.53px;height:1px;background:rgba(255,255,255,.75);"></div>
<div style="left:857.85px;top:331.5px;width:28.9px;height:1px;background:rgba(255,255,255,.6);"></div>
<svg style="left:807.8px;top:354px;overflow:hidden" width="22.2" height="10.8" viewBox="0 0 100 100" preserveAspectRatio="none"><g filter="url(#b2)"><rect width="100" height="100" fill="#3a4252"/><rect x="0" y="0" width="100" height="24" fill="#4a5a7a"/><rect x="8" y="30" width="34" height="40" fill="#2f5090"/><rect x="46" y="36" width="40" height="44" fill="#8a8a88"/><rect x="0" y="80" width="100" height="20" fill="#55504a"/></g></svg>
<div style="left:810.02px;top:368px;width:17.76px;height:0.9px;background:#777;"></div>
<div style="left:813.35px;top:370px;width:11.1px;height:0.9px;background:#999;"></div>
<svg style="left:832px;top:354px;overflow:hidden" width="22.8" height="10.8" viewBox="0 0 100 100" preserveAspectRatio="none"><g filter="url(#b2)"><rect width="100" height="100" fill="#c89050"/><rect x="0" y="0" width="24" height="100" fill="#c0401c"/><rect x="26" y="20" width="20" height="60" fill="#e0c080"/><rect x="40" y="30" width="12" height="40" fill="#3f6aa0"/><rect x="56" y="10" width="24" height="50" fill="#d8b070"/><rect x="82" y="0" width="18" height="100" fill="#a04a2a"/><rect x="0" y="78" width="100" height="22" fill="#6a4a30"/></g></svg>
<div style="left:834.28px;top:368px;width:18.24px;height:0.9px;background:#777;"></div>
<div style="left:837.7px;top:370px;width:11.4px;height:0.9px;background:#999;"></div>
<svg style="left:857px;top:354px;overflow:hidden" width="21.8" height="10.8" viewBox="0 0 100 100" preserveAspectRatio="none"><g filter="url(#b2)"><rect width="100" height="100" fill="#6a9cc4"/><rect x="0" y="0" width="30" height="100" fill="#4a7aa4"/><polygon points="10,0 40,0 30,100 0,100" fill="#dfe8ee"/><rect x="38" y="20" width="44" height="56" fill="#b8d4e8"/><rect x="44" y="28" width="32" height="38" fill="#4a90d0"/><ellipse cx="70" cy="86" rx="14" ry="22" fill="#e8e0d4"/><rect x="86" y="0" width="14" height="100" fill="#5a88b0"/></g></svg>
<div style="left:859.18px;top:368px;width:17.44px;height:0.9px;background:#777;"></div>
<div style="left:862.45px;top:370px;width:10.9px;height:0.9px;background:#999;"></div>
<div style="left:808px;top:377px;width:68.02px;height:1px;background:#9e9e9e;"></div>
<div style="left:808px;top:378.95px;width:58.9px;height:1px;background:#9e9e9e;"></div>
<div style="left:808px;top:380.9px;width:63.77px;height:1px;background:#9e9e9e;"></div>
<div style="left:808px;top:382.85px;width:59.71px;height:1px;background:#9e9e9e;"></div>
<div style="left:808px;top:384.8px;width:27.7px;height:1px;background:#9e9e9e;"></div>
<div style="left:808px;top:389.5px;width:67.12px;height:1px;background:#9e9e9e;"></div>
<div style="left:808px;top:391.45px;width:65.94px;height:1px;background:#9e9e9e;"></div>
<div style="left:808px;top:393.4px;width:59.45px;height:1px;background:#9e9e9e;"></div>
<div style="left:808px;top:395.35px;width:43.08px;height:1px;background:#9e9e9e;"></div>
<div style="left:808px;top:399px;width:29.54px;height:1px;background:#9e9e9e;"></div>
<div style="left:808px;top:402px;width:30.9px;height:1px;background:#9e9e9e;"></div>
<div style="left:819.6px;top:407.6px;width:48.2px;height:5.4px;background:#77c474;border-radius:3px;box-shadow:0 0 0 .6px #5a8a58;"></div>
<div style="left:829.24px;top:409.9px;width:28.92px;height:0.9px;background:rgba(255,255,255,.7);"></div>
<div style="left:783.2px;top:419px;width:120.4px;height:3.8px;background:#065aa8;"></div>
<div style="left:789.2px;top:420.1px;width:4px;height:1.6px;background:rgba(255,255,255,.9);"></div>
<div style="left:796.2px;top:420.6px;width:14px;height:0.8px;background:rgba(255,255,255,.45);"></div>
<div style="left:813.2px;top:420.6px;width:8px;height:0.8px;background:rgba(255,255,255,.45);"></div>
<div style="left:886.6px;top:420.6px;width:6px;height:0.8px;background:rgba(255,255,255,.45);"></div>
<div style="left:894.6px;top:420.6px;width:5px;height:0.8px;background:rgba(255,255,255,.45);"></div>
<div style="left:918.8px;top:270.1px;font-size:11.5px;line-height:15px;color:#dedede;white-space:pre;letter-spacing:0.071px;">Solutions - w,e,a/ele...</div>
<div style="left:917.8px;top:289.2px;width:120.6px;height:141.4px;background:#fff;"></div>
<div style="left:917.8px;top:289.2px;width:120.6px;height:5.2px;background:linear-gradient(90deg,#1d6cb2 0%,#2a85c6 18%,#1c70b6 34%,#3590cd 52%,#2079bd 68%,#3a93d0 84%,#1d6cb2 100%);"></div>
<div style="left:919.3px;top:290.4px;width:4px;height:1.6px;background:rgba(255,255,255,.85);"></div>
<div style="left:917.8px;top:294.4px;width:120.6px;height:5px;background:#3b3b3b;"></div>
<div style="left:957.6px;top:296.5px;width:20.5px;height:0.9px;background:#aaa;"></div>
<div style="left:980.51px;top:296.5px;width:14.47px;height:0.9px;background:#aaa;"></div>
<div style="left:997.4px;top:296.5px;width:14.47px;height:0.9px;background:#aaa;"></div>
<div style="left:920.8px;top:302.9px;width:28px;height:2px;background:#555;"></div>
<div style="left:920.8px;top:306.7px;width:25.3px;height:0.9px;background:#5aa0dc;"></div>
<div style="left:948.4px;top:306.7px;width:18.4px;height:0.9px;background:#999;"></div>
<div style="left:999.4px;top:303.9px;width:34.5px;height:5.5px;background:#77c474;border-radius:3px;box-shadow:0 0 0 .5px #5a8a58;"></div>
<div style="left:1003.4px;top:306.25px;width:26.5px;height:0.9px;background:rgba(255,255,255,.7);"></div>
<svg style="left:917.8px;top:311.8px;overflow:hidden" width="120.6" height="36.6" viewBox="0 0 100 100" preserveAspectRatio="none"><g filter="url(#b3)"><rect width="100" height="100" fill="#5e96c0"/><defs><linearGradient id="hg1" x2="0" y2="1"><stop offset="0" stop-color="#84ceee"/><stop offset="0.28" stop-color="#6eb4de"/><stop offset="0.5" stop-color="#5a92c0"/><stop offset="0.7" stop-color="#5e7f9c"/><stop offset="0.86" stop-color="#71848e"/><stop offset="0.885" stop-color="#3a5a22"/><stop offset="1" stop-color="#22381a"/></linearGradient></defs><rect x="0" y="0" width="100" height="100" fill="url(#hg1)"/></g></svg>
<div style="left:992.57px;top:330.1px;width:38.59px;height:1px;background:rgba(255,255,255,.75);"></div>
<div style="left:992.57px;top:332.1px;width:28.94px;height:1px;background:rgba(255,255,255,.6);"></div>
<svg style="left:942px;top:354px;overflow:hidden" width="23" height="11.8" viewBox="0 0 100 100" preserveAspectRatio="none"><g filter="url(#b2)"><rect width="100" height="100" fill="#c8c4b8"/><rect x="0" y="0" width="100" height="36" fill="#86acd6"/><ellipse cx="50" cy="44" rx="14" ry="26" fill="#f6e0a0"/><ellipse cx="52" cy="40" rx="5" ry="12" fill="#e86a30"/><rect x="0" y="62" width="100" height="20" fill="#b89c58"/><rect x="0" y="82" width="100" height="18" fill="#d8bc40"/><rect x="0" y="50" width="30" height="16" fill="#a8a8a0"/></g></svg>
<div style="left:944.3px;top:369px;width:18.4px;height:0.9px;background:#777;"></div>
<div style="left:947.75px;top:371px;width:11.5px;height:0.9px;background:#999;"></div>
<svg style="left:967px;top:354px;overflow:hidden" width="22" height="11.8" viewBox="0 0 100 100" preserveAspectRatio="none"><g filter="url(#b2)"><rect width="100" height="100" fill="#2a2418"/><rect x="0" y="0" width="100" height="30" fill="#c8a670"/><rect x="0" y="30" width="100" height="14" fill="#9a7848"/><polygon points="0,44 30,36 60,48 100,40 100,100 0,100" fill="#1c1a12"/></g></svg>
<div style="left:969.2px;top:369px;width:17.6px;height:0.9px;background:#777;"></div>
<div style="left:972.5px;top:371px;width:11px;height:0.9px;background:#999;"></div>
<svg style="left:991px;top:354px;overflow:hidden" width="22.8" height="11.8" viewBox="0 0 100 100" preserveAspectRatio="none"><g filter="url(#b2)"><rect width="100" height="100" fill="#6a9cc4"/><rect x="0" y="0" width="30" height="100" fill="#4a7aa4"/><polygon points="10,0 40,0 30,100 0,100" fill="#dfe8ee"/><rect x="38" y="20" width="44" height="56" fill="#b8d4e8"/><rect x="44" y="28" width="32" height="38" fill="#4a90d0"/><ellipse cx="70" cy="86" rx="14" ry="22" fill="#e8e0d4"/><rect x="86" y="0" width="14" height="100" fill="#5a88b0"/></g></svg>
<div style="left:993.28px;top:369px;width:18.24px;height:0.9px;background:#777;"></div>
<div style="left:996.7px;top:371px;width:11.4px;height:0.9px;background:#999;"></div>
<div style="left:942px;top:375.5px;width:58.8px;height:1px;background:#9e9e9e;"></div>
<div style="left:942px;top:377.45px;width:63.12px;height:1px;background:#9e9e9e;"></div>
<div style="left:942px;top:379.4px;width:67.72px;height:1px;background:#9e9e9e;"></div>
<div style="left:942px;top:381.35px;width:61.64px;height:1px;background:#9e9e9e;"></div>
<div style="left:942px;top:383.3px;width:32.81px;height:1px;background:#9e9e9e;"></div>
<div style="left:942px;top:386.5px;width:63.44px;height:1px;background:#9e9e9e;"></div>
<div style="left:942px;top:388.45px;width:70.46px;height:1px;background:#9e9e9e;"></div>
<div style="left:942px;top:390.4px;width:58.56px;height:1px;background:#9e9e9e;"></div>
<div style="left:942px;top:392.35px;width:69.17px;height:1px;background:#9e9e9e;"></div>
<div style="left:942px;top:394.3px;width:28.39px;height:1px;background:#9e9e9e;"></div>
<div style="left:942px;top:397px;width:60.34px;height:1px;background:#9e9e9e;"></div>
<div style="left:942px;top:398.95px;width:67.05px;height:1px;background:#9e9e9e;"></div>
<div style="left:942px;top:400.9px;width:63.04px;height:1px;background:#9e9e9e;"></div>
<div style="left:942px;top:402.85px;width:63.67px;height:1px;background:#9e9e9e;"></div>
<div style="left:942px;top:404.8px;width:45.98px;height:1px;background:#9e9e9e;"></div>
<div style="left:942px;top:408px;width:22.15px;height:1px;background:#9e9e9e;"></div>
<div style="left:942px;top:411px;width:44.92px;height:1px;background:#9e9e9e;"></div>
<div style="left:954px;top:416.4px;width:48px;height:5.2px;background:#77c474;border-radius:3px;box-shadow:0 0 0 .6px #5a8a58;"></div>
<div style="left:963.6px;top:418.6px;width:28.8px;height:0.9px;background:rgba(255,255,255,.7);"></div>
<div style="left:917.8px;top:427px;width:120.6px;height:3.6px;background:#065aa8;"></div>
<div style="left:923.8px;top:428px;width:4px;height:1.6px;background:rgba(255,255,255,.9);"></div>
<div style="left:930.8px;top:428.5px;width:14px;height:0.8px;background:rgba(255,255,255,.45);"></div>
<div style="left:947.8px;top:428.5px;width:8px;height:0.8px;background:rgba(255,255,255,.45);"></div>
<div style="left:1021.4px;top:428.5px;width:6px;height:0.8px;background:rgba(255,255,255,.45);"></div>
<div style="left:1029.4px;top:428.5px;width:5px;height:0.8px;background:rgba(255,255,255,.45);"></div>
<svg style="left:917.8px;top:311.8px;" width="120.6" height="36.6" viewBox="0 0 120.6 36.6"><path d="M93.47 1.1L88.64 32.94M93.47 1.1L98.29 32.94M92.26 1.1L91.05 32.94M94.67 1.1L95.88 32.94M80.8 2.56L106.73 2.56M83.21 4.39L104.32 4.39M80.8 2.56L93.47 0.73L106.73 2.56M74.77 16.1L112.16 16.1M74.77 18.3L112.16 18.3M92.62 6.59L95.15 10.98M94.31 6.59L91.78 10.98M91.78 11.35L96 15.74M95.15 11.35L90.93 15.74M90.93 16.1L96.84 20.5M96 16.1L90.09 20.5M90.09 20.86L97.69 25.25M96.84 20.86L89.24 25.25M89.24 25.62L98.53 30.01M97.69 25.62L88.4 30.01M88.4 30.38L99.37 34.77M98.53 30.38L87.56 34.77M18.09 7.32L16.28 32.94M18.09 7.32L19.9 32.94M10.85 12.44L25.33 12.44M9.65 16.84L26.53 16.84M18.09 7.32L18.09 32.94M32.56 25.62L32.56 33.67M37.39 24.16L37.39 33.67M42.21 25.62L42.21 33.67M48.24 21.96L48.24 33.67M51.86 24.16L51.86 33.67M59.09 22.69L59.09 33.67M63.92 22.69L63.92 33.67M68.74 24.89L68.74 33.67M74.77 25.62L74.77 33.67M28.94 27.82L28.94 33.67M79.6 27.08L79.6 33.67M30.15 26.35L44.62 26.35M45.83 23.42L55.48 23.42M56.68 24.16L72.36 24.16M4.82 29.28L84.42 29.28" stroke="#46586a" stroke-width=".8" fill="none" opacity=".9"/><path d="M18.09 12.44Q54.27 10.98 83.21 3.29M18.09 16.84Q54.27 18.3 79.6 16.1M106.73 2.56L120.6 5.86" stroke="#5a7088" stroke-width=".4" fill="none" opacity=".7"/></svg>
<div style="left:1053.6px;top:266.8px;font-size:11.5px;line-height:15px;color:#dedede;white-space:pre;letter-spacing:0.121px;">Solutions - w,e,a/ind...</div>
<div style="left:1052.6px;top:286.6px;width:120.6px;height:249px;background:#fff;"></div>
<div style="left:1052.6px;top:286.6px;width:120.6px;height:5px;background:linear-gradient(90deg,#1d6cb2 0%,#2a85c6 18%,#1c70b6 34%,#3590cd 52%,#2079bd 68%,#3a93d0 84%,#1d6cb2 100%);"></div>
<div style="left:1054.1px;top:287.8px;width:4px;height:1.6px;background:rgba(255,255,255,.85);"></div>
<div style="left:1052.6px;top:291.6px;width:120.6px;height:5px;background:#3b3b3b;"></div>
<div style="left:1092.4px;top:293.7px;width:20.5px;height:0.9px;background:#aaa;"></div>
<div style="left:1115.31px;top:293.7px;width:14.47px;height:0.9px;background:#aaa;"></div>
<div style="left:1132.2px;top:293.7px;width:14.47px;height:0.9px;background:#aaa;"></div>
<div style="left:1055.6px;top:300.1px;width:28px;height:2px;background:#555;"></div>
<div style="left:1055.6px;top:303.9px;width:25.3px;height:0.9px;background:#5aa0dc;"></div>
<div style="left:1083.2px;top:303.9px;width:18.4px;height:0.9px;background:#999;"></div>
<div style="left:1134.2px;top:301.1px;width:34.5px;height:5.5px;background:#77c474;border-radius:3px;box-shadow:0 0 0 .5px #5a8a58;"></div>
<div style="left:1138.2px;top:303.45px;width:26.5px;height:0.9px;background:rgba(255,255,255,.7);"></div>
<svg style="left:1052.6px;top:308.8px;overflow:hidden" width="120.6" height="37" viewBox="0 0 100 100" preserveAspectRatio="none"><g filter="url(#b1)"><rect width="100" height="100" fill="#c9cccd"/><rect x="0" y="0" width="100" height="30" fill="#d4d6d8"/><ellipse cx="52" cy="8" rx="18" ry="14" fill="#eceeee"/><polygon points="0,0 14,0 46,22 0,70" fill="#b8bbbc"/><polygon points="100,0 86,0 60,20 100,62" fill="#bcbebf"/><polygon points="52,17 0,100 0,72" fill="#5d8c36"/><polygon points="52,17 0,100 26,100" fill="#3f7428"/><polygon points="52,17 26,100 42,100" fill="#6a5040"/><polygon points="52,17 42,100 68,100" fill="#4f8a30"/><polygon points="52,17 50,100 60,100" fill="#67a03c"/><polygon points="52,17 68,100 84,100" fill="#6a5242"/><polygon points="52,17 84,100 100,100 100,62" fill="#4a8430"/><polygon points="52,17 100,62 100,50" fill="#78a848"/><path d="M14 0L10 46" stroke="#8a8e90" stroke-width="0.8" vector-effect="non-scaling-stroke" fill="none"/><path d="M30 0L28 30" stroke="#8a8e90" stroke-width="0.7" vector-effect="non-scaling-stroke" fill="none"/><path d="M74 0L76 26" stroke="#8a8e90" stroke-width="0.7" vector-effect="non-scaling-stroke" fill="none"/><path d="M90 0L94 44" stroke="#8a8e90" stroke-width="0.8" vector-effect="non-scaling-stroke" fill="none"/></g></svg>
<div style="left:1127.37px;top:327.3px;width:38.59px;height:1px;background:rgba(255,255,255,.75);"></div>
<div style="left:1127.37px;top:329.3px;width:28.94px;height:1px;background:rgba(255,255,255,.6);"></div>
<svg style="left:1077px;top:352.8px;overflow:hidden" width="23" height="12.2" viewBox="0 0 100 100" preserveAspectRatio="none"><g filter="url(#b2)"><rect width="100" height="100" fill="#4f7a35"/><rect x="0" y="0" width="100" height="26" fill="#6a6a50"/><ellipse cx="30" cy="50" rx="22" ry="30" fill="#5f9a3a"/><ellipse cx="72" cy="60" rx="20" ry="30" fill="#3f6a2a"/><rect x="0" y="84" width="100" height="16" fill="#4a4030"/><rect x="10" y="30" width="10" height="12" fill="#c8c8c0"/></g></svg>
<div style="left:1079.3px;top:368.2px;width:18.4px;height:0.9px;background:#777;"></div>
<div style="left:1082.75px;top:370.2px;width:11.5px;height:0.9px;background:#999;"></div>
<svg style="left:1102px;top:352.8px;overflow:hidden" width="22" height="12.2" viewBox="0 0 100 100" preserveAspectRatio="none"><g filter="url(#b2)"><rect width="100" height="100" fill="#7aac48"/><rect x="28" y="0" width="16" height="100" fill="#e0d8c0"/><rect x="52" y="10" width="14" height="90" fill="#d0c8b0"/><rect x="0" y="60" width="100" height="40" fill="#5a9038"/><rect x="78" y="0" width="22" height="60" fill="#98c060"/></g></svg>
<div style="left:1104.2px;top:368.2px;width:17.6px;height:0.9px;background:#777;"></div>
<div style="left:1107.5px;top:370.2px;width:11px;height:0.9px;background:#999;"></div>
<svg style="left:1126px;top:352.8px;overflow:hidden" width="23" height="12.2" viewBox="0 0 100 100" preserveAspectRatio="none"><g filter="url(#b2)"><rect width="100" height="100" fill="#6a9cc4"/><rect x="0" y="0" width="30" height="100" fill="#4a7aa4"/><polygon points="10,0 40,0 30,100 0,100" fill="#dfe8ee"/><rect x="38" y="20" width="44" height="56" fill="#b8d4e8"/><rect x="44" y="28" width="32" height="38" fill="#4a90d0"/><ellipse cx="70" cy="86" rx="14" ry="22" fill="#e8e0d4"/><rect x="86" y="0" width="14" height="100" fill="#5a88b0"/></g></svg>
<div style="left:1128.3px;top:368.2px;width:18.4px;height:0.9px;background:#777;"></div>
<div style="left:1131.75px;top:370.2px;width:11.5px;height:0.9px;background:#999;"></div>
<div style="left:1077px;top:375px;width:65.85px;height:1px;background:#9e9e9e;"></div>
<div style="left:1077px;top:376.95px;width:63.15px;height:1px;background:#9e9e9e;"></div>
<div style="left:1077px;top:378.9px;width:39.98px;height:1px;background:#9e9e9e;"></div>
<div style="left:1077px;top:382px;width:67.45px;height:1px;background:#9e9e9e;"></div>
<div style="left:1077px;top:383.95px;width:61.77px;height:1px;background:#9e9e9e;"></div>
<div style="left:1077px;top:385.9px;width:63.45px;height:1px;background:#9e9e9e;"></div>
<div style="left:1077px;top:387.85px;width:70.62px;height:1px;background:#9e9e9e;"></div>
<div style="left:1077px;top:389.8px;width:53.56px;height:1px;background:#9e9e9e;"></div>
<div style="left:1077px;top:393px;width:70.37px;height:1px;background:#9e9e9e;"></div>
<div style="left:1077px;top:394.95px;width:60.06px;height:1px;background:#9e9e9e;"></div>
<div style="left:1077px;top:396.9px;width:35.44px;height:1px;background:#9e9e9e;"></div>
<div style="left:1089px;top:518.8px;width:48.4px;height:5.2px;background:#77c474;border-radius:3px;box-shadow:0 0 0 .6px #5a8a58;"></div>
<div style="left:1098.68px;top:521px;width:29.04px;height:0.9px;background:rgba(255,255,255,.7);"></div>
<div style="left:1052.6px;top:532px;width:120.6px;height:3.6px;background:#065aa8;"></div>
<div style="left:1058.6px;top:533px;width:4px;height:1.6px;background:rgba(255,255,255,.9);"></div>
<div style="left:1065.6px;top:533.5px;width:14px;height:0.8px;background:rgba(255,255,255,.45);"></div>
<div style="left:1082.6px;top:533.5px;width:8px;height:0.8px;background:rgba(255,255,255,.45);"></div>
<div style="left:1156.2px;top:533.5px;width:6px;height:0.8px;background:rgba(255,255,255,.45);"></div>
<div style="left:1164.2px;top:533.5px;width:5px;height:0.8px;background:rgba(255,255,255,.45);"></div>
<svg style="left:1118.8px;top:406.8px;overflow:hidden" width="30.2" height="20" viewBox="0 0 100 100" preserveAspectRatio="none"><g filter="url(#b2)"><rect width="100" height="100" fill="#4f7a35"/><rect x="0" y="0" width="100" height="26" fill="#6a6a50"/><ellipse cx="30" cy="50" rx="22" ry="30" fill="#5f9a3a"/><ellipse cx="72" cy="60" rx="20" ry="30" fill="#3f6a2a"/><rect x="0" y="84" width="100" height="16" fill="#4a4030"/><rect x="10" y="30" width="10" height="12" fill="#c8c8c0"/></g></svg>
<svg style="left:1119px;top:428px;overflow:hidden" width="9.3" height="6" viewBox="0 0 100 100" preserveAspectRatio="none"><g filter="url(#b2)"><rect width="100" height="100" fill="#4f7a35"/><rect x="0" y="0" width="100" height="26" fill="#6a6a50"/><ellipse cx="30" cy="50" rx="22" ry="30" fill="#5f9a3a"/><ellipse cx="72" cy="60" rx="20" ry="30" fill="#3f6a2a"/><rect x="0" y="84" width="100" height="16" fill="#4a4030"/><rect x="10" y="30" width="10" height="12" fill="#c8c8c0"/></g></svg>
<svg style="left:1129.3px;top:428px;overflow:hidden" width="9.3" height="6" viewBox="0 0 100 100" preserveAspectRatio="none"><g filter="url(#b2)"><rect width="100" height="100" fill="#2c2e32"/><polygon points="30,0 70,0 60,60 40,60" fill="#6a665a"/><rect x="40" y="60" width="20" height="40" fill="#4a4a46"/><rect x="0" y="0" width="20" height="100" fill="#1e2024"/></g></svg>
<svg style="left:1139.7px;top:428px;overflow:hidden" width="9.3" height="6" viewBox="0 0 100 100" preserveAspectRatio="none"><g filter="url(#b2)"><rect width="100" height="100" fill="#b8b0a0"/><rect x="0" y="0" width="100" height="30" fill="#a8a498"/><rect x="10" y="24" width="62" height="46" fill="#ece8e0"/><rect x="60" y="34" width="26" height="36" fill="#d4c4a4"/><rect x="0" y="76" width="100" height="24" fill="#8a8272"/><ellipse cx="24" cy="74" rx="6" ry="12" fill="#2a2a2a"/><ellipse cx="70" cy="74" rx="6" ry="12" fill="#2a2a2a"/></g></svg>
<div style="left:1077px;top:407px;width:30px;height:1px;background:#444;"></div>
<div style="left:1077px;top:409.4px;width:33.52px;height:1px;background:#a4a4a4;"></div>
<div style="left:1077px;top:411.35px;width:34.9px;height:1px;background:#a4a4a4;"></div>
<div style="left:1077px;top:413.3px;width:29.73px;height:1px;background:#a4a4a4;"></div>
<div style="left:1077px;top:415.25px;width:34.65px;height:1px;background:#a4a4a4;"></div>
<div style="left:1077px;top:417.2px;width:31.07px;height:1px;background:#a4a4a4;"></div>
<div style="left:1077px;top:419.15px;width:30.57px;height:1px;background:#a4a4a4;"></div>
<div style="left:1077px;top:421.1px;width:30.41px;height:1px;background:#a4a4a4;"></div>
<div style="left:1077px;top:423.05px;width:34.29px;height:1px;background:#a4a4a4;"></div>
<div style="left:1077px;top:425px;width:20.68px;height:1px;background:#a4a4a4;"></div>
<div style="left:1077.3px;top:427.2px;width:16.7px;height:5.2px;background:#77c474;border-radius:3px;box-shadow:0 0 0 .6px #5a8a58;"></div>
<div style="left:1080.64px;top:429.4px;width:10.02px;height:0.9px;background:rgba(255,255,255,.7);"></div>
<svg style="left:1118.8px;top:444.8px;overflow:hidden" width="30.2" height="20" viewBox="0 0 100 100" preserveAspectRatio="none"><g filter="url(#b2)"><rect width="100" height="100" fill="#40301c"/><ellipse cx="28" cy="32" rx="16" ry="28" fill="#c88428"/><ellipse cx="28" cy="30" rx="6" ry="12" fill="#f8d870"/><ellipse cx="70" cy="30" rx="14" ry="26" fill="#b87824"/><ellipse cx="70" cy="28" rx="5" ry="10" fill="#f4d060"/><rect x="0" y="70" width="100" height="30" fill="#5a5a2c"/><rect x="48" y="10" width="3" height="80" fill="#2a2014"/></g></svg>
<svg style="left:1119px;top:466px;overflow:hidden" width="9.3" height="6" viewBox="0 0 100 100" preserveAspectRatio="none"><g filter="url(#b2)"><rect width="100" height="100" fill="#40301c"/><ellipse cx="28" cy="32" rx="16" ry="28" fill="#c88428"/><ellipse cx="28" cy="30" rx="6" ry="12" fill="#f8d870"/><ellipse cx="70" cy="30" rx="14" ry="26" fill="#b87824"/><ellipse cx="70" cy="28" rx="5" ry="10" fill="#f4d060"/><rect x="0" y="70" width="100" height="30" fill="#5a5a2c"/><rect x="48" y="10" width="3" height="80" fill="#2a2014"/></g></svg>
<svg style="left:1129.3px;top:466px;overflow:hidden" width="9.3" height="6" viewBox="0 0 100 100" preserveAspectRatio="none"><g filter="url(#b2)"><rect width="100" height="100" fill="#6a6a6a"/><rect x="0" y="0" width="10" height="100" fill="#151515"/><ellipse cx="24" cy="50" rx="12" ry="44" fill="#c4c4c4"/><rect x="36" y="0" width="10" height="100" fill="#222"/><ellipse cx="56" cy="50" rx="10" ry="40" fill="#a0a0a0"/><rect x="68" y="0" width="12" height="100" fill="#1c1c1c"/><rect x="80" y="20" width="20" height="60" fill="#8a8a8a"/></g></svg>
<svg style="left:1139.7px;top:466px;overflow:hidden" width="9.3" height="6" viewBox="0 0 100 100" preserveAspectRatio="none"><g filter="url(#b2)"><rect width="100" height="100" fill="#101010"/><rect x="60" y="20" width="30" height="60" fill="#262626"/><rect x="0" y="70" width="100" height="30" fill="#1a1a1a"/></g></svg>
<div style="left:1077px;top:445px;width:30px;height:1px;background:#444;"></div>
<div style="left:1077px;top:447.4px;width:34.1px;height:1px;background:#a4a4a4;"></div>
<div style="left:1077px;top:449.35px;width:32.99px;height:1px;background:#a4a4a4;"></div>
<div style="left:1077px;top:451.3px;width:32.4px;height:1px;background:#a4a4a4;"></div>
<div style="left:1077px;top:453.25px;width:33.91px;height:1px;background:#a4a4a4;"></div>
<div style="left:1077px;top:455.2px;width:32.11px;height:1px;background:#a4a4a4;"></div>
<div style="left:1077px;top:457.15px;width:35.22px;height:1px;background:#a4a4a4;"></div>
<div style="left:1077px;top:459.1px;width:19.66px;height:1px;background:#a4a4a4;"></div>
<div style="left:1077.3px;top:462.6px;width:16.7px;height:5.6px;background:#77c474;border-radius:3px;box-shadow:0 0 0 .6px #5a8a58;"></div>
<div style="left:1080.64px;top:465px;width:10.02px;height:0.9px;background:rgba(255,255,255,.7);"></div>
<svg style="left:1118.8px;top:483.2px;overflow:hidden" width="30.2" height="19.6" viewBox="0 0 100 100" preserveAspectRatio="none"><g filter="url(#b2)"><rect width="100" height="100" fill="#8a9a88"/><rect x="0" y="0" width="100" height="40" fill="#c4ccd4"/><rect x="0" y="40" width="100" height="20" fill="#a8b0ac"/><rect x="0" y="60" width="100" height="40" fill="#4f7040"/><rect x="70" y="36" width="8" height="50" fill="#3a3a34"/><rect x="20" y="56" width="40" height="10" fill="#7a9a5a"/></g></svg>
<svg style="left:1119px;top:504.5px;overflow:hidden" width="9.3" height="5.7" viewBox="0 0 100 100" preserveAspectRatio="none"><g filter="url(#b2)"><rect width="100" height="100" fill="#a8aca8"/><rect x="0" y="0" width="100" height="40" fill="#c8cacc"/><polygon points="0,100 40,40 60,40 100,100" fill="#6a8a3a"/><polygon points="30,100 46,40 54,40 70,100" fill="#a89a40"/><rect x="0" y="40" width="20" height="30" fill="#8a8c88"/></g></svg>
<svg style="left:1129.3px;top:504.5px;overflow:hidden" width="9.3" height="5.7" viewBox="0 0 100 100" preserveAspectRatio="none"><g filter="url(#b2)"><rect width="100" height="100" fill="#9a5a28"/><rect x="0" y="0" width="100" height="40" fill="#d08838"/><rect x="10" y="10" width="6" height="90" fill="#3a2a1c"/><rect x="40" y="0" width="6" height="100" fill="#4a3420"/><rect x="70" y="10" width="6" height="90" fill="#3a2a1c"/><rect x="0" y="80" width="100" height="20" fill="#4a3624"/></g></svg>
<svg style="left:1139.7px;top:504.5px;overflow:hidden" width="9.3" height="5.7" viewBox="0 0 100 100" preserveAspectRatio="none"><g filter="url(#b2)"><rect width="100" height="100" fill="#4a90dc"/><rect x="0" y="0" width="100" height="50" fill="#3f88d8"/><rect x="0" y="50" width="100" height="20" fill="#7ab0e4"/><rect x="0" y="76" width="100" height="24" fill="#6a7a48"/><rect x="20" y="36" width="60" height="6" fill="#c8ccd0"/><rect x="30" y="36" width="4" height="44" fill="#b8bcc0"/><rect x="66" y="36" width="4" height="44" fill="#b8bcc0"/></g></svg>
<div style="left:1077px;top:483px;width:30px;height:1px;background:#444;"></div>
<div style="left:1077px;top:485.4px;width:34.67px;height:1px;background:#a4a4a4;"></div>
<div style="left:1077px;top:487.35px;width:34.72px;height:1px;background:#a4a4a4;"></div>
<div style="left:1077px;top:489.3px;width:29.97px;height:1px;background:#a4a4a4;"></div>
<div style="left:1077px;top:491.25px;width:29.58px;height:1px;background:#a4a4a4;"></div>
<div style="left:1077px;top:493.2px;width:32.97px;height:1px;background:#a4a4a4;"></div>
<div style="left:1077px;top:495.15px;width:32.28px;height:1px;background:#a4a4a4;"></div>
<div style="left:1077px;top:497.1px;width:30.6px;height:1px;background:#a4a4a4;"></div>
<div style="left:1077px;top:499.05px;width:29.8px;height:1px;background:#a4a4a4;"></div>
<div style="left:1077px;top:501px;width:31.33px;height:1px;background:#a4a4a4;"></div>
<div style="left:1077px;top:502.95px;width:34.93px;height:1px;background:#a4a4a4;"></div>
<div style="left:1077px;top:504.9px;width:34.21px;height:1px;background:#a4a4a4;"></div>
<div style="left:1077px;top:506.85px;width:31.46px;height:1px;background:#a4a4a4;"></div>
<div style="left:1077px;top:508.8px;width:34.58px;height:1px;background:#a4a4a4;"></div>
<div style="left:1077px;top:510.75px;width:34.28px;height:1px;background:#a4a4a4;"></div>
<div style="left:1077px;top:512.7px;width:31.9px;height:1px;background:#a4a4a4;"></div>
<div style="left:1077px;top:514.65px;width:21.31px;height:1px;background:#a4a4a4;"></div>
<div style="left:1184.9px;top:266.8px;font-size:11.5px;line-height:15px;color:#dedede;white-space:pre;letter-spacing:0.138px;">Solutions - w,e,a/pre...</div>
<div style="left:1183.9px;top:286.9px;width:120.4px;height:134.4px;background:#fff;"></div>
<div style="left:1183.9px;top:286.9px;width:120.4px;height:5.1px;background:linear-gradient(90deg,#1d6cb2 0%,#2a85c6 18%,#1c70b6 34%,#3590cd 52%,#2079bd 68%,#3a93d0 84%,#1d6cb2 100%);"></div>
<div style="left:1185.4px;top:288.1px;width:4px;height:1.6px;background:rgba(255,255,255,.85);"></div>
<div style="left:1183.9px;top:292px;width:120.4px;height:5.6px;background:#3b3b3b;"></div>
<div style="left:1223.63px;top:294.4px;width:20.47px;height:0.9px;background:#aaa;"></div>
<div style="left:1246.51px;top:294.4px;width:14.45px;height:0.9px;background:#aaa;"></div>
<div style="left:1263.36px;top:294.4px;width:14.45px;height:0.9px;background:#aaa;"></div>
<div style="left:1186.9px;top:301.1px;width:28px;height:2px;background:#555;"></div>
<div style="left:1186.9px;top:304.9px;width:25.3px;height:0.9px;background:#5aa0dc;"></div>
<div style="left:1214.5px;top:304.9px;width:18.4px;height:0.9px;background:#999;"></div>
<div style="left:1265.3px;top:302.1px;width:34.5px;height:5.5px;background:#77c474;border-radius:3px;box-shadow:0 0 0 .5px #5a8a58;"></div>
<div style="left:1269.3px;top:304.45px;width:26.5px;height:0.9px;background:rgba(255,255,255,.7);"></div>
<svg style="left:1183.9px;top:310px;overflow:hidden" width="120.4" height="35.8" viewBox="0 0 100 100" preserveAspectRatio="none"><g filter="url(#b1)"><rect width="100" height="100" fill="#6a7044"/><rect x="0" y="0" width="62" height="50" fill="#4f7236"/><rect x="0" y="0" width="40" height="20" fill="#5c8040"/><rect x="30" y="20" width="30" height="30" fill="#5a6e38"/><rect x="58" y="0" width="42" height="100" fill="#8c7c64"/><rect x="0" y="50" width="58" height="50" fill="#77694e"/><rect x="0" y="78" width="40" height="22" fill="#5e5640"/><rect x="36" y="40" width="30" height="30" fill="#84745a"/><ellipse cx="18" cy="78" rx="8" ry="26" fill="#aeaaa2"/><ellipse cx="18.5" cy="78" rx="6" ry="20" fill="#d6d4ce"/><ellipse cx="30.5" cy="44" rx="6" ry="17" fill="#2a6cc2"/><rect x="24.5" y="44" width="12" height="14" fill="#2a6cc2"/><rect x="26.5" y="56" width="8.5" height="34" fill="#1a1a1a"/><rect x="27" y="88" width="8" height="12" fill="#b8b8b4"/><ellipse cx="72" cy="22" rx="4" ry="12" fill="#2a6cc2"/><ellipse cx="81" cy="10" rx="3" ry="9" fill="#2f70c4"/><ellipse cx="92" cy="4" rx="2.5" ry="6" fill="#2f70c4"/><rect x="66" y="30" width="6" height="20" fill="#9a9892"/><rect x="68" y="48" width="8" height="52" fill="#c9c9c5"/><rect x="76" y="66" width="24" height="10" fill="#c4c4c0"/><rect x="78" y="28" width="5" height="36" fill="#c0c0bc"/><rect x="88" y="10" width="5" height="44" fill="#c4c4c0"/><rect x="84" y="76" width="7" height="24" fill="#bcbcb8"/><rect x="92" y="56" width="8" height="12" fill="#c8c8c4"/></g></svg>
<div style="left:1258.55px;top:327.9px;width:38.53px;height:1px;background:rgba(255,255,255,.75);"></div>
<div style="left:1258.55px;top:329.9px;width:28.9px;height:1px;background:rgba(255,255,255,.6);"></div>
<svg style="left:1208px;top:353.8px;overflow:hidden" width="23" height="12.2" viewBox="0 0 100 100" preserveAspectRatio="none"><g filter="url(#b2)"><rect width="100" height="100" fill="#6a6a6a"/><rect x="0" y="0" width="10" height="100" fill="#151515"/><ellipse cx="24" cy="50" rx="12" ry="44" fill="#c4c4c4"/><rect x="36" y="0" width="10" height="100" fill="#222"/><ellipse cx="56" cy="50" rx="10" ry="40" fill="#a0a0a0"/><rect x="68" y="0" width="12" height="100" fill="#1c1c1c"/><rect x="80" y="20" width="20" height="60" fill="#8a8a8a"/></g></svg>
<div style="left:1210.3px;top:369.2px;width:18.4px;height:0.9px;background:#777;"></div>
<div style="left:1213.75px;top:371.2px;width:11.5px;height:0.9px;background:#999;"></div>
<svg style="left:1233px;top:353.8px;overflow:hidden" width="21.8" height="12.2" viewBox="0 0 100 100" preserveAspectRatio="none"><g filter="url(#b2)"><rect width="100" height="100" fill="#6a9a44"/><rect x="0" y="0" width="100" height="26" fill="#8aaed0"/><rect x="0" y="26" width="100" height="14" fill="#9ab868"/><polygon points="0,50 100,34 100,70 0,86" fill="#2f6cc8"/><polygon points="0,50 100,34 100,44 0,62" fill="#4a88dc"/><rect x="0" y="86" width="100" height="14" fill="#8aa850"/></g></svg>
<div style="left:1235.18px;top:369.2px;width:17.44px;height:0.9px;background:#777;"></div>
<div style="left:1238.45px;top:371.2px;width:10.9px;height:0.9px;background:#999;"></div>
<svg style="left:1257px;top:353.8px;overflow:hidden" width="23" height="12.2" viewBox="0 0 100 100" preserveAspectRatio="none"><g filter="url(#b2)"><rect width="100" height="100" fill="#6a9cc4"/><rect x="0" y="0" width="30" height="100" fill="#4a7aa4"/><polygon points="10,0 40,0 30,100 0,100" fill="#dfe8ee"/><rect x="38" y="20" width="44" height="56" fill="#b8d4e8"/><rect x="44" y="28" width="32" height="38" fill="#4a90d0"/><ellipse cx="70" cy="86" rx="14" ry="22" fill="#e8e0d4"/><rect x="86" y="0" width="14" height="100" fill="#5a88b0"/></g></svg>
<div style="left:1259.3px;top:369.2px;width:18.4px;height:0.9px;background:#777;"></div>
<div style="left:1262.75px;top:371.2px;width:11.5px;height:0.9px;background:#999;"></div>
<div style="left:1208px;top:377px;width:64.83px;height:1px;background:#9e9e9e;"></div>
<div style="left:1208px;top:378.95px;width:58.69px;height:1px;background:#9e9e9e;"></div>
<div style="left:1208px;top:380.9px;width:62.83px;height:1px;background:#9e9e9e;"></div>
<div style="left:1208px;top:382.85px;width:69.42px;height:1px;background:#9e9e9e;"></div>
<div style="left:1208px;top:384.8px;width:62.49px;height:1px;background:#9e9e9e;"></div>
<div style="left:1208px;top:386.75px;width:47.42px;height:1px;background:#9e9e9e;"></div>
<div style="left:1208px;top:390.5px;width:65.43px;height:1px;background:#9e9e9e;"></div>
<div style="left:1208px;top:392.45px;width:36.36px;height:1px;background:#9e9e9e;"></div>
<div style="left:1208px;top:396.5px;width:27.75px;height:1px;background:#9e9e9e;"></div>
<div style="left:1208px;top:399.5px;width:29.12px;height:1px;background:#9e9e9e;"></div>
<div style="left:1221px;top:406.8px;width:48px;height:5.5px;background:#77c474;border-radius:3px;box-shadow:0 0 0 .6px #5a8a58;"></div>
<div style="left:1230.6px;top:409.15px;width:28.8px;height:0.9px;background:rgba(255,255,255,.7);"></div>
<div style="left:1183.9px;top:417px;width:120.4px;height:4.3px;background:#065aa8;"></div>
<div style="left:1189.9px;top:418.35px;width:4px;height:1.6px;background:rgba(255,255,255,.9);"></div>
<div style="left:1196.9px;top:418.85px;width:14px;height:0.8px;background:rgba(255,255,255,.45);"></div>
<div style="left:1213.9px;top:418.85px;width:8px;height:0.8px;background:rgba(255,255,255,.45);"></div>
<div style="left:1287.3px;top:418.85px;width:6px;height:0.8px;background:rgba(255,255,255,.45);"></div>
<div style="left:1295.3px;top:418.85px;width:5px;height:0.8px;background:rgba(255,255,255,.45);"></div>
<div style="left:1312.7px;top:266.8px;font-size:11.5px;line-height:15px;color:#dedede;white-space:pre;letter-spacing:0.209px;">Solutions - w,e,a/filtr...</div>
<div style="left:1311.7px;top:286.9px;width:120.4px;height:129.1px;background:#fff;"></div>
<div style="left:1311.7px;top:286.9px;width:120.4px;height:5.1px;background:linear-gradient(90deg,#1d6cb2 0%,#2a85c6 18%,#1c70b6 34%,#3590cd 52%,#2079bd 68%,#3a93d0 84%,#1d6cb2 100%);"></div>
<div style="left:1313.2px;top:288.1px;width:4px;height:1.6px;background:rgba(255,255,255,.85);"></div>
<div style="left:1311.7px;top:292px;width:120.4px;height:5.6px;background:#3b3b3b;"></div>
<div style="left:1351.43px;top:294.4px;width:20.47px;height:0.9px;background:#aaa;"></div>
<div style="left:1374.31px;top:294.4px;width:14.45px;height:0.9px;background:#aaa;"></div>
<div style="left:1391.16px;top:294.4px;width:14.45px;height:0.9px;background:#aaa;"></div>
<div style="left:1314.7px;top:301.1px;width:28px;height:2px;background:#555;"></div>
<div style="left:1314.7px;top:304.9px;width:25.3px;height:0.9px;background:#5aa0dc;"></div>
<div style="left:1342.3px;top:304.9px;width:18.4px;height:0.9px;background:#999;"></div>
<div style="left:1393.1px;top:302.1px;width:34.5px;height:5.5px;background:#77c474;border-radius:3px;box-shadow:0 0 0 .5px #5a8a58;"></div>
<div style="left:1397.1px;top:304.45px;width:26.5px;height:0.9px;background:rgba(255,255,255,.7);"></div>
<svg style="left:1311.7px;top:310px;overflow:hidden" width="120.4" height="37" viewBox="0 0 100 100" preserveAspectRatio="none"><g filter="url(#b1)"><rect width="100" height="100" fill="#5a564e"/><rect x="0" y="0" width="100" height="26" fill="#25282e"/><rect x="38" y="0" width="30" height="10" fill="#c8ccd0"/><rect x="74" y="0" width="16" height="30" fill="#b8bcc0"/><rect x="0" y="20" width="18" height="50" fill="#4c5056"/><rect x="3" y="30" width="8" height="34" fill="#9ea2a6"/><rect x="0" y="72" width="100" height="28" fill="#6c645a"/><rect x="0" y="72" width="40" height="28" fill="#4a443c"/><rect x="8" y="80" width="30" height="10" fill="#8a8478"/><rect x="21" y="8" width="54" height="5" fill="#2a6cc2"/><rect x="72" y="8" width="3" height="92" fill="#2a6cc2"/><rect x="27" y="13" width="1.8" height="22" fill="#2a6cc2"/><rect x="38" y="13" width="1.8" height="22" fill="#2a6cc2"/><rect x="50" y="13" width="1.8" height="24" fill="#2a6cc2"/><rect x="63" y="13" width="1.8" height="26" fill="#2a6cc2"/><ellipse cx="26" cy="52" rx="6" ry="20" fill="#a9a090"/><rect x="20" y="50" width="12" height="26" fill="#a9a090"/><ellipse cx="37" cy="52" rx="6" ry="21" fill="#b2a999"/><rect x="31" y="50" width="12" height="28" fill="#b2a999"/><ellipse cx="49" cy="54" rx="6.5" ry="22" fill="#b4ab9b"/><rect x="42.5" y="52" width="13" height="30" fill="#b4ab9b"/><ellipse cx="62" cy="56" rx="7.5" ry="23" fill="#aba292"/><rect x="54.5" y="54" width="15" height="32" fill="#aba292"/><rect x="70" y="36" width="20" height="64" fill="#3c4046"/><rect x="78" y="40" width="8" height="40" fill="#55595f"/><rect x="90" y="0" width="10" height="100" fill="#e6e6e4"/><rect x="92" y="8" width="5" height="12" fill="#e0a040"/></g></svg>
<div style="left:1386.35px;top:328.5px;width:38.53px;height:1px;background:rgba(255,255,255,.75);"></div>
<div style="left:1386.35px;top:330.5px;width:28.9px;height:1px;background:rgba(255,255,255,.6);"></div>
<svg style="left:1335.8px;top:352.8px;overflow:hidden" width="23.2" height="12" viewBox="0 0 100 100" preserveAspectRatio="none"><g filter="url(#b2)"><rect width="100" height="100" fill="#8a8678"/><rect x="0" y="0" width="100" height="44" fill="#5a8cd2"/><rect x="0" y="30" width="100" height="14" fill="#9abce0"/><rect x="22" y="14" width="16" height="56" fill="#e4e4e0"/><rect x="46" y="34" width="40" height="36" fill="#7a7468"/><rect x="0" y="70" width="100" height="30" fill="#8a8474"/></g></svg>
<div style="left:1338.12px;top:368px;width:18.56px;height:0.9px;background:#777;"></div>
<div style="left:1341.6px;top:370px;width:11.6px;height:0.9px;background:#999;"></div>
<svg style="left:1361px;top:352.8px;overflow:hidden" width="22" height="12" viewBox="0 0 100 100" preserveAspectRatio="none"><g filter="url(#b2)"><rect width="100" height="100" fill="#b8c8d8"/><rect x="0" y="0" width="18" height="100" fill="#2a3a5a"/><rect x="18" y="0" width="16" height="100" fill="#c86a30" opacity="0.5"/><rect x="40" y="10" width="20" height="90" fill="#e8eef4"/><rect x="62" y="0" width="14" height="100" fill="#7a9cc0"/><rect x="80" y="10" width="20" height="90" fill="#dfe8f0"/></g></svg>
<div style="left:1363.2px;top:368px;width:17.6px;height:0.9px;background:#777;"></div>
<div style="left:1366.5px;top:370px;width:11px;height:0.9px;background:#999;"></div>
<svg style="left:1385px;top:352.8px;overflow:hidden" width="23" height="12" viewBox="0 0 100 100" preserveAspectRatio="none"><g filter="url(#b2)"><rect width="100" height="100" fill="#c8501c"/><rect x="0" y="0" width="30" height="100" fill="#e8a848"/><ellipse cx="20" cy="40" rx="14" ry="40" fill="#f4d070"/><rect x="40" y="20" width="40" height="50" fill="#6a2418"/><rect x="48" y="36" width="30" height="16" fill="#2a1a18"/><rect x="80" y="0" width="20" height="100" fill="#d87028"/><rect x="30" y="70" width="50" height="30" fill="#a83c1c"/></g></svg>
<div style="left:1387.3px;top:368px;width:18.4px;height:0.9px;background:#777;"></div>
<div style="left:1390.75px;top:370px;width:11.5px;height:0.9px;background:#999;"></div>
<div style="left:1336px;top:376.5px;width:57.93px;height:1px;background:#9e9e9e;"></div>
<div style="left:1336px;top:378.45px;width:31.45px;height:1px;background:#9e9e9e;"></div>
<div style="left:1336px;top:383px;width:63.69px;height:1px;background:#9e9e9e;"></div>
<div style="left:1336px;top:384.95px;width:70.79px;height:1px;background:#9e9e9e;"></div>
<div style="left:1336px;top:386.9px;width:35.21px;height:1px;background:#9e9e9e;"></div>
<div style="left:1336px;top:391.5px;width:24.99px;height:1px;background:#9e9e9e;"></div>
<div style="left:1336px;top:394.5px;width:24.81px;height:1px;background:#9e9e9e;"></div>
<div style="left:1348px;top:402.2px;width:48px;height:5.4px;background:#77c474;border-radius:3px;box-shadow:0 0 0 .6px #5a8a58;"></div>
<div style="left:1357.6px;top:404.5px;width:28.8px;height:0.9px;background:rgba(255,255,255,.7);"></div>
<div style="left:1311.7px;top:412.3px;width:120.4px;height:3.7px;background:#065aa8;"></div>
<div style="left:1317.7px;top:413.35px;width:4px;height:1.6px;background:rgba(255,255,255,.9);"></div>
<div style="left:1324.7px;top:413.85px;width:14px;height:0.8px;background:rgba(255,255,255,.45);"></div>
<div style="left:1341.7px;top:413.85px;width:8px;height:0.8px;background:rgba(255,255,255,.45);"></div>
<div style="left:1415.1px;top:413.85px;width:6px;height:0.8px;background:rgba(255,255,255,.45);"></div>
<div style="left:1423.1px;top:413.85px;width:5px;height:0.8px;background:rgba(255,255,255,.45);"></div>
<div style="left:239.5px;top:483.7px;font-size:11.5px;line-height:15px;color:#dedede;white-space:pre;letter-spacing:0.000px;">submen...</div>
<div style="left:238.3px;top:503.6px;width:54.7px;height:13.2px;background:#4c4c4c;border:1px solid #606060;border-radius:1.5px;"></div>
<div style="left:240px;top:506.5px;font-size:8.5px;line-height:11px;color:#e8e8e8;white-space:pre;">su...</div>
<div style="left:267px;top:506.5px;font-size:8.5px;line-height:11px;color:#e8e8e8;white-space:pre;">m...</div>
<div style="left:241px;top:505.8px;width:18px;height:0.8px;background:#888;"></div>
<div style="left:268px;top:505.8px;width:10px;height:0.8px;background:#888;"></div>
<div style="left:238.3px;top:524.4px;width:26.3px;height:13.2px;background:#4c4c4c;border:1px solid #606060;border-radius:1.5px;"></div>
<div style="left:240px;top:527px;font-size:8.5px;line-height:11px;color:#e8e8e8;white-space:pre;">su...</div>
<div style="left:241px;top:526.6px;width:10px;height:0.8px;background:#777;"></div>
<div style="left:267.9px;top:523.5px;width:25.1px;height:12.5px;background:#3f8fd8;border:1px solid #606060;border-radius:1.5px;"></div>
<div style="left:269.5px;top:523.5px;font-size:8px;line-height:10px;color:#e8f0ff;white-space:pre;">m...</div>
<div style="left:270px;top:533px;width:16px;height:0.8px;background:rgba(255,255,255,.7);"></div>
<div style="left:278px;top:528px;width:12px;height:0.8px;background:rgba(255,255,255,.6);"></div>
<div style="left:238.3px;top:543.2px;width:26.3px;height:13.6px;background:#4c4c4c;border:1px solid #606060;border-radius:1.5px;"></div>
<div style="left:240px;top:545px;font-size:8.5px;line-height:11px;color:#e8e8e8;white-space:pre;">m</div>
<div style="left:249px;top:548.5px;width:12px;height:0.8px;background:#bbb;"></div>
<div style="left:249px;top:551.5px;width:13px;height:0.8px;background:#bbb;"></div>
<div style="left:241px;top:545.4px;width:12px;height:0.8px;background:#777;"></div>
<div style="left:267.9px;top:539.3px;width:25.1px;height:16.7px;background:#3f8fd8;border:1px solid #606060;border-radius:1.5px;"></div>
<div style="left:269.5px;top:542px;font-size:8px;line-height:10px;color:#e8f0ff;white-space:pre;">m...</div>
<div style="left:270px;top:552.5px;width:6px;height:0.8px;background:rgba(255,255,255,.6);"></div>
<div style="left:267.9px;top:558px;width:25.1px;height:12.3px;background:#3f8fd8;border:1px solid #606060;border-radius:1.5px;"></div>
<div style="left:270px;top:560.6px;width:6px;height:0.9px;background:rgba(255,255,255,.7);"></div>
<div style="left:270px;top:564.1px;width:10px;height:0.9px;background:rgba(255,255,255,.7);"></div>
<div style="left:270px;top:567.6px;width:7px;height:0.9px;background:rgba(255,255,255,.7);"></div>
<div style="left:238.3px;top:561.9px;width:26.3px;height:22.3px;background:#3f8fd8;border:1px solid #606060;border-radius:1.5px;"></div>
<div style="left:241px;top:564.5px;width:3px;height:0.9px;background:rgba(255,255,255,.75);"></div>
<div style="left:241px;top:567.8px;width:3px;height:0.9px;background:rgba(255,255,255,.75);"></div>
<div style="left:241px;top:571.1px;width:8px;height:0.9px;background:rgba(255,255,255,.75);"></div>
<div style="left:241px;top:574.4px;width:11px;height:0.9px;background:rgba(255,255,255,.75);"></div>
<div style="left:241px;top:577.7px;width:4px;height:0.9px;background:rgba(255,255,255,.75);"></div>
<div style="left:241px;top:581px;width:7px;height:0.9px;background:rgba(255,255,255,.75);"></div>
<div style="left:379.5px;top:470.5px;font-size:11.5px;line-height:15px;color:#dedede;white-space:pre;letter-spacing:0.181px;">Solutions - shipping ...</div>
<div style="left:378px;top:490.7px;width:121.5px;height:109.6px;background:#fff;"></div>
<div style="left:378px;top:490.7px;width:121.5px;height:5.1px;background:linear-gradient(90deg,#1d6cb2 0%,#2a85c6 18%,#1c70b6 34%,#3590cd 52%,#2079bd 68%,#3a93d0 84%,#1d6cb2 100%);"></div>
<div style="left:379.5px;top:491.9px;width:4px;height:1.6px;background:rgba(255,255,255,.85);"></div>
<div style="left:378px;top:495.8px;width:121.5px;height:4.8px;background:#3b3b3b;"></div>
<div style="left:418.1px;top:497.8px;width:20.65px;height:0.9px;background:#aaa;"></div>
<div style="left:441.18px;top:497.8px;width:14.58px;height:0.9px;background:#aaa;"></div>
<div style="left:458.19px;top:497.8px;width:14.58px;height:0.9px;background:#aaa;"></div>
<div style="left:382px;top:505.8px;width:33px;height:1.6px;background:#555;"></div>
<div style="left:382px;top:509.2px;width:6px;height:0.9px;background:#5aa0dc;"></div>
<div style="left:390px;top:509.2px;width:16px;height:0.9px;background:#999;"></div>
<svg style="left:419px;top:512.5px;overflow:hidden" width="37" height="20.5" viewBox="0 0 100 100" preserveAspectRatio="none"><g><rect width="100" height="100" fill="#fff"/><polygon points="14,50 22,22 30,34 38,12 46,28 54,10 62,26 70,16 80,40 86,50" fill="#5a7ad0"/><polygon points="16,50 26,30 34,40 42,24 52,36 60,22 70,36 78,30 84,50" fill="#3a5ac0"/><polygon points="4,66 12,48 28,36 50,32 72,36 86,48 92,66" fill="#2fa82f"/><rect x="14" y="52" width="22" height="12" fill="#2f4fc0"/><rect x="38" y="54" width="6" height="8" fill="#e8eef4"/><rect x="58" y="46" width="18" height="14" fill="#d83a2c"/><rect x="62" y="50" width="4" height="5" fill="#f0e0e0"/><rect x="69" y="50" width="4" height="5" fill="#f0e0e0"/><rect x="8" y="4" width="3" height="10" fill="#e89a30"/><rect x="2" y="66" width="80" height="5" fill="#f0c020"/><rect x="2" y="71" width="80" height="5" fill="#e87a20"/><rect x="2" y="76" width="76" height="4" fill="#c8302a"/><polygon points="70,52 84,50 96,74 70,74" fill="#1f6a4a"/><polygon points="80,60 96,74 98,82 84,82" fill="#1f4fa8"/><rect x="40" y="80" width="59" height="16" fill="#1f7fd8"/><rect x="44" y="84" width="24" height="4" fill="#6ab8f0"/></g></svg>
<div style="left:416px;top:535.6px;width:45px;height:0.9px;background:#999;"></div>
<div style="left:420px;top:537.8px;width:37px;height:1px;background:#666;"></div>
<svg style="left:402.8px;top:541.8px;overflow:hidden" width="22.2" height="12.4" viewBox="0 0 100 100" preserveAspectRatio="none"><g filter="url(#b2)"><rect width="100" height="100" fill="#a89a80"/><rect x="0" y="0" width="100" height="20" fill="#6a84a8"/><rect x="6" y="14" width="36" height="56" fill="#b08a50"/><rect x="44" y="30" width="30" height="40" fill="#8a8a90"/><rect x="78" y="20" width="22" height="50" fill="#c8b89a"/><rect x="0" y="76" width="100" height="24" fill="#7a7468"/></g></svg>
<svg style="left:427px;top:541.8px;overflow:hidden" width="23" height="12.4" viewBox="0 0 100 100" preserveAspectRatio="none"><g filter="url(#b2)"><rect width="100" height="100" fill="#2c2e32"/><polygon points="30,0 70,0 60,60 40,60" fill="#6a665a"/><rect x="40" y="60" width="20" height="40" fill="#4a4a46"/><rect x="0" y="0" width="20" height="100" fill="#1e2024"/></g></svg>
<svg style="left:452px;top:541.8px;overflow:hidden" width="22" height="12.4" viewBox="0 0 100 100" preserveAspectRatio="none"><g filter="url(#b2)"><rect width="100" height="100" fill="#b8b0a0"/><rect x="0" y="0" width="100" height="30" fill="#a8a498"/><rect x="10" y="24" width="62" height="46" fill="#ece8e0"/><rect x="60" y="34" width="26" height="36" fill="#d4c4a4"/><rect x="0" y="76" width="100" height="24" fill="#8a8272"/><ellipse cx="24" cy="74" rx="6" ry="12" fill="#2a2a2a"/><ellipse cx="70" cy="74" rx="6" ry="12" fill="#2a2a2a"/></g></svg>
<div style="left:427px;top:557.6px;width:23px;height:4.8px;background:#0e5ba6;border-radius:3px;box-shadow:0 0 0 .6px #123a66;"></div>
<div style="left:431.6px;top:559.6px;width:13.8px;height:0.9px;background:rgba(255,255,255,.7);"></div>
<div style="left:403px;top:566.6px;width:33px;height:1px;background:#333;"></div>
<div style="left:403px;top:568.8px;width:10px;height:1px;background:#333;"></div>
<div style="left:440px;top:566.6px;width:25px;height:1px;background:#333;"></div>
<div style="left:442px;top:568.8px;width:8px;height:1px;background:#555;"></div>
<div style="left:404px;top:572.6px;width:23.4px;height:1px;background:#999;"></div>
<div style="left:404px;top:574.55px;width:25.65px;height:1px;background:#999;"></div>
<div style="left:404px;top:576.5px;width:26.89px;height:1px;background:#999;"></div>
<div style="left:404px;top:578.45px;width:24.78px;height:1px;background:#999;"></div>
<div style="left:404px;top:580.4px;width:17.58px;height:1px;background:#999;"></div>
<div style="left:440px;top:572.6px;width:17px;height:0.9px;background:#7ab0e0;"></div>
<div style="left:440px;top:574.8px;width:16px;height:0.9px;background:#7ab0e0;"></div>
<div style="left:440px;top:577px;width:20.84px;height:1px;background:#999;"></div>
<div style="left:440px;top:578.95px;width:21.12px;height:1px;background:#999;"></div>
<div style="left:440px;top:580.9px;width:23.73px;height:1px;background:#999;"></div>
<div style="left:440px;top:582.85px;width:24.62px;height:1px;background:#999;"></div>
<div style="left:440px;top:584.8px;width:21.49px;height:1px;background:#999;"></div>
<div style="left:440px;top:586.75px;width:23.83px;height:1px;background:#999;"></div>
<div style="left:440px;top:588.7px;width:21.29px;height:1px;background:#999;"></div>
<div style="left:440px;top:590.65px;width:16.54px;height:1px;background:#999;"></div>
<div style="left:440px;top:592.4px;width:17px;height:0.9px;background:#7ab0e0;"></div>
<div style="left:378px;top:596.2px;width:121.5px;height:4.1px;background:#065aa8;"></div>
<div style="left:384px;top:597.45px;width:4px;height:1.6px;background:rgba(255,255,255,.9);"></div>
<div style="left:391px;top:597.95px;width:14px;height:0.8px;background:rgba(255,255,255,.45);"></div>
<div style="left:408px;top:597.95px;width:8px;height:0.8px;background:rgba(255,255,255,.45);"></div>
<div style="left:482.5px;top:597.95px;width:6px;height:0.8px;background:rgba(255,255,255,.45);"></div>
<div style="left:490.5px;top:597.95px;width:5px;height:0.8px;background:rgba(255,255,255,.45);"></div>
<div style="left:517.1px;top:470.5px;font-size:11.5px;line-height:15px;color:#dedede;white-space:pre;letter-spacing:0.185px;">Solutions - fragile sh...</div>
<div style="left:516.1px;top:490.4px;width:121.1px;height:154.8px;background:#fff;"></div>
<div style="left:516.1px;top:490.4px;width:121.1px;height:5.6px;background:linear-gradient(90deg,#1d6cb2 0%,#2a85c6 18%,#1c70b6 34%,#3590cd 52%,#2079bd 68%,#3a93d0 84%,#1d6cb2 100%);"></div>
<div style="left:517.6px;top:491.6px;width:4px;height:1.6px;background:rgba(255,255,255,.85);"></div>
<div style="left:516.1px;top:496px;width:121.1px;height:4.8px;background:#3b3b3b;"></div>
<div style="left:556.06px;top:498px;width:20.59px;height:0.9px;background:#aaa;"></div>
<div style="left:579.07px;top:498px;width:14.53px;height:0.9px;background:#aaa;"></div>
<div style="left:596.03px;top:498px;width:14.53px;height:0.9px;background:#aaa;"></div>
<div style="left:519.1px;top:504.3px;width:28px;height:2px;background:#555;"></div>
<div style="left:519.1px;top:508.1px;width:25.3px;height:0.9px;background:#5aa0dc;"></div>
<div style="left:546.7px;top:508.1px;width:18.4px;height:0.9px;background:#999;"></div>
<div style="left:598.2px;top:505.3px;width:34.5px;height:5.5px;background:#77c474;border-radius:3px;box-shadow:0 0 0 .5px #5a8a58;"></div>
<div style="left:602.2px;top:507.65px;width:26.5px;height:0.9px;background:rgba(255,255,255,.7);"></div>
<svg style="left:516.1px;top:512.8px;overflow:hidden" width="121.1" height="36.8" viewBox="0 0 100 100" preserveAspectRatio="none"><g filter="url(#b1)"><rect width="100" height="100" fill="#7c7252"/><rect x="0" y="0" width="100" height="14" fill="#86a8d0"/><rect x="40" y="0" width="60" height="8" fill="#9ab4d4"/><polygon points="0,14 12,10 30,8 50,4 70,6 100,2 100,44 0,44" fill="#c8a472"/><polygon points="50,6 70,6 100,2 100,34 60,36" fill="#dab47c"/><rect x="0" y="30" width="40" height="14" fill="#a88c60"/><rect x="0" y="42" width="100" height="58" fill="#7e7452"/><rect x="40" y="46" width="60" height="16" fill="#90845c"/><rect x="0" y="74" width="100" height="26" fill="#5e5840"/><polygon points="0,78 40,84 60,100 0,100" fill="#6c6a64"/><ellipse cx="27" cy="32" rx="6.5" ry="21" fill="#cfc6b6"/><rect x="23.5" y="22" width="7" height="18" fill="#2c333b"/><rect x="4" y="54" width="13" height="20" fill="#f2f2f2"/><rect x="17" y="60" width="5" height="16" fill="#a83030"/><rect x="4" y="74" width="18" height="5" fill="#2a2a2a"/></g></svg>
<div style="left:591.18px;top:531.2px;width:38.75px;height:1px;background:rgba(255,255,255,.75);"></div>
<div style="left:591.18px;top:533.2px;width:29.06px;height:1px;background:rgba(255,255,255,.6);"></div>
<svg style="left:541.2px;top:555px;overflow:hidden" width="22.8" height="12" viewBox="0 0 100 100" preserveAspectRatio="none"><g><rect width="100" height="100" fill="#fff"/><polygon points="20,70 60,10 92,30 54,92" fill="#3a8a4a"/><polygon points="30,66 56,26 70,34 44,76" fill="#2a6a3a"/><polygon points="20,70 54,92 50,98 16,76" fill="#c8c8c8"/></g></svg>
<div style="left:543.48px;top:570.2px;width:18.24px;height:0.9px;background:#777;"></div>
<div style="left:546.9px;top:572.2px;width:11.4px;height:0.9px;background:#999;"></div>
<svg style="left:565.2px;top:555px;overflow:hidden" width="22.8" height="12" viewBox="0 0 100 100" preserveAspectRatio="none"><g filter="url(#b2)"><rect width="100" height="100" fill="#c0322a"/><rect x="0" y="0" width="100" height="24" fill="#d8483a"/><polygon points="30,30 70,24 76,70 36,76" fill="#3f5f9a"/><rect x="0" y="76" width="100" height="24" fill="#8a2a2a"/><rect x="76" y="30" width="24" height="30" fill="#d8d0c8"/></g></svg>
<div style="left:567.48px;top:570.2px;width:18.24px;height:0.9px;background:#777;"></div>
<div style="left:570.9px;top:572.2px;width:11.4px;height:0.9px;background:#999;"></div>
<svg style="left:590.2px;top:555px;overflow:hidden" width="21.8" height="12" viewBox="0 0 100 100" preserveAspectRatio="none"><g filter="url(#b2)"><rect width="100" height="100" fill="#5a86aa"/><rect x="0" y="0" width="40" height="100" fill="#34506e"/><polygon points="0,50 50,40 70,60 40,100 0,100" fill="#ccbaa2"/><polygon points="40,36 92,14 96,22 48,50" fill="#e4e4e0"/><rect x="60" y="50" width="40" height="50" fill="#86aac4"/></g></svg>
<div style="left:592.38px;top:570.2px;width:17.44px;height:0.9px;background:#777;"></div>
<div style="left:595.65px;top:572.2px;width:10.9px;height:0.9px;background:#999;"></div>
<div style="left:541.2px;top:577px;width:19.25px;height:0.9px;background:#a0a0a0;"></div>
<div style="left:541.2px;top:579.1px;width:20.07px;height:0.9px;background:#a0a0a0;"></div>
<div style="left:541.2px;top:581.2px;width:20.82px;height:0.9px;background:#a0a0a0;"></div>
<div style="left:541.2px;top:583.3px;width:19.12px;height:0.9px;background:#a0a0a0;"></div>
<div style="left:541.2px;top:585.4px;width:10.84px;height:0.9px;background:#a0a0a0;"></div>
<div style="left:565.2px;top:577px;width:19.24px;height:0.9px;background:#a0a0a0;"></div>
<div style="left:565.2px;top:579.1px;width:19.77px;height:0.9px;background:#a0a0a0;"></div>
<div style="left:565.2px;top:581.2px;width:22.73px;height:0.9px;background:#a0a0a0;"></div>
<div style="left:565.2px;top:583.3px;width:21.66px;height:0.9px;background:#a0a0a0;"></div>
<div style="left:565.2px;top:585.4px;width:16.05px;height:0.9px;background:#a0a0a0;"></div>
<div style="left:590.2px;top:577px;width:20.54px;height:0.9px;background:#a0a0a0;"></div>
<div style="left:590.2px;top:579.1px;width:18.8px;height:0.9px;background:#a0a0a0;"></div>
<div style="left:590.2px;top:581.2px;width:19.43px;height:0.9px;background:#a0a0a0;"></div>
<div style="left:590.2px;top:583.3px;width:20.65px;height:0.9px;background:#a0a0a0;"></div>
<div style="left:590.2px;top:585.4px;width:9.5px;height:0.9px;background:#a0a0a0;"></div>
<div style="left:541px;top:591.5px;width:58.48px;height:1px;background:#9e9e9e;"></div>
<div style="left:541px;top:593.45px;width:65.25px;height:1px;background:#9e9e9e;"></div>
<div style="left:541px;top:595.4px;width:59.35px;height:1px;background:#9e9e9e;"></div>
<div style="left:541px;top:597.35px;width:37.06px;height:1px;background:#9e9e9e;"></div>
<div style="left:541px;top:600.5px;width:60.01px;height:1px;background:#9e9e9e;"></div>
<div style="left:541px;top:602.45px;width:63.2px;height:1px;background:#9e9e9e;"></div>
<div style="left:541px;top:604.4px;width:59.75px;height:1px;background:#9e9e9e;"></div>
<div style="left:541px;top:606.35px;width:65.08px;height:1px;background:#9e9e9e;"></div>
<div style="left:541px;top:608.3px;width:40.47px;height:1px;background:#9e9e9e;"></div>
<div style="left:541px;top:611px;width:60.9px;height:1px;background:#9e9e9e;"></div>
<div style="left:541px;top:612.95px;width:62.7px;height:1px;background:#9e9e9e;"></div>
<div style="left:541px;top:614.9px;width:68.91px;height:1px;background:#9e9e9e;"></div>
<div style="left:541px;top:616.85px;width:31.67px;height:1px;background:#9e9e9e;"></div>
<div style="left:541px;top:620.5px;width:55.95px;height:1px;background:#9e9e9e;"></div>
<div style="left:541px;top:622.45px;width:31.55px;height:1px;background:#9e9e9e;"></div>
<div style="left:541px;top:625.5px;width:66.76px;height:1px;background:#9e9e9e;"></div>
<div style="left:541px;top:627.45px;width:66.17px;height:1px;background:#9e9e9e;"></div>
<div style="left:541px;top:629.4px;width:43.76px;height:1px;background:#9e9e9e;"></div>
<div style="left:552.8px;top:632.4px;width:48.2px;height:5.4px;background:#77c474;border-radius:3px;box-shadow:0 0 0 .6px #5a8a58;"></div>
<div style="left:562.44px;top:634.7px;width:28.92px;height:0.9px;background:rgba(255,255,255,.7);"></div>
<div style="left:516.1px;top:641.4px;width:121.1px;height:3.8px;background:#065aa8;"></div>
<div style="left:522.1px;top:642.5px;width:4px;height:1.6px;background:rgba(255,255,255,.9);"></div>
<div style="left:529.1px;top:643px;width:14px;height:0.8px;background:rgba(255,255,255,.45);"></div>
<div style="left:546.1px;top:643px;width:8px;height:0.8px;background:rgba(255,255,255,.45);"></div>
<div style="left:620.2px;top:643px;width:6px;height:0.8px;background:rgba(255,255,255,.45);"></div>
<div style="left:628.2px;top:643px;width:5px;height:0.8px;background:rgba(255,255,255,.45);"></div>
<div style="left:655.3px;top:466.7px;font-size:11.5px;line-height:15px;color:#dedede;white-space:pre;letter-spacing:0.177px;">Solutions - cold chain</div>
<div style="left:654.3px;top:486.6px;width:121px;height:139.8px;background:#fff;"></div>
<div style="left:654.3px;top:486.6px;width:121px;height:5px;background:linear-gradient(90deg,#1d6cb2 0%,#2a85c6 18%,#1c70b6 34%,#3590cd 52%,#2079bd 68%,#3a93d0 84%,#1d6cb2 100%);"></div>
<div style="left:655.8px;top:487.8px;width:4px;height:1.6px;background:rgba(255,255,255,.85);"></div>
<div style="left:654.3px;top:491.6px;width:121px;height:5.2px;background:#3b3b3b;"></div>
<div style="left:694.23px;top:493.8px;width:20.57px;height:0.9px;background:#aaa;"></div>
<div style="left:717.22px;top:493.8px;width:14.52px;height:0.9px;background:#aaa;"></div>
<div style="left:734.16px;top:493.8px;width:14.52px;height:0.9px;background:#aaa;"></div>
<div style="left:657.3px;top:500.3px;width:28px;height:2px;background:#555;"></div>
<div style="left:657.3px;top:504.1px;width:25.3px;height:0.9px;background:#5aa0dc;"></div>
<div style="left:684.9px;top:504.1px;width:18.4px;height:0.9px;background:#999;"></div>
<div style="left:736.3px;top:501.3px;width:34.5px;height:5.5px;background:#77c474;border-radius:3px;box-shadow:0 0 0 .5px #5a8a58;"></div>
<div style="left:740.3px;top:503.65px;width:26.5px;height:0.9px;background:rgba(255,255,255,.7);"></div>
<svg style="left:654.3px;top:509px;overflow:hidden" width="121" height="36.8" viewBox="0 0 100 100" preserveAspectRatio="none"><g filter="url(#b1)"><rect width="100" height="100" fill="#6a645c"/><rect x="0" y="0" width="100" height="100" fill="#6a645c"/><polygon points="26,0 76,0 68,56 34,56" fill="#9c9486"/><rect x="36" y="8" width="8" height="14" fill="#c4bcae"/><rect x="46" y="4" width="10" height="16" fill="#b8b0a2"/><rect x="58" y="10" width="8" height="14" fill="#c0b8aa"/><rect x="40" y="28" width="10" height="14" fill="#aaa296"/><rect x="52" y="26" width="10" height="16" fill="#b4ac9e"/><polygon points="0,0 24,0 13,34 0,58" fill="#23262d"/><polygon points="100,0 76,0 87,38 100,56" fill="#1f2229"/><polygon points="0,58 13,34 22,58 8,100 0,100" fill="#3c3c3e"/><polygon points="100,56 87,38 78,60 92,100 100,100" fill="#343438"/><rect x="10" y="56" width="80" height="44" fill="#55504a" opacity="0.85"/><rect x="8" y="66" width="14" height="22" fill="#8e8e8c"/><rect x="30" y="56" width="36" height="6" fill="#2c3a52"/><rect x="40" y="70" width="22" height="5" fill="#32405a"/><path d="M14 0L36 100" stroke="#8a8a8a" stroke-width="0.6" vector-effect="non-scaling-stroke" fill="none"/><path d="M86 0L66 100" stroke="#7a7a7a" stroke-width="0.6" vector-effect="non-scaling-stroke" fill="none"/><path d="M30 0L22 100" stroke="#3a3a3c" stroke-width="0.8" vector-effect="non-scaling-stroke" fill="none"/><path d="M70 0L80 100" stroke="#3a3a3c" stroke-width="0.8" vector-effect="non-scaling-stroke" fill="none"/><rect x="0" y="90" width="100" height="10" fill="#26282c" opacity="0.7"/></g></svg>
<div style="left:729.32px;top:527.4px;width:38.72px;height:1px;background:rgba(255,255,255,.75);"></div>
<div style="left:729.32px;top:529.4px;width:29.04px;height:1px;background:rgba(255,255,255,.6);"></div>
<svg style="left:678.8px;top:550.6px;overflow:hidden" width="22.5" height="12.2" viewBox="0 0 100 100" preserveAspectRatio="none"><g filter="url(#b2)"><rect width="100" height="100" fill="#8a7a40"/><rect x="0" y="0" width="100" height="24" fill="#6a6444"/><rect x="0" y="24" width="44" height="50" fill="#d8c050"/><rect x="60" y="20" width="40" height="50" fill="#c8b048"/><polygon points="40,100 46,30 56,30 62,100" fill="#8a8678"/><rect x="0" y="80" width="100" height="20" fill="#6a6450"/></g></svg>
<div style="left:681.05px;top:566px;width:18px;height:0.9px;background:#777;"></div>
<div style="left:684.42px;top:568px;width:11.25px;height:0.9px;background:#999;"></div>
<svg style="left:703px;top:550.6px;overflow:hidden" width="22.8" height="12.2" viewBox="0 0 100 100" preserveAspectRatio="none"><g filter="url(#b2)"><rect width="100" height="100" fill="#7a9a5a"/><rect x="0" y="0" width="100" height="34" fill="#aac2dc"/><polygon points="30,100 46,34 54,34 70,100" fill="#9a9a94"/><polygon points="0,100 0,50 44,34 30,100" fill="#6a8a4a"/><polygon points="100,100 100,50 56,34 70,100" fill="#7a9452"/></g></svg>
<div style="left:705.28px;top:566px;width:18.24px;height:0.9px;background:#777;"></div>
<div style="left:708.7px;top:568px;width:11.4px;height:0.9px;background:#999;"></div>
<svg style="left:728px;top:550.6px;overflow:hidden" width="22" height="12.2" viewBox="0 0 100 100" preserveAspectRatio="none"><g filter="url(#b2)"><rect width="100" height="100" fill="#5a86aa"/><rect x="0" y="0" width="40" height="100" fill="#34506e"/><polygon points="0,50 50,40 70,60 40,100 0,100" fill="#ccbaa2"/><polygon points="40,36 92,14 96,22 48,50" fill="#e4e4e0"/><rect x="60" y="50" width="40" height="50" fill="#86aac4"/></g></svg>
<div style="left:730.2px;top:566px;width:17.6px;height:0.9px;background:#777;"></div>
<div style="left:733.5px;top:568px;width:11px;height:0.9px;background:#999;"></div>
<div style="left:678.8px;top:572.5px;width:19.48px;height:0.9px;background:#a0a0a0;"></div>
<div style="left:678.8px;top:574.6px;width:22.16px;height:0.9px;background:#a0a0a0;"></div>
<div style="left:678.8px;top:576.7px;width:19.1px;height:0.9px;background:#a0a0a0;"></div>
<div style="left:678.8px;top:578.8px;width:21.67px;height:0.9px;background:#a0a0a0;"></div>
<div style="left:678.8px;top:580.9px;width:21.66px;height:0.9px;background:#a0a0a0;"></div>
<div style="left:678.8px;top:583px;width:11.31px;height:0.9px;background:#a0a0a0;"></div>
<div style="left:703px;top:572.5px;width:21.51px;height:0.9px;background:#a0a0a0;"></div>
<div style="left:703px;top:574.6px;width:22.68px;height:0.9px;background:#a0a0a0;"></div>
<div style="left:703px;top:576.7px;width:19.77px;height:0.9px;background:#a0a0a0;"></div>
<div style="left:703px;top:578.8px;width:19.18px;height:0.9px;background:#a0a0a0;"></div>
<div style="left:703px;top:580.9px;width:21.65px;height:0.9px;background:#a0a0a0;"></div>
<div style="left:703px;top:583px;width:11.84px;height:0.9px;background:#a0a0a0;"></div>
<div style="left:728px;top:572.5px;width:19.77px;height:0.9px;background:#a0a0a0;"></div>
<div style="left:728px;top:574.6px;width:21.12px;height:0.9px;background:#a0a0a0;"></div>
<div style="left:728px;top:576.7px;width:20.77px;height:0.9px;background:#a0a0a0;"></div>
<div style="left:728px;top:578.8px;width:20.74px;height:0.9px;background:#a0a0a0;"></div>
<div style="left:728px;top:580.9px;width:18.69px;height:0.9px;background:#a0a0a0;"></div>
<div style="left:728px;top:583px;width:10.26px;height:0.9px;background:#a0a0a0;"></div>
<div style="left:679px;top:589px;width:68.5px;height:1px;background:#9e9e9e;"></div>
<div style="left:679px;top:590.95px;width:60.52px;height:1px;background:#9e9e9e;"></div>
<div style="left:679px;top:592.9px;width:62.76px;height:1px;background:#9e9e9e;"></div>
<div style="left:679px;top:594.85px;width:28.87px;height:1px;background:#9e9e9e;"></div>
<div style="left:679px;top:598px;width:65.97px;height:1px;background:#9e9e9e;"></div>
<div style="left:679px;top:599.95px;width:68.07px;height:1px;background:#9e9e9e;"></div>
<div style="left:679px;top:601.9px;width:25.65px;height:1px;background:#9e9e9e;"></div>
<div style="left:679px;top:605.5px;width:59.83px;height:1px;background:#9e9e9e;"></div>
<div style="left:679px;top:607.45px;width:38.24px;height:1px;background:#9e9e9e;"></div>
<div style="left:690.6px;top:612px;width:48.4px;height:5.2px;background:#77c474;border-radius:3px;box-shadow:0 0 0 .6px #5a8a58;"></div>
<div style="left:700.28px;top:614.2px;width:29.04px;height:0.9px;background:rgba(255,255,255,.7);"></div>
<div style="left:654.3px;top:621.7px;width:121px;height:4.7px;background:#065aa8;"></div>
<div style="left:660.3px;top:623.25px;width:4px;height:1.6px;background:rgba(255,255,255,.9);"></div>
<div style="left:667.3px;top:623.75px;width:14px;height:0.8px;background:rgba(255,255,255,.45);"></div>
<div style="left:684.3px;top:623.75px;width:8px;height:0.8px;background:rgba(255,255,255,.45);"></div>
<div style="left:758.3px;top:623.75px;width:6px;height:0.8px;background:rgba(255,255,255,.45);"></div>
<div style="left:766.3px;top:623.75px;width:5px;height:0.8px;background:rgba(255,255,255,.45);"></div>
<div style="left:784.5px;top:469.9px;font-size:11.5px;line-height:15px;color:#dedede;white-space:pre;letter-spacing:0.141px;">Solutions - vehicles</div>
<div style="left:783.5px;top:489.3px;width:121px;height:133.9px;background:#fff;"></div>
<div style="left:783.5px;top:489.3px;width:121px;height:5.1px;background:linear-gradient(90deg,#1d6cb2 0%,#2a85c6 18%,#1c70b6 34%,#3590cd 52%,#2079bd 68%,#3a93d0 84%,#1d6cb2 100%);"></div>
<div style="left:785px;top:490.5px;width:4px;height:1.6px;background:rgba(255,255,255,.85);"></div>
<div style="left:783.5px;top:494.4px;width:121px;height:5.2px;background:#3b3b3b;"></div>
<div style="left:823.43px;top:496.6px;width:20.57px;height:0.9px;background:#aaa;"></div>
<div style="left:846.42px;top:496.6px;width:14.52px;height:0.9px;background:#aaa;"></div>
<div style="left:863.36px;top:496.6px;width:14.52px;height:0.9px;background:#aaa;"></div>
<div style="left:786.5px;top:503.1px;width:28px;height:2px;background:#555;"></div>
<div style="left:786.5px;top:506.9px;width:25.3px;height:0.9px;background:#5aa0dc;"></div>
<div style="left:814.1px;top:506.9px;width:18.4px;height:0.9px;background:#999;"></div>
<div style="left:865.5px;top:504.1px;width:34.5px;height:5.5px;background:#77c474;border-radius:3px;box-shadow:0 0 0 .5px #5a8a58;"></div>
<div style="left:869.5px;top:506.45px;width:26.5px;height:0.9px;background:rgba(255,255,255,.7);"></div>
<svg style="left:783.5px;top:511.8px;overflow:hidden" width="121" height="37.1" viewBox="0 0 100 100" preserveAspectRatio="none"><g filter="url(#b1)"><rect width="100" height="100" fill="#9a8448"/><rect x="0" y="0" width="100" height="36" fill="#dcc08c"/><rect x="50" y="0" width="50" height="24" fill="#b8a288"/><rect x="0" y="0" width="100" height="8" fill="#e6d8bc"/><ellipse cx="21" cy="34" rx="22" ry="30" fill="#f4d898"/><ellipse cx="20" cy="36" rx="10" ry="16" fill="#fff6e4"/><rect x="68" y="22" width="32" height="16" fill="#5c4c2a"/><rect x="80" y="18" width="20" height="10" fill="#66562e"/><rect x="0" y="38" width="70" height="62" fill="#a8843a"/><rect x="0" y="60" width="50" height="40" fill="#8c6e2e"/><rect x="0" y="38" width="40" height="12" fill="#cca452"/><polygon points="72,38 100,38 100,100 78,100" fill="#7c8a32"/><polygon points="76,44 100,40 100,70" fill="#96a03a"/><polygon points="66,38 70,38 46,100 12,100" fill="#a8a49a"/><polygon points="70,38 73,38 78,100 48,100" fill="#7b7d80"/><polygon points="69,38 70.5,38 50,100 44,100" fill="#6a7048"/><rect x="62.5" y="56" width="5.5" height="26" fill="#f2f2f0"/><rect x="63" y="78" width="4.5" height="8" fill="#b8b8b8"/><rect x="54" y="44" width="3" height="7" fill="#3a4a6a"/><rect x="0" y="92" width="100" height="8" fill="#4a4020" opacity="0.5"/></g></svg>
<div style="left:858.52px;top:530.35px;width:38.72px;height:1px;background:rgba(255,255,255,.75);"></div>
<div style="left:858.52px;top:532.35px;width:29.04px;height:1px;background:rgba(255,255,255,.6);"></div>
<svg style="left:807.6px;top:553.8px;overflow:hidden" width="22.4" height="12.2" viewBox="0 0 100 100" preserveAspectRatio="none"><g filter="url(#b2)"><rect width="100" height="100" fill="#9a9a9a"/><rect x="0" y="0" width="100" height="30" fill="#c8d2dc"/><rect x="6" y="24" width="28" height="50" fill="#e8e8e8"/><rect x="38" y="20" width="30" height="56" fill="#f0f0f0"/><rect x="72" y="30" width="24" height="44" fill="#d0d0d0"/><rect x="0" y="78" width="100" height="22" fill="#4a4a4a"/><rect x="40" y="54" width="26" height="16" fill="#2a2a2a"/></g></svg>
<div style="left:809.84px;top:569.2px;width:17.92px;height:0.9px;background:#777;"></div>
<div style="left:813.2px;top:571.2px;width:11.2px;height:0.9px;background:#999;"></div>
<svg style="left:832px;top:553.8px;overflow:hidden" width="23" height="12.2" viewBox="0 0 100 100" preserveAspectRatio="none"><g filter="url(#b2)"><rect width="100" height="100" fill="#8aa050"/><rect x="0" y="0" width="100" height="30" fill="#dcc880"/><ellipse cx="30" cy="24" rx="20" ry="24" fill="#f4e4a8"/><polygon points="40,100 56,30 64,30 90,100" fill="#6a86a0"/><rect x="0" y="60" width="36" height="40" fill="#6a8a3a"/><rect x="50" y="50" width="10" height="20" fill="#3a5aa0"/></g></svg>
<div style="left:834.3px;top:569.2px;width:18.4px;height:0.9px;background:#777;"></div>
<div style="left:837.75px;top:571.2px;width:11.5px;height:0.9px;background:#999;"></div>
<svg style="left:857.2px;top:553.8px;overflow:hidden" width="21.8" height="12.2" viewBox="0 0 100 100" preserveAspectRatio="none"><g filter="url(#b2)"><rect width="100" height="100" fill="#5a86aa"/><rect x="0" y="0" width="40" height="100" fill="#34506e"/><polygon points="0,50 50,40 70,60 40,100 0,100" fill="#ccbaa2"/><polygon points="40,36 92,14 96,22 48,50" fill="#e4e4e0"/><rect x="60" y="50" width="40" height="50" fill="#86aac4"/></g></svg>
<div style="left:859.38px;top:569.2px;width:17.44px;height:0.9px;background:#777;"></div>
<div style="left:862.65px;top:571.2px;width:10.9px;height:0.9px;background:#999;"></div>
<div style="left:807.6px;top:575.5px;width:19.25px;height:0.9px;background:#a0a0a0;"></div>
<div style="left:807.6px;top:577.6px;width:21.74px;height:0.9px;background:#a0a0a0;"></div>
<div style="left:807.6px;top:579.7px;width:22.35px;height:0.9px;background:#a0a0a0;"></div>
<div style="left:807.6px;top:581.8px;width:18.55px;height:0.9px;background:#a0a0a0;"></div>
<div style="left:807.6px;top:583.9px;width:18.42px;height:0.9px;background:#a0a0a0;"></div>
<div style="left:807.6px;top:586px;width:8.17px;height:0.9px;background:#a0a0a0;"></div>
<div style="left:832px;top:575.5px;width:22.57px;height:0.9px;background:#a0a0a0;"></div>
<div style="left:832px;top:577.6px;width:22.98px;height:0.9px;background:#a0a0a0;"></div>
<div style="left:832px;top:579.7px;width:18.91px;height:0.9px;background:#a0a0a0;"></div>
<div style="left:832px;top:581.8px;width:18.9px;height:0.9px;background:#a0a0a0;"></div>
<div style="left:832px;top:583.9px;width:20.53px;height:0.9px;background:#a0a0a0;"></div>
<div style="left:832px;top:586px;width:11.02px;height:0.9px;background:#a0a0a0;"></div>
<div style="left:857.2px;top:575.5px;width:21.02px;height:0.9px;background:#a0a0a0;"></div>
<div style="left:857.2px;top:577.6px;width:21.7px;height:0.9px;background:#a0a0a0;"></div>
<div style="left:857.2px;top:579.7px;width:19.17px;height:0.9px;background:#a0a0a0;"></div>
<div style="left:857.2px;top:581.8px;width:19.32px;height:0.9px;background:#a0a0a0;"></div>
<div style="left:857.2px;top:583.9px;width:21.34px;height:0.9px;background:#a0a0a0;"></div>
<div style="left:857.2px;top:586px;width:7.69px;height:0.9px;background:#a0a0a0;"></div>
<div style="left:808px;top:593px;width:60.64px;height:1px;background:#9e9e9e;"></div>
<div style="left:808px;top:594.95px;width:65.08px;height:1px;background:#9e9e9e;"></div>
<div style="left:808px;top:596.9px;width:31.13px;height:1px;background:#9e9e9e;"></div>
<div style="left:808px;top:601.5px;width:69.14px;height:1px;background:#9e9e9e;"></div>
<div style="left:808px;top:603.45px;width:61.51px;height:1px;background:#9e9e9e;"></div>
<div style="left:808px;top:605.4px;width:47.22px;height:1px;background:#9e9e9e;"></div>
<div style="left:819.8px;top:609.3px;width:48px;height:5.4px;background:#77c474;border-radius:3px;box-shadow:0 0 0 .6px #5a8a58;"></div>
<div style="left:829.4px;top:611.6px;width:28.8px;height:0.9px;background:rgba(255,255,255,.7);"></div>
<div style="left:783.5px;top:619px;width:121px;height:4.2px;background:#065aa8;"></div>
<div style="left:789.5px;top:620.3px;width:4px;height:1.6px;background:rgba(255,255,255,.9);"></div>
<div style="left:796.5px;top:620.8px;width:14px;height:0.8px;background:rgba(255,255,255,.45);"></div>
<div style="left:813.5px;top:620.8px;width:8px;height:0.8px;background:rgba(255,255,255,.45);"></div>
<div style="left:887.5px;top:620.8px;width:6px;height:0.8px;background:rgba(255,255,255,.45);"></div>
<div style="left:895.5px;top:620.8px;width:5px;height:0.8px;background:rgba(255,255,255,.45);"></div>
<div style="left:375.6px;top:670.9px;font-size:11.5px;line-height:15px;color:#dedede;white-space:pre;letter-spacing:0.169px;">Solutions - Industrial...</div>
<div style="left:374.4px;top:690px;width:121.6px;height:124.5px;background:#fff;"></div>
<div style="left:374.4px;top:690px;width:121.6px;height:4.6px;background:linear-gradient(90deg,#1d6cb2 0%,#2a85c6 18%,#1c70b6 34%,#3590cd 52%,#2079bd 68%,#3a93d0 84%,#1d6cb2 100%);"></div>
<div style="left:375.9px;top:691.2px;width:4px;height:1.6px;background:rgba(255,255,255,.85);"></div>
<div style="left:374.4px;top:694.6px;width:121.6px;height:4.8px;background:#3b3b3b;"></div>
<div style="left:414.53px;top:696.6px;width:20.67px;height:0.9px;background:#aaa;"></div>
<div style="left:437.63px;top:696.6px;width:14.59px;height:0.9px;background:#aaa;"></div>
<div style="left:454.66px;top:696.6px;width:14.59px;height:0.9px;background:#aaa;"></div>
<div style="left:378px;top:705.2px;width:32px;height:1.6px;background:#444;"></div>
<div style="left:378px;top:708.6px;width:7px;height:0.9px;background:#5aa0dc;"></div>
<div style="left:386px;top:708.6px;width:15px;height:0.9px;background:#999;"></div>
<svg style="left:418.5px;top:712px;overflow:hidden" width="34.2" height="22" viewBox="0 0 100 100" preserveAspectRatio="none"><g><rect width="100" height="100" fill="#fff"/><rect x="28" y="2" width="14" height="12" fill="#e0602c"/><rect x="52" y="2" width="14" height="12" fill="#e0602c"/><rect x="30" y="18" width="34" height="40" fill="#8aa0c0"/><rect x="34" y="24" width="26" height="10" fill="#b8cce0"/><rect x="34" y="38" width="26" height="8" fill="#6a84a8"/><rect x="62" y="30" width="18" height="30" fill="#f09020"/><rect x="64" y="36" width="14" height="5" fill="#f8c060"/><rect x="64" y="46" width="14" height="5" fill="#f8c060"/><rect x="70" y="10" width="6" height="22" fill="#3a4a6a"/><rect x="82" y="28" width="4" height="34" fill="#4a3a3a"/><rect x="94" y="34" width="3" height="8" fill="#e87a20"/><rect x="14" y="22" width="1.6" height="46" fill="#9ad0f0"/><rect x="14" y="34" width="12" height="4" fill="#f0d040"/><rect x="20" y="38" width="6" height="20" fill="#c8d8e8"/><ellipse cx="6" cy="50" rx="5" ry="12" fill="#8ad040"/><rect x="2" y="58" width="10" height="14" fill="#6ab838"/><rect x="4" y="60" width="92" height="12" fill="#5a7aa8"/><rect x="30" y="52" width="30" height="14" fill="#d86a30"/><rect x="40" y="56" width="8" height="8" fill="#c8302a"/><rect x="2" y="72" width="96" height="8" fill="#b8bcc0"/><rect x="2" y="80" width="34" height="5" fill="#e89a40"/><rect x="38" y="80" width="56" height="14" fill="#c8ccd0"/><rect x="38" y="88" width="56" height="8" fill="#e87a30"/><rect x="86" y="56" width="8" height="24" fill="#c8d8e8"/></g></svg>
<div style="left:407px;top:737px;width:55px;height:0.9px;background:#888;"></div>
<div style="left:407px;top:739.2px;width:55px;height:1px;background:#666;"></div>
<svg style="left:399px;top:744px;overflow:hidden" width="23" height="11" viewBox="0 0 100 100" preserveAspectRatio="none"><g filter="url(#b2)"><rect width="100" height="100" fill="#9a5a28"/><rect x="0" y="0" width="100" height="40" fill="#d08838"/><rect x="10" y="10" width="6" height="90" fill="#3a2a1c"/><rect x="40" y="0" width="6" height="100" fill="#4a3420"/><rect x="70" y="10" width="6" height="90" fill="#3a2a1c"/><rect x="0" y="80" width="100" height="20" fill="#4a3624"/></g></svg>
<svg style="left:424px;top:744px;overflow:hidden" width="22.2" height="11" viewBox="0 0 100 100" preserveAspectRatio="none"><g filter="url(#b2)"><rect width="100" height="100" fill="#c8341c"/><rect x="0" y="0" width="100" height="24" fill="#e0602c"/><rect x="50" y="30" width="40" height="40" fill="#8a8a8a"/><rect x="10" y="40" width="30" height="40" fill="#a82414"/><rect x="0" y="84" width="100" height="16" fill="#6a2a1a"/></g></svg>
<svg style="left:447.8px;top:744px;overflow:hidden" width="23.4" height="11" viewBox="0 0 100 100" preserveAspectRatio="none"><g filter="url(#b2)"><rect width="100" height="100" fill="#3f6a48"/><rect x="0" y="0" width="30" height="100" fill="#2a4a30"/><rect x="50" y="20" width="30" height="60" fill="#c8c8c8"/><rect x="82" y="0" width="18" height="100" fill="#e0e0e0"/><rect x="30" y="70" width="40" height="30" fill="#558a5c"/></g></svg>
<svg style="left:399px;top:757.9px;overflow:hidden" width="23" height="12.1" viewBox="0 0 100 100" preserveAspectRatio="none"><g filter="url(#b2)"><rect width="100" height="100" fill="#141414"/><rect x="40" y="40" width="30" height="20" fill="#5a5020"/><rect x="50" y="44" width="16" height="10" fill="#b89a30"/><rect x="0" y="0" width="100" height="20" fill="#222"/></g></svg>
<div style="left:423.3px;top:772.8px;width:23.3px;height:5.2px;background:#0e5ba6;border-radius:3px;box-shadow:0 0 0 .6px #123a66;"></div>
<div style="left:427.96px;top:775px;width:13.98px;height:0.9px;background:rgba(255,255,255,.7);"></div>
<div style="left:411px;top:782.6px;width:47px;height:1px;background:#333;"></div>
<div style="left:412px;top:786.4px;width:16px;height:0.9px;background:#7ab0e0;"></div>
<div style="left:412px;top:788.6px;width:15px;height:0.9px;background:#7ab0e0;"></div>
<div style="left:412px;top:791px;width:21px;height:1px;background:#999;"></div>
<div style="left:412px;top:792.95px;width:23.28px;height:1px;background:#999;"></div>
<div style="left:412px;top:794.9px;width:23.41px;height:1px;background:#999;"></div>
<div style="left:412px;top:796.85px;width:20.82px;height:1px;background:#999;"></div>
<div style="left:412px;top:798.8px;width:22.3px;height:1px;background:#999;"></div>
<div style="left:412px;top:800.75px;width:22.58px;height:1px;background:#999;"></div>
<div style="left:412px;top:802.7px;width:23.75px;height:1px;background:#999;"></div>
<div style="left:412px;top:804.65px;width:13.86px;height:1px;background:#999;"></div>
<div style="left:412px;top:806.4px;width:15px;height:0.9px;background:#7ab0e0;"></div>
<div style="left:374.4px;top:809.6px;width:121.6px;height:4.9px;background:#065aa8;"></div>
<div style="left:380.4px;top:811.25px;width:4px;height:1.6px;background:rgba(255,255,255,.9);"></div>
<div style="left:387.4px;top:811.75px;width:14px;height:0.8px;background:rgba(255,255,255,.45);"></div>
<div style="left:404.4px;top:811.75px;width:8px;height:0.8px;background:rgba(255,255,255,.45);"></div>
<div style="left:479px;top:811.75px;width:6px;height:0.8px;background:rgba(255,255,255,.45);"></div>
<div style="left:487px;top:811.75px;width:5px;height:0.8px;background:rgba(255,255,255,.45);"></div>
<div style="left:517.2px;top:669.7px;font-size:11.5px;line-height:15px;color:#f0f0f0;white-space:pre;letter-spacing:0.198px;font-weight:700;">Solutions - retrofit ...</div>
<div style="left:515.7px;top:690px;width:122.3px;height:221.5px;background:#fff;"></div>
<div style="left:515.7px;top:690px;width:122.3px;height:4.6px;background:linear-gradient(90deg,#1d6cb2 0%,#2a85c6 18%,#1c70b6 34%,#3590cd 52%,#2079bd 68%,#3a93d0 84%,#1d6cb2 100%);"></div>
<div style="left:517.2px;top:691.2px;width:4px;height:1.6px;background:rgba(255,255,255,.85);"></div>
<div style="left:515.7px;top:694.6px;width:122.3px;height:6px;background:#3b3b3b;"></div>
<div style="left:556.06px;top:697.2px;width:20.79px;height:0.9px;background:#c8c8c8;"></div>
<div style="left:579.3px;top:697.2px;width:14.68px;height:0.9px;background:#c8c8c8;"></div>
<div style="left:596.42px;top:697.2px;width:14.68px;height:0.9px;background:#c8c8c8;"></div>
<div style="left:518.7px;top:704px;width:28px;height:2px;background:#555;"></div>
<div style="left:518.7px;top:707.8px;width:22px;height:0.9px;background:#5aa0dc;"></div>
<div style="left:542.7px;top:707.8px;width:16px;height:0.9px;background:#999;"></div>
<div style="left:600.7px;top:704.4px;width:33.3px;height:5.4px;background:#77c474;border-radius:3px;box-shadow:0 0 0 .5px #5a8a58;"></div>
<div style="left:604.7px;top:706.7px;width:25.3px;height:0.9px;background:rgba(255,255,255,.7);"></div>
<div style="left:515.7px;top:714px;width:122.3px;height:53.6px;background:#9aa4ac;"></div>
<div style="left:517.7px;top:714.6px;width:22.1px;height:52.4px;background:#6c9fd4;"></div>
<div style="left:521.7px;top:716.4px;width:14.1px;height:0.9px;background:rgba(20,40,70,.7);"></div>
<div style="left:523.7px;top:718.4px;width:10.1px;height:0.9px;background:rgba(20,40,70,.6);"></div>
<div style="left:541.7px;top:714.6px;width:21.8px;height:52.4px;background:#6c9fd4;"></div>
<div style="left:545.7px;top:716.4px;width:13.8px;height:0.9px;background:rgba(20,40,70,.7);"></div>
<div style="left:547.7px;top:718.4px;width:9.8px;height:0.9px;background:rgba(20,40,70,.6);"></div>
<div style="left:565.8px;top:714.6px;width:21.2px;height:52.4px;background:#6c9fd4;"></div>
<div style="left:569.8px;top:716.4px;width:13.2px;height:0.9px;background:rgba(20,40,70,.7);"></div>
<div style="left:571.8px;top:718.4px;width:9.2px;height:0.9px;background:rgba(20,40,70,.6);"></div>
<div style="left:589.2px;top:714.6px;width:21.8px;height:52.4px;background:#6c9fd4;"></div>
<div style="left:593.2px;top:716.4px;width:13.8px;height:0.9px;background:rgba(20,40,70,.7);"></div>
<div style="left:595.2px;top:718.4px;width:9.8px;height:0.9px;background:rgba(20,40,70,.6);"></div>
<div style="left:613px;top:714.6px;width:22.6px;height:52.4px;background:#6c9fd4;"></div>
<div style="left:617px;top:716.4px;width:14.6px;height:0.9px;background:rgba(20,40,70,.7);"></div>
<div style="left:619px;top:718.4px;width:10.6px;height:0.9px;background:rgba(20,40,70,.6);"></div>
<div style="left:525px;top:721.5px;width:6.5px;height:6.5px;background:#1f2c3c;border:1px solid #3a6ab0;"></div>
<div style="left:523px;top:731px;width:10px;height:0.8px;background:rgba(20,40,70,.5);"></div>
<div style="left:525px;top:735.5px;width:7px;height:4px;background:#8ab040;"></div>
<div style="left:524px;top:742px;width:9px;height:5px;border:0.8px solid #345;"></div>
<div style="left:523.5px;top:751px;width:8px;height:7px;background:#e8eef6;"></div>
<div style="left:521px;top:753px;width:5px;height:5px;background:#e8a030;"></div>
<div style="left:524px;top:760px;width:8px;height:0.8px;background:rgba(20,40,70,.5);"></div>
<div style="left:549px;top:725px;width:7px;height:8px;background:#f4f6fa;"></div>
<div style="left:551px;top:727px;width:3px;height:4px;background:#2f6ac0;"></div>
<div style="left:547px;top:735.5px;width:11px;height:0.8px;background:rgba(20,40,70,.5);"></div>
<div style="left:549px;top:747px;width:7px;height:9px;background:#1f2c3c;border:0.8px solid #4a7ac0;"></div>
<div style="left:557px;top:752px;width:1.5px;height:1.5px;background:#d83a2c;"></div>
<div style="left:547px;top:758.5px;width:11px;height:0.8px;background:rgba(20,40,70,.5);"></div>
<div style="left:571px;top:723.5px;width:10px;height:1.4px;background:#1f2c3c;"></div>
<div style="left:572px;top:726px;width:8px;height:2px;background:#e8eef6;"></div>
<div style="left:570px;top:730px;width:12px;height:0.8px;background:rgba(20,40,70,.5);"></div>
<div style="left:574px;top:733.5px;width:4.5px;height:5px;background:#e8c040;"></div>
<div style="left:571px;top:741.5px;width:10px;height:0.8px;background:rgba(20,40,70,.5);"></div>
<div style="left:573.5px;top:745.5px;width:6px;height:9px;background:#1f2c3c;border:0.8px solid #4a7ac0;"></div>
<div style="left:569px;top:760.5px;width:6.5px;height:2.6px;background:#111;"></div>
<div style="left:576.5px;top:760.5px;width:6.5px;height:2.6px;background:#111;"></div>
<div style="left:596px;top:725px;width:8px;height:5px;background:#f4f8fc;border-radius:50% 50% 30% 30%;"></div>
<div style="left:599px;top:728px;width:2px;height:2.5px;background:#3a8ad8;border-radius:50%;"></div>
<div style="left:595px;top:746px;width:6px;height:3.5px;background:#f4f8fc;border-radius:50%;"></div>
<div style="left:598px;top:748px;width:6px;height:3.5px;background:#f4f8fc;border-radius:50%;"></div>
<div style="left:620px;top:722.5px;width:7.5px;height:7px;background:#1f2c3c;"></div>
<div style="left:622px;top:725px;width:5px;height:3px;background:#e8c040;"></div>
<div style="left:619px;top:732px;width:10px;height:0.8px;background:rgba(20,40,70,.5);"></div>
<div style="left:620.5px;top:738px;width:6px;height:6px;background:#e8c040;"></div>
<div style="left:624px;top:740px;width:3px;height:4px;background:#f4f6fa;"></div>
<div style="left:620.5px;top:750px;width:7px;height:7.5px;background:#1f2c3c;border:0.8px solid #3a5a8a;"></div>
<div style="left:540.5px;top:775.5px;width:65.32px;height:1px;background:#a8a8a8;"></div>
<div style="left:540.5px;top:777.45px;width:60.13px;height:1px;background:#a8a8a8;"></div>
<div style="left:540.5px;top:779.4px;width:65.64px;height:1px;background:#a8a8a8;"></div>
<div style="left:540.5px;top:781.35px;width:28.1px;height:1px;background:#a8a8a8;"></div>
<div style="left:540.5px;top:784px;width:56.99px;height:1px;background:#a8a8a8;"></div>
<div style="left:540.5px;top:785.95px;width:60.51px;height:1px;background:#a8a8a8;"></div>
<div style="left:540.5px;top:787.9px;width:50.68px;height:1px;background:#a8a8a8;"></div>
<div style="left:539.8px;top:791.6px;width:72.2px;height:40.9px;background:linear-gradient(135deg,#dcdedf 0%,#e8e9ea 50%,#d4d6d8 100%);"></div>
<div style="left:544.13px;top:792.42px;width:19.49px;height:9.82px;background:#3c3c3c;"></div>
<div style="left:548.46px;top:794.87px;width:10.83px;height:1.64px;background:#e8e8e8;"></div>
<div style="left:547.02px;top:797.74px;width:13.72px;height:1.23px;background:#c8c8c8;"></div>
<div style="left:568.68px;top:794.05px;width:14.44px;height:7.36px;background:#a8acb0;border-radius:2px;"></div>
<div style="left:570.12px;top:800.6px;width:13px;height:4.91px;background:#6a7076;"></div>
<div style="left:571.57px;top:801.42px;width:2.89px;height:2.45px;background:#2f6ac0;"></div>
<div style="left:575.9px;top:801.42px;width:3.61px;height:2.45px;background:#3a8a50;"></div>
<div style="left:583.12px;top:800.6px;width:5.78px;height:8.18px;background:#2a2a2a;border-radius:30%;"></div>
<div style="left:586.73px;top:801.42px;width:2.17px;height:3.27px;background:#c8302a;"></div>
<div style="left:593.23px;top:806.32px;width:6.5px;height:8.18px;background:#8a9098;border-radius:2px;transform:rotate(20deg);"></div>
<div style="left:601.89px;top:810.41px;width:6.5px;height:8.18px;background:#1c1c1e;border-radius:3px;transform:rotate(20deg);"></div>
<div style="left:590.34px;top:816.96px;width:4.33px;height:4.09px;background:#1c1c1e;border-radius:30%;"></div>
<div style="left:597.56px;top:818.59px;width:7.22px;height:8.18px;background:#e4e6e8;border-radius:2px;transform:rotate(20deg);box-shadow:0 0 0 .5px #aaa;"></div>
<div style="left:542.69px;top:815.32px;width:3.61px;height:9px;background:#3a7a5a;transform:rotate(20deg);"></div>
<div style="left:543.05px;top:821.87px;width:3.25px;height:2.45px;background:#2f6ac0;transform:rotate(20deg);"></div>
<div style="left:547.38px;top:812.46px;width:3.61px;height:9px;background:#3a7a5a;transform:rotate(20deg);"></div>
<div style="left:547.74px;top:819px;width:3.25px;height:2.45px;background:#2f6ac0;transform:rotate(20deg);"></div>
<div style="left:552.07px;top:809.6px;width:3.61px;height:9px;background:#3a7a5a;transform:rotate(20deg);"></div>
<div style="left:552.43px;top:816.14px;width:3.25px;height:2.45px;background:#2f6ac0;transform:rotate(20deg);"></div>
<div style="left:556.77px;top:806.73px;width:3.61px;height:9px;background:#3a7a5a;transform:rotate(20deg);"></div>
<div style="left:557.13px;top:813.28px;width:3.25px;height:2.45px;background:#2f6ac0;transform:rotate(20deg);"></div>
<div style="left:549.91px;top:825.14px;width:10.11px;height:2.45px;background:#2f5a3a;transform:rotate(-25deg);"></div>
<div style="left:569.4px;top:814.5px;width:5.78px;height:5.73px;background:#3a8a50;"></div>
<div style="left:576.62px;top:814.5px;width:5.78px;height:5.73px;background:#3a8a50;"></div>
<div style="left:572.29px;top:821.05px;width:7.22px;height:5.73px;background:#3a8a50;transform:rotate(15deg);"></div>
<div style="left:549.91px;top:829.64px;width:5.78px;height:0.74px;background:#555;"></div>
<div style="left:567.24px;top:829.23px;width:17.33px;height:0.74px;background:#555;"></div>
<div style="left:571.57px;top:830.86px;width:8.66px;height:0.74px;background:#777;"></div>
<div style="left:591.78px;top:829.23px;width:14.44px;height:0.74px;background:#555;"></div>
<div style="left:593.95px;top:830.86px;width:10.11px;height:0.74px;background:#777;"></div>
<svg style="left:540.5px;top:835.4px;overflow:hidden" width="22.5" height="11.1" viewBox="0 0 100 100" preserveAspectRatio="none"><g><rect width="100" height="100" fill="#fff"/><polygon points="20,70 60,10 92,30 54,92" fill="#3a8a4a"/><polygon points="30,66 56,26 70,34 44,76" fill="#2a6a3a"/><polygon points="20,70 54,92 50,98 16,76" fill="#c8c8c8"/></g></svg>
<svg style="left:565px;top:835.4px;overflow:hidden" width="23" height="11.1" viewBox="0 0 100 100" preserveAspectRatio="none"><g filter="url(#b2)"><rect width="100" height="100" fill="#0e1830"/><ellipse cx="50" cy="60" rx="40" ry="50" fill="#22386a"/><ellipse cx="30" cy="40" rx="3" ry="6" fill="#9ab8f0"/><ellipse cx="66" cy="30" rx="2" ry="5" fill="#9ab8f0"/><ellipse cx="54" cy="70" rx="2.5" ry="5" fill="#8aa8e0"/><ellipse cx="80" cy="60" rx="2" ry="4" fill="#7a98d0"/></g></svg>
<svg style="left:590px;top:835.4px;overflow:hidden" width="22" height="11.1" viewBox="0 0 100 100" preserveAspectRatio="none"><g filter="url(#b2)"><rect width="100" height="100" fill="#5a86aa"/><rect x="0" y="0" width="40" height="100" fill="#34506e"/><polygon points="0,50 50,40 70,60 40,100 0,100" fill="#ccbaa2"/><polygon points="40,36 92,14 96,22 48,50" fill="#e4e4e0"/><rect x="60" y="50" width="40" height="50" fill="#86aac4"/></g></svg>
<div style="left:542.75px;top:849.6px;width:18px;height:0.9px;background:#777;"></div>
<div style="left:546.12px;top:851.6px;width:11.25px;height:0.9px;background:#999;"></div>
<div style="left:567.3px;top:849.6px;width:18.4px;height:0.9px;background:#777;"></div>
<div style="left:570.75px;top:851.6px;width:11.5px;height:0.9px;background:#999;"></div>
<div style="left:592.2px;top:849.6px;width:17.6px;height:0.9px;background:#777;"></div>
<div style="left:595.5px;top:851.6px;width:11px;height:0.9px;background:#999;"></div>
<div style="left:541px;top:858px;width:8.5px;height:3px;background:#777;"></div>
<div style="left:541px;top:864px;width:8.5px;height:3px;background:#777;"></div>
<div style="left:541px;top:870px;width:8.5px;height:3px;background:#e8a020;"></div>
<div style="left:552px;top:856.5px;width:7px;height:2px;background:#4a8ac8;"></div>
<div style="left:552px;top:861px;width:7px;height:2px;background:#e8a020;"></div>
<div style="left:552px;top:865px;width:6px;height:8px;background:#2f7a5a;border:1px solid #333;"></div>
<div style="left:541px;top:877.6px;width:12px;height:0.9px;background:#333;"></div>
<div style="left:541px;top:880px;width:14.59px;height:1px;background:#aaa;"></div>
<div style="left:541px;top:881.95px;width:14.51px;height:1px;background:#aaa;"></div>
<div style="left:541px;top:883.9px;width:6.85px;height:1px;background:#aaa;"></div>
<div style="left:541px;top:888px;width:15px;height:0.9px;background:#555;"></div>
<div style="left:541px;top:890px;width:17.97px;height:1px;background:#aaa;"></div>
<div style="left:541px;top:891.95px;width:14.44px;height:1px;background:#aaa;"></div>
<div style="left:566px;top:856.8px;width:20px;height:0.9px;background:#333;"></div>
<div style="left:566px;top:859px;width:19.3px;height:1px;background:#999;"></div>
<div style="left:566px;top:860.95px;width:21.07px;height:1px;background:#999;"></div>
<div style="left:566px;top:862.9px;width:14.06px;height:1px;background:#999;"></div>
<div style="left:566px;top:869px;width:16px;height:0.9px;background:#333;"></div>
<div style="left:566px;top:871.5px;width:17.59px;height:1px;background:#999;"></div>
<div style="left:566px;top:873.45px;width:14.81px;height:1px;background:#999;"></div>
<div style="left:566px;top:875.4px;width:16.56px;height:1px;background:#999;"></div>
<div style="left:566px;top:877.35px;width:17.07px;height:1px;background:#999;"></div>
<div style="left:566px;top:879.3px;width:16.38px;height:1px;background:#999;"></div>
<div style="left:566px;top:881.25px;width:7.54px;height:1px;background:#999;"></div>
<div style="left:590px;top:856.8px;width:16px;height:0.9px;background:#333;"></div>
<div style="left:590px;top:859px;width:18.57px;height:1px;background:#999;"></div>
<div style="left:590px;top:860.95px;width:20.49px;height:1px;background:#999;"></div>
<div style="left:590px;top:862.9px;width:21.83px;height:1px;background:#999;"></div>
<div style="left:590px;top:864.85px;width:19.39px;height:1px;background:#999;"></div>
<div style="left:590px;top:866.8px;width:21.26px;height:1px;background:#999;"></div>
<div style="left:590px;top:868.75px;width:19.05px;height:1px;background:#999;"></div>
<div style="left:590px;top:870.7px;width:19.25px;height:1px;background:#999;"></div>
<div style="left:590px;top:872.65px;width:18.83px;height:1px;background:#999;"></div>
<div style="left:590px;top:874.6px;width:15.08px;height:1px;background:#999;"></div>
<div style="left:590px;top:879px;width:18px;height:0.9px;background:#333;"></div>
<div style="left:590px;top:881.5px;width:21.79px;height:1px;background:#999;"></div>
<div style="left:590px;top:883.45px;width:18.94px;height:1px;background:#999;"></div>
<div style="left:590px;top:885.4px;width:19.27px;height:1px;background:#999;"></div>
<div style="left:590px;top:887.35px;width:14.62px;height:1px;background:#999;"></div>
<div style="left:552.6px;top:898.2px;width:48.1px;height:5.6px;background:#77c474;border-radius:3px;box-shadow:0 0 0 .6px #5a8a58;"></div>
<div style="left:562.22px;top:900.6px;width:28.86px;height:0.9px;background:rgba(255,255,255,.7);"></div>
<div style="left:515.7px;top:907px;width:122.3px;height:4.5px;background:#065aa8;"></div>
<div style="left:521.7px;top:908.45px;width:4px;height:1.6px;background:rgba(255,255,255,.9);"></div>
<div style="left:528.7px;top:908.95px;width:14px;height:0.8px;background:rgba(255,255,255,.45);"></div>
<div style="left:545.7px;top:908.95px;width:8px;height:0.8px;background:rgba(255,255,255,.45);"></div>
<div style="left:621px;top:908.95px;width:6px;height:0.8px;background:rgba(255,255,255,.45);"></div>
<div style="left:629px;top:908.95px;width:5px;height:0.8px;background:rgba(255,255,255,.45);"></div>
<div style="left:651.9px;top:670.7px;font-size:11.5px;line-height:15px;color:#dedede;white-space:pre;letter-spacing:0.150px;">Solutions - flow equi...</div>
<div style="left:650.9px;top:690px;width:120.4px;height:130.2px;background:#fff;"></div>
<div style="left:650.9px;top:690px;width:120.4px;height:5px;background:linear-gradient(90deg,#1d6cb2 0%,#2a85c6 18%,#1c70b6 34%,#3590cd 52%,#2079bd 68%,#3a93d0 84%,#1d6cb2 100%);"></div>
<div style="left:652.4px;top:691.2px;width:4px;height:1.6px;background:rgba(255,255,255,.85);"></div>
<div style="left:650.9px;top:695px;width:120.4px;height:5.7px;background:#3b3b3b;"></div>
<div style="left:690.63px;top:697.45px;width:20.47px;height:0.9px;background:#c8c8c8;"></div>
<div style="left:713.51px;top:697.45px;width:14.45px;height:0.9px;background:#c8c8c8;"></div>
<div style="left:730.36px;top:697.45px;width:14.45px;height:0.9px;background:#c8c8c8;"></div>
<div style="left:653.9px;top:704.2px;width:28px;height:2px;background:#555;"></div>
<div style="left:653.9px;top:708px;width:25.3px;height:0.9px;background:#5aa0dc;"></div>
<div style="left:681.5px;top:708px;width:18.4px;height:0.9px;background:#999;"></div>
<div style="left:732.3px;top:705.2px;width:34.5px;height:5.5px;background:#77c474;border-radius:3px;box-shadow:0 0 0 .5px #5a8a58;"></div>
<div style="left:736.3px;top:707.55px;width:26.5px;height:0.9px;background:rgba(255,255,255,.7);"></div>
<svg style="left:650.9px;top:713px;overflow:hidden" width="120.4" height="36.5" viewBox="0 0 100 100" preserveAspectRatio="none"><g filter="url(#b1)"><rect width="100" height="100" fill="#6a6660"/><rect x="0" y="0" width="36" height="100" fill="#8e6448"/><rect x="0" y="0" width="6" height="100" fill="#a06c4a"/><rect x="4" y="14" width="16" height="72" fill="#a6b9c9"/><rect x="6" y="18" width="12" height="22" fill="#c9d8e4"/><rect x="8" y="30" width="9" height="8" fill="#5a8ad0"/><rect x="6" y="62" width="12" height="18" fill="#bac8d2"/><rect x="0" y="86" width="36" height="14" fill="#7a5a40"/><rect x="19.5" y="0" width="3.2" height="100" fill="#d6b81e"/><rect x="23" y="36" width="9.5" height="46" fill="#9db0c0"/><rect x="24.5" y="40" width="6" height="14" fill="#c0d0dc"/><rect x="27" y="0" width="2.6" height="36" fill="#d8bc22"/><rect x="33" y="0" width="2.8" height="40" fill="#d6b81e"/><rect x="30" y="0" width="3" height="30" fill="#8a7a50"/><rect x="36" y="0" width="34" height="100" fill="#55544f"/><rect x="38" y="8" width="30" height="14" fill="#b4b4b2"/><rect x="42" y="22" width="6" height="26" fill="#9a9a98"/><rect x="52" y="20" width="5" height="20" fill="#a8a8a6"/><rect x="60" y="10" width="8" height="30" fill="#8a8a86"/><rect x="36" y="40" width="12" height="40" fill="#3a3a34"/><rect x="48" y="36" width="16" height="26" fill="#4a463c"/><rect x="44" y="60" width="24" height="34" fill="#989ca0"/><rect x="50" y="66" width="12" height="20" fill="#b0b4b8"/><rect x="36" y="78" width="12" height="22" fill="#4a4a46"/><rect x="66" y="40" width="6" height="50" fill="#77797c"/><rect x="70" y="0" width="30" height="100" fill="#8a6658"/><rect x="70" y="14" width="12" height="30" fill="#6a90c2"/><rect x="94" y="0" width="6" height="24" fill="#7a9cc8"/><polygon points="70,0 86,0 100,30 100,58 88,30 76,12 70,12" fill="#dcd0bc"/><rect x="72" y="46" width="26" height="5" fill="#c8c0b4"/><rect x="74" y="52" width="3" height="40" fill="#d0ccc4"/><rect x="82" y="52" width="3" height="40" fill="#c8c4bc"/><rect x="90" y="52" width="3" height="36" fill="#d0ccc4"/><rect x="76" y="56" width="5" height="30" fill="#a84038"/><rect x="92" y="60" width="4" height="20" fill="#b03a34"/><rect x="0" y="92" width="100" height="8" fill="#3a342c" opacity="0.6"/></g></svg>
<div style="left:725.55px;top:731.25px;width:38.53px;height:1px;background:rgba(255,255,255,.75);"></div>
<div style="left:725.55px;top:733.25px;width:28.9px;height:1px;background:rgba(255,255,255,.6);"></div>
<svg style="left:675px;top:754.8px;overflow:hidden" width="23" height="11.2" viewBox="0 0 100 100" preserveAspectRatio="none"><g filter="url(#b2)"><rect width="100" height="100" fill="#8a8a8a"/><rect x="0" y="0" width="20" height="100" fill="#5a5a5a"/><polygon points="0,60 50,20 60,36 10,80" fill="#d4d4d4"/><rect x="50" y="0" width="20" height="100" fill="#3a3a3a"/><rect x="72" y="20" width="28" height="80" fill="#a8a098"/><rect x="0" y="84" width="100" height="16" fill="#3a3a3a"/></g></svg>
<div style="left:677.3px;top:769.2px;width:18.4px;height:0.9px;background:#777;"></div>
<div style="left:680.75px;top:771.2px;width:11.5px;height:0.9px;background:#999;"></div>
<svg style="left:700px;top:754.8px;overflow:hidden" width="22" height="11.2" viewBox="0 0 100 100" preserveAspectRatio="none"><g filter="url(#b2)"><rect width="100" height="100" fill="#101010"/><rect x="60" y="20" width="30" height="60" fill="#262626"/><rect x="0" y="70" width="100" height="30" fill="#1a1a1a"/></g></svg>
<div style="left:702.2px;top:769.2px;width:17.6px;height:0.9px;background:#777;"></div>
<div style="left:705.5px;top:771.2px;width:11px;height:0.9px;background:#999;"></div>
<svg style="left:724px;top:754.8px;overflow:hidden" width="23" height="11.2" viewBox="0 0 100 100" preserveAspectRatio="none"><g filter="url(#b2)"><rect width="100" height="100" fill="#5a86aa"/><rect x="0" y="0" width="40" height="100" fill="#34506e"/><polygon points="0,50 50,40 70,60 40,100 0,100" fill="#ccbaa2"/><polygon points="40,36 92,14 96,22 48,50" fill="#e4e4e0"/><rect x="60" y="50" width="40" height="50" fill="#86aac4"/></g></svg>
<div style="left:726.3px;top:769.2px;width:18.4px;height:0.9px;background:#777;"></div>
<div style="left:729.75px;top:771.2px;width:11.5px;height:0.9px;background:#999;"></div>
<div style="left:675px;top:776px;width:64.67px;height:1px;background:#9e9e9e;"></div>
<div style="left:675px;top:777.95px;width:58.93px;height:1px;background:#9e9e9e;"></div>
<div style="left:675px;top:779.9px;width:46.54px;height:1px;background:#9e9e9e;"></div>
<div style="left:675px;top:783.5px;width:21.45px;height:1px;background:#9e9e9e;"></div>
<div style="left:675px;top:785.45px;width:16.5px;height:1px;background:#9e9e9e;"></div>
<div style="left:675px;top:787.5px;width:59.31px;height:1px;background:#9e9e9e;"></div>
<div style="left:675px;top:789.45px;width:36.69px;height:1px;background:#9e9e9e;"></div>
<div style="left:675px;top:792.5px;width:61.51px;height:1px;background:#9e9e9e;"></div>
<div style="left:675px;top:794.45px;width:33.44px;height:1px;background:#9e9e9e;"></div>
<div style="left:675px;top:796.5px;width:40.89px;height:1px;background:#9e9e9e;"></div>
<div style="left:675px;top:798.45px;width:39.02px;height:1px;background:#9e9e9e;"></div>
<div style="left:675px;top:800.4px;width:19.33px;height:1px;background:#9e9e9e;"></div>
<div style="left:675px;top:801.5px;width:61.49px;height:1px;background:#9e9e9e;"></div>
<div style="left:675px;top:803.45px;width:39.38px;height:1px;background:#9e9e9e;"></div>
<div style="left:686.8px;top:806.8px;width:48px;height:5.2px;background:#77c474;border-radius:3px;box-shadow:0 0 0 .6px #5a8a58;"></div>
<div style="left:696.4px;top:809px;width:28.8px;height:0.9px;background:rgba(255,255,255,.7);"></div>
<div style="left:650.9px;top:815.9px;width:120.4px;height:4.3px;background:#065aa8;"></div>
<div style="left:656.9px;top:817.25px;width:4px;height:1.6px;background:rgba(255,255,255,.9);"></div>
<div style="left:663.9px;top:817.75px;width:14px;height:0.8px;background:rgba(255,255,255,.45);"></div>
<div style="left:680.9px;top:817.75px;width:8px;height:0.8px;background:rgba(255,255,255,.45);"></div>
<div style="left:754.3px;top:817.75px;width:6px;height:0.8px;background:rgba(255,255,255,.45);"></div>
<div style="left:762.3px;top:817.75px;width:5px;height:0.8px;background:rgba(255,255,255,.45);"></div>
<div style="left:784.1px;top:670.7px;font-size:11.5px;line-height:15px;color:#dedede;white-space:pre;letter-spacing:0.119px;">Solutions - pressure ...</div>
<div style="left:783.1px;top:690px;width:120.4px;height:133.8px;background:#fff;"></div>
<div style="left:783.1px;top:690px;width:120.4px;height:5px;background:linear-gradient(90deg,#1d6cb2 0%,#2a85c6 18%,#1c70b6 34%,#3590cd 52%,#2079bd 68%,#3a93d0 84%,#1d6cb2 100%);"></div>
<div style="left:784.6px;top:691.2px;width:4px;height:1.6px;background:rgba(255,255,255,.85);"></div>
<div style="left:783.1px;top:695px;width:120.4px;height:5.7px;background:#3b3b3b;"></div>
<div style="left:822.83px;top:697.45px;width:20.47px;height:0.9px;background:#c8c8c8;"></div>
<div style="left:845.71px;top:697.45px;width:14.45px;height:0.9px;background:#c8c8c8;"></div>
<div style="left:862.56px;top:697.45px;width:14.45px;height:0.9px;background:#c8c8c8;"></div>
<div style="left:786.1px;top:704.2px;width:28px;height:2px;background:#555;"></div>
<div style="left:786.1px;top:708px;width:25.3px;height:0.9px;background:#5aa0dc;"></div>
<div style="left:813.7px;top:708px;width:18.4px;height:0.9px;background:#999;"></div>
<div style="left:864.5px;top:705.2px;width:34.5px;height:5.5px;background:#77c474;border-radius:3px;box-shadow:0 0 0 .5px #5a8a58;"></div>
<div style="left:868.5px;top:707.55px;width:26.5px;height:0.9px;background:rgba(255,255,255,.7);"></div>
<svg style="left:783.1px;top:713px;overflow:hidden" width="120.4" height="35.8" viewBox="0 0 100 100" preserveAspectRatio="none"><g filter="url(#b1)"><rect width="100" height="100" fill="#8e8e8e"/><rect x="0" y="0" width="100" height="100" fill="#9a9a9a"/><rect x="0" y="0" width="12" height="100" fill="#858585"/><rect x="14" y="0" width="10" height="100" fill="#2c2c2c"/><rect x="9" y="36" width="20" height="14" fill="#1e1e1e"/><rect x="11" y="28" width="16" height="8" fill="#cfcfcf"/><rect x="24" y="30" width="30" height="70" fill="#a4a4a4"/><ellipse cx="35" cy="32" rx="5" ry="19" fill="#eaeaea"/><ellipse cx="35" cy="32" rx="4" ry="15" fill="#fafafa"/><rect x="34" y="50" width="2.4" height="30" fill="#b8a860"/><rect x="46" y="40" width="6" height="40" fill="#2e2e2e"/><ellipse cx="49" cy="40" rx="4" ry="10" fill="#2a2a2a"/><rect x="60" y="0" width="40" height="100" fill="#4a4a4a"/><rect x="60" y="0" width="10" height="100" fill="#2a2a2a"/><rect x="70" y="0" width="12" height="100" fill="#8c8c8c"/><rect x="72" y="10" width="10" height="50" fill="#9a9a9a"/><rect x="74" y="40" width="8" height="40" fill="#a4a4a4"/><ellipse cx="86" cy="34" rx="6" ry="24" fill="#1c1c1c"/><ellipse cx="86" cy="34" rx="3.5" ry="15" fill="#555"/><rect x="92" y="0" width="8" height="100" fill="#242424"/><rect x="64" y="54" width="5" height="30" fill="#b8a040"/><rect x="0" y="84" width="60" height="16" fill="#5a5a5a"/><rect x="30" y="84" width="20" height="16" fill="#2a2a2a"/></g></svg>
<div style="left:857.75px;top:730.9px;width:38.53px;height:1px;background:rgba(255,255,255,.75);"></div>
<div style="left:857.75px;top:732.9px;width:28.9px;height:1px;background:rgba(255,255,255,.6);"></div>
<svg style="left:807.8px;top:757px;overflow:hidden" width="22.2" height="11" viewBox="0 0 100 100" preserveAspectRatio="none"><g filter="url(#b2)"><rect width="100" height="100" fill="#6a6a6a"/><rect x="0" y="0" width="10" height="100" fill="#151515"/><ellipse cx="24" cy="50" rx="12" ry="44" fill="#c4c4c4"/><rect x="36" y="0" width="10" height="100" fill="#222"/><ellipse cx="56" cy="50" rx="10" ry="40" fill="#a0a0a0"/><rect x="68" y="0" width="12" height="100" fill="#1c1c1c"/><rect x="80" y="20" width="20" height="60" fill="#8a8a8a"/></g></svg>
<div style="left:810.02px;top:771.2px;width:17.76px;height:0.9px;background:#777;"></div>
<div style="left:813.35px;top:773.2px;width:11.1px;height:0.9px;background:#999;"></div>
<svg style="left:832px;top:757px;overflow:hidden" width="22.8" height="11" viewBox="0 0 100 100" preserveAspectRatio="none"><g filter="url(#b2)"><rect width="100" height="100" fill="#6a9a44"/><rect x="0" y="0" width="100" height="26" fill="#8aaed0"/><rect x="0" y="26" width="100" height="14" fill="#9ab868"/><polygon points="0,50 100,34 100,70 0,86" fill="#2f6cc8"/><polygon points="0,50 100,34 100,44 0,62" fill="#4a88dc"/><rect x="0" y="86" width="100" height="14" fill="#8aa850"/></g></svg>
<div style="left:834.28px;top:771.2px;width:18.24px;height:0.9px;background:#777;"></div>
<div style="left:837.7px;top:773.2px;width:11.4px;height:0.9px;background:#999;"></div>
<svg style="left:857px;top:757px;overflow:hidden" width="21.8" height="11" viewBox="0 0 100 100" preserveAspectRatio="none"><g filter="url(#b2)"><rect width="100" height="100" fill="#6a9cc4"/><rect x="0" y="0" width="30" height="100" fill="#4a7aa4"/><polygon points="10,0 40,0 30,100 0,100" fill="#dfe8ee"/><rect x="38" y="20" width="44" height="56" fill="#b8d4e8"/><rect x="44" y="28" width="32" height="38" fill="#4a90d0"/><ellipse cx="70" cy="86" rx="14" ry="22" fill="#e8e0d4"/><rect x="86" y="0" width="14" height="100" fill="#5a88b0"/></g></svg>
<div style="left:859.18px;top:771.2px;width:17.44px;height:0.9px;background:#777;"></div>
<div style="left:862.45px;top:773.2px;width:10.9px;height:0.9px;background:#999;"></div>
<div style="left:808px;top:780px;width:66.82px;height:1px;background:#9e9e9e;"></div>
<div style="left:808px;top:781.95px;width:66.43px;height:1px;background:#9e9e9e;"></div>
<div style="left:808px;top:783.9px;width:65.23px;height:1px;background:#9e9e9e;"></div>
<div style="left:808px;top:785.85px;width:65.21px;height:1px;background:#9e9e9e;"></div>
<div style="left:808px;top:787.8px;width:41.26px;height:1px;background:#9e9e9e;"></div>
<div style="left:808px;top:793.5px;width:41.9px;height:1px;background:#9e9e9e;"></div>
<div style="left:808px;top:799.5px;width:45.5px;height:1px;background:#9e9e9e;"></div>
<div style="left:808px;top:802.5px;width:47.65px;height:1px;background:#9e9e9e;"></div>
<div style="left:819.6px;top:809.6px;width:48.2px;height:5.6px;background:#77c474;border-radius:3px;box-shadow:0 0 0 .6px #5a8a58;"></div>
<div style="left:829.24px;top:812px;width:28.92px;height:0.9px;background:rgba(255,255,255,.7);"></div>
<div style="left:783.1px;top:819.4px;width:120.4px;height:4.4px;background:#065aa8;"></div>
<div style="left:789.1px;top:820.8px;width:4px;height:1.6px;background:rgba(255,255,255,.9);"></div>
<div style="left:796.1px;top:821.3px;width:14px;height:0.8px;background:rgba(255,255,255,.45);"></div>
<div style="left:813.1px;top:821.3px;width:8px;height:0.8px;background:rgba(255,255,255,.45);"></div>
<div style="left:886.5px;top:821.3px;width:6px;height:0.8px;background:rgba(255,255,255,.45);"></div>
<div style="left:894.5px;top:821.3px;width:5px;height:0.8px;background:rgba(255,255,255,.45);"></div>
<div style="left:916.9px;top:671px;font-size:11.5px;line-height:15px;color:#dedede;white-space:pre;letter-spacing:0.167px;">Solutions - industrial...</div>
<div style="left:915.9px;top:690.1px;width:120.2px;height:141px;background:#fff;"></div>
<div style="left:915.9px;top:690.1px;width:120.2px;height:4.9px;background:linear-gradient(90deg,#1d6cb2 0%,#2a85c6 18%,#1c70b6 34%,#3590cd 52%,#2079bd 68%,#3a93d0 84%,#1d6cb2 100%);"></div>
<div style="left:917.4px;top:691.3px;width:4px;height:1.6px;background:rgba(255,255,255,.85);"></div>
<div style="left:915.9px;top:695px;width:120.2px;height:5px;background:#3b3b3b;"></div>
<div style="left:955.57px;top:697.1px;width:20.43px;height:0.9px;background:#aaa;"></div>
<div style="left:978.4px;top:697.1px;width:14.42px;height:0.9px;background:#aaa;"></div>
<div style="left:995.23px;top:697.1px;width:14.42px;height:0.9px;background:#aaa;"></div>
<div style="left:918.9px;top:703.5px;width:28px;height:2px;background:#555;"></div>
<div style="left:918.9px;top:707.3px;width:25.3px;height:0.9px;background:#5aa0dc;"></div>
<div style="left:946.5px;top:707.3px;width:18.4px;height:0.9px;background:#999;"></div>
<div style="left:997.1px;top:704.5px;width:34.5px;height:5.5px;background:#77c474;border-radius:3px;box-shadow:0 0 0 .5px #5a8a58;"></div>
<div style="left:1001.1px;top:706.85px;width:26.5px;height:0.9px;background:rgba(255,255,255,.7);"></div>
<svg style="left:915.9px;top:712px;overflow:hidden" width="120.2" height="36.5" viewBox="0 0 100 100" preserveAspectRatio="none"><g filter="url(#b3)"><rect width="100" height="100" fill="#5e96c0"/><defs><linearGradient id="hg2" x2="0" y2="1"><stop offset="0" stop-color="#84ceee"/><stop offset="0.28" stop-color="#6eb4de"/><stop offset="0.5" stop-color="#5a92c0"/><stop offset="0.7" stop-color="#5e7f9c"/><stop offset="0.86" stop-color="#71848e"/><stop offset="0.885" stop-color="#3a5a22"/><stop offset="1" stop-color="#22381a"/></linearGradient></defs><rect x="0" y="0" width="100" height="100" fill="url(#hg2)"/></g></svg>
<div style="left:990.42px;top:730.25px;width:38.46px;height:1px;background:rgba(255,255,255,.75);"></div>
<div style="left:990.42px;top:732.25px;width:28.85px;height:1px;background:rgba(255,255,255,.6);"></div>
<svg style="left:940px;top:754px;overflow:hidden" width="23" height="12" viewBox="0 0 100 100" preserveAspectRatio="none"><g filter="url(#b2)"><rect width="100" height="100" fill="#b8c4d0"/><rect x="0" y="0" width="100" height="36" fill="#86acd6"/><ellipse cx="50" cy="50" rx="16" ry="24" fill="#f0d890"/><rect x="0" y="64" width="100" height="20" fill="#c8a858"/><rect x="0" y="84" width="100" height="16" fill="#e0c040"/><rect x="10" y="30" width="4" height="40" fill="#6a7a8a"/><rect x="80" y="24" width="4" height="46" fill="#6a7a8a"/></g></svg>
<div style="left:942.3px;top:769.2px;width:18.4px;height:0.9px;background:#777;"></div>
<div style="left:945.75px;top:771.2px;width:11.5px;height:0.9px;background:#999;"></div>
<svg style="left:965px;top:754px;overflow:hidden" width="22" height="12" viewBox="0 0 100 100" preserveAspectRatio="none"><g filter="url(#b2)"><rect width="100" height="100" fill="#b8c8d8"/><rect x="0" y="0" width="18" height="100" fill="#2a3a5a"/><rect x="18" y="0" width="16" height="100" fill="#c86a30" opacity="0.5"/><rect x="40" y="10" width="20" height="90" fill="#e8eef4"/><rect x="62" y="0" width="14" height="100" fill="#7a9cc0"/><rect x="80" y="10" width="20" height="90" fill="#dfe8f0"/></g></svg>
<div style="left:967.2px;top:769.2px;width:17.6px;height:0.9px;background:#777;"></div>
<div style="left:970.5px;top:771.2px;width:11px;height:0.9px;background:#999;"></div>
<svg style="left:989px;top:754px;overflow:hidden" width="23" height="12" viewBox="0 0 100 100" preserveAspectRatio="none"><g filter="url(#b2)"><rect width="100" height="100" fill="#6a9cc4"/><rect x="0" y="0" width="30" height="100" fill="#4a7aa4"/><polygon points="10,0 40,0 30,100 0,100" fill="#dfe8ee"/><rect x="38" y="20" width="44" height="56" fill="#b8d4e8"/><rect x="44" y="28" width="32" height="38" fill="#4a90d0"/><ellipse cx="70" cy="86" rx="14" ry="22" fill="#e8e0d4"/><rect x="86" y="0" width="14" height="100" fill="#5a88b0"/></g></svg>
<div style="left:991.3px;top:769.2px;width:18.4px;height:0.9px;background:#777;"></div>
<div style="left:994.75px;top:771.2px;width:11.5px;height:0.9px;background:#999;"></div>
<div style="left:940px;top:777px;width:62.38px;height:1px;background:#9e9e9e;"></div>
<div style="left:940px;top:778.95px;width:62.61px;height:1px;background:#9e9e9e;"></div>
<div style="left:940px;top:780.9px;width:59.25px;height:1px;background:#9e9e9e;"></div>
<div style="left:940px;top:782.85px;width:70.27px;height:1px;background:#9e9e9e;"></div>
<div style="left:940px;top:784.8px;width:44.75px;height:1px;background:#9e9e9e;"></div>
<div style="left:940px;top:789px;width:63.1px;height:1px;background:#9e9e9e;"></div>
<div style="left:940px;top:790.95px;width:63.42px;height:1px;background:#9e9e9e;"></div>
<div style="left:940px;top:792.9px;width:65.04px;height:1px;background:#9e9e9e;"></div>
<div style="left:940px;top:794.85px;width:62.05px;height:1px;background:#9e9e9e;"></div>
<div style="left:940px;top:796.8px;width:49.58px;height:1px;background:#9e9e9e;"></div>
<div style="left:940px;top:800px;width:63.83px;height:1px;background:#9e9e9e;"></div>
<div style="left:940px;top:801.95px;width:61.44px;height:1px;background:#9e9e9e;"></div>
<div style="left:940px;top:803.9px;width:65.22px;height:1px;background:#9e9e9e;"></div>
<div style="left:940px;top:805.85px;width:35.02px;height:1px;background:#9e9e9e;"></div>
<div style="left:940px;top:809px;width:31.4px;height:1px;background:#9e9e9e;"></div>
<div style="left:940px;top:812px;width:39.13px;height:1px;background:#9e9e9e;"></div>
<div style="left:952.1px;top:816.2px;width:48px;height:5.6px;background:#77c474;border-radius:3px;box-shadow:0 0 0 .6px #5a8a58;"></div>
<div style="left:961.7px;top:818.6px;width:28.8px;height:0.9px;background:rgba(255,255,255,.7);"></div>
<div style="left:915.9px;top:826.8px;width:120.2px;height:4.3px;background:#065aa8;"></div>
<div style="left:921.9px;top:828.15px;width:4px;height:1.6px;background:rgba(255,255,255,.9);"></div>
<div style="left:928.9px;top:828.65px;width:14px;height:0.8px;background:rgba(255,255,255,.45);"></div>
<div style="left:945.9px;top:828.65px;width:8px;height:0.8px;background:rgba(255,255,255,.45);"></div>
<div style="left:1019.1px;top:828.65px;width:6px;height:0.8px;background:rgba(255,255,255,.45);"></div>
<div style="left:1027.1px;top:828.65px;width:5px;height:0.8px;background:rgba(255,255,255,.45);"></div>
<svg style="left:915.9px;top:712px;" width="120.2" height="36.5" viewBox="0 0 120.2 36.5"><path d="M93.15 1.09L88.35 32.85M93.15 1.09L97.96 32.85M91.95 1.09L90.75 32.85M94.36 1.09L95.56 32.85M80.53 2.56L106.38 2.56M82.94 4.38L103.97 4.38M80.53 2.56L93.15 0.73L106.38 2.56M74.52 16.06L111.79 16.06M74.52 18.25L111.79 18.25M92.31 6.57L94.84 10.95M94 6.57L91.47 10.95M91.47 11.31L95.68 15.7M94.84 11.31L90.63 15.7M90.63 16.06L96.52 20.44M95.68 16.06L89.79 20.44M89.79 20.81L97.36 25.19M96.52 20.81L88.95 25.19M88.95 25.55L98.2 29.93M97.36 25.55L88.11 29.93M88.11 30.3L99.04 34.68M98.2 30.3L87.27 34.68M18.03 7.3L16.23 32.85M18.03 7.3L19.83 32.85M10.82 12.41L25.24 12.41M9.62 16.79L26.44 16.79M18.03 7.3L18.03 32.85M32.45 25.55L32.45 33.58M37.26 24.09L37.26 33.58M42.07 25.55L42.07 33.58M48.08 21.9L48.08 33.58M51.69 24.09L51.69 33.58M58.9 22.63L58.9 33.58M63.71 22.63L63.71 33.58M68.51 24.82L68.51 33.58M74.52 25.55L74.52 33.58M28.85 27.74L28.85 33.58M79.33 27.01L79.33 33.58M30.05 26.28L44.47 26.28M45.68 23.36L55.29 23.36M56.49 24.09L72.12 24.09M4.81 29.2L84.14 29.2" stroke="#46586a" stroke-width=".8" fill="none" opacity=".9"/><path d="M18.03 12.41Q54.09 10.95 82.94 3.28M18.03 16.79Q54.09 18.25 79.33 16.06M106.38 2.56L120.2 5.84" stroke="#5a7088" stroke-width=".4" fill="none" opacity=".7"/></svg>
<div style="left:1053.6px;top:671px;font-size:11.5px;line-height:15px;color:#dedede;white-space:pre;letter-spacing:0.111px;">Solutions - low powe...</div>
<div style="left:1053px;top:690.1px;width:120.2px;height:163px;background:#fff;"></div>
<div style="left:1053px;top:690.1px;width:120.2px;height:4.9px;background:linear-gradient(90deg,#1d6cb2 0%,#2a85c6 18%,#1c70b6 34%,#3590cd 52%,#2079bd 68%,#3a93d0 84%,#1d6cb2 100%);"></div>
<div style="left:1054.5px;top:691.3px;width:4px;height:1.6px;background:rgba(255,255,255,.85);"></div>
<div style="left:1053px;top:695px;width:120.2px;height:5.5px;background:#3b3b3b;"></div>
<div style="left:1092.67px;top:697.35px;width:20.43px;height:0.9px;background:#c8c8c8;"></div>
<div style="left:1115.5px;top:697.35px;width:14.42px;height:0.9px;background:#c8c8c8;"></div>
<div style="left:1132.33px;top:697.35px;width:14.42px;height:0.9px;background:#c8c8c8;"></div>
<div style="left:1056px;top:704px;width:36px;height:2px;background:#555;"></div>
<div style="left:1056px;top:707.8px;width:24.2px;height:0.9px;background:#5aa0dc;"></div>
<div style="left:1082.4px;top:707.8px;width:17.6px;height:0.9px;background:#999;"></div>
<div style="left:1137.2px;top:704.4px;width:33.3px;height:5.4px;background:#77c474;border-radius:3px;box-shadow:0 0 0 .5px #5a8a58;"></div>
<div style="left:1141.2px;top:706.7px;width:25.3px;height:0.9px;background:rgba(255,255,255,.7);"></div>
<div style="left:1053px;top:713px;width:120.2px;height:66.3px;background:linear-gradient(135deg,#dcdedf 0%,#e8e9ea 50%,#d4d6d8 100%);"></div>
<div style="left:1060.21px;top:714.33px;width:32.45px;height:15.91px;background:#3c3c3c;"></div>
<div style="left:1067.42px;top:718.3px;width:18.03px;height:2.65px;background:#e8e8e8;"></div>
<div style="left:1065.02px;top:722.94px;width:22.84px;height:1.99px;background:#c8c8c8;"></div>
<div style="left:1101.08px;top:716.98px;width:24.04px;height:11.93px;background:#a8acb0;border-radius:2px;"></div>
<div style="left:1103.48px;top:727.59px;width:21.64px;height:7.96px;background:#6a7076;"></div>
<div style="left:1105.89px;top:728.91px;width:4.81px;height:3.98px;background:#2f6ac0;"></div>
<div style="left:1113.1px;top:728.91px;width:6.01px;height:3.98px;background:#3a8a50;"></div>
<div style="left:1125.12px;top:727.59px;width:9.62px;height:13.26px;background:#2a2a2a;border-radius:30%;"></div>
<div style="left:1131.13px;top:728.91px;width:3.61px;height:5.3px;background:#c8302a;"></div>
<div style="left:1141.95px;top:736.87px;width:10.82px;height:13.26px;background:#8a9098;border-radius:2px;transform:rotate(20deg);"></div>
<div style="left:1156.37px;top:743.5px;width:10.82px;height:13.26px;background:#1c1c1e;border-radius:3px;transform:rotate(20deg);"></div>
<div style="left:1137.14px;top:754.11px;width:7.21px;height:6.63px;background:#1c1c1e;border-radius:30%;"></div>
<div style="left:1149.16px;top:756.76px;width:12.02px;height:13.26px;background:#e4e6e8;border-radius:2px;transform:rotate(20deg);box-shadow:0 0 0 .5px #aaa;"></div>
<div style="left:1057.81px;top:751.45px;width:6.01px;height:14.59px;background:#3a7a5a;transform:rotate(20deg);"></div>
<div style="left:1058.41px;top:762.06px;width:5.41px;height:3.98px;background:#2f6ac0;transform:rotate(20deg);"></div>
<div style="left:1065.62px;top:746.81px;width:6.01px;height:14.59px;background:#3a7a5a;transform:rotate(20deg);"></div>
<div style="left:1066.22px;top:757.42px;width:5.41px;height:3.98px;background:#2f6ac0;transform:rotate(20deg);"></div>
<div style="left:1073.43px;top:742.17px;width:6.01px;height:14.59px;background:#3a7a5a;transform:rotate(20deg);"></div>
<div style="left:1074.04px;top:752.78px;width:5.41px;height:3.98px;background:#2f6ac0;transform:rotate(20deg);"></div>
<div style="left:1081.25px;top:737.53px;width:6.01px;height:14.59px;background:#3a7a5a;transform:rotate(20deg);"></div>
<div style="left:1081.85px;top:748.14px;width:5.41px;height:3.98px;background:#2f6ac0;transform:rotate(20deg);"></div>
<div style="left:1069.83px;top:767.37px;width:16.83px;height:3.98px;background:#2f5a3a;transform:rotate(-25deg);"></div>
<div style="left:1102.28px;top:750.13px;width:9.62px;height:9.28px;background:#3a8a50;"></div>
<div style="left:1114.3px;top:750.13px;width:9.62px;height:9.28px;background:#3a8a50;"></div>
<div style="left:1107.09px;top:760.74px;width:12.02px;height:9.28px;background:#3a8a50;transform:rotate(15deg);"></div>
<div style="left:1069.83px;top:774.66px;width:9.62px;height:1.19px;background:#555;"></div>
<div style="left:1098.68px;top:774px;width:28.85px;height:1.19px;background:#555;"></div>
<div style="left:1105.89px;top:776.65px;width:14.42px;height:1.19px;background:#777;"></div>
<div style="left:1139.54px;top:774px;width:24.04px;height:1.19px;background:#555;"></div>
<div style="left:1143.15px;top:776.65px;width:16.83px;height:1.19px;background:#777;"></div>
<svg style="left:1079px;top:783px;overflow:hidden" width="19" height="10.8" viewBox="0 0 100 100" preserveAspectRatio="none"><g><rect width="100" height="100" fill="#fff"/><polygon points="10,30 70,14 92,60 30,86" fill="#d8a848"/><polygon points="20,36 66,24 76,44 30,60" fill="#f0d080"/><ellipse cx="82" cy="38" rx="10" ry="26" fill="#c89038"/></g></svg>
<svg style="left:1102px;top:783px;overflow:hidden" width="21.6" height="10.8" viewBox="0 0 100 100" preserveAspectRatio="none"><g filter="url(#b2)"><rect width="100" height="100" fill="#b8c8d8"/><rect x="0" y="0" width="18" height="100" fill="#2a3a5a"/><rect x="18" y="0" width="16" height="100" fill="#c86a30" opacity="0.5"/><rect x="40" y="10" width="20" height="90" fill="#e8eef4"/><rect x="62" y="0" width="14" height="100" fill="#7a9cc0"/><rect x="80" y="10" width="20" height="90" fill="#dfe8f0"/></g></svg>
<svg style="left:1126px;top:783px;overflow:hidden" width="23" height="10.8" viewBox="0 0 100 100" preserveAspectRatio="none"><g filter="url(#b2)"><rect width="100" height="100" fill="#5a86aa"/><rect x="0" y="0" width="40" height="100" fill="#34506e"/><polygon points="0,50 50,40 70,60 40,100 0,100" fill="#ccbaa2"/><polygon points="40,36 92,14 96,22 48,50" fill="#e4e4e0"/><rect x="60" y="50" width="40" height="50" fill="#86aac4"/></g></svg>
<div style="left:1079.3px;top:797px;width:18.4px;height:0.9px;background:#777;"></div>
<div style="left:1082.75px;top:799px;width:11.5px;height:0.9px;background:#999;"></div>
<div style="left:1128.3px;top:797px;width:18.4px;height:0.9px;background:#777;"></div>
<div style="left:1131.75px;top:799px;width:11.5px;height:0.9px;background:#999;"></div>
<div style="left:1077px;top:804px;width:65.36px;height:1px;background:#888;"></div>
<div style="left:1077px;top:805.95px;width:68.82px;height:1px;background:#888;"></div>
<div style="left:1077px;top:807.9px;width:43.84px;height:1px;background:#888;"></div>
<div style="left:1077px;top:811px;width:70.35px;height:1px;background:#a8a8a8;"></div>
<div style="left:1077px;top:812.95px;width:65.41px;height:1px;background:#a8a8a8;"></div>
<div style="left:1077px;top:814.9px;width:60.39px;height:1px;background:#a8a8a8;"></div>
<div style="left:1077px;top:816.85px;width:68.29px;height:1px;background:#a8a8a8;"></div>
<div style="left:1077px;top:818.8px;width:61.42px;height:1px;background:#a8a8a8;"></div>
<div style="left:1077px;top:820.75px;width:38.42px;height:1px;background:#a8a8a8;"></div>
<div style="left:1077px;top:825px;width:43px;height:0.9px;background:#444;"></div>
<div style="left:1077px;top:827.5px;width:67.36px;height:1px;background:#a8a8a8;"></div>
<div style="left:1077px;top:829.45px;width:69.34px;height:1px;background:#a8a8a8;"></div>
<div style="left:1077px;top:831.4px;width:61.77px;height:1px;background:#a8a8a8;"></div>
<div style="left:1077px;top:833.35px;width:60.12px;height:1px;background:#a8a8a8;"></div>
<div style="left:1077px;top:835.3px;width:42.2px;height:1px;background:#a8a8a8;"></div>
<div style="left:1088.6px;top:840px;width:48.2px;height:5.2px;background:#77c474;border-radius:3px;box-shadow:0 0 0 .6px #5a8a58;"></div>
<div style="left:1098.24px;top:842.2px;width:28.92px;height:0.9px;background:rgba(255,255,255,.7);"></div>
<div style="left:1053px;top:849px;width:120.2px;height:4.1px;background:#065aa8;"></div>
<div style="left:1059px;top:850.25px;width:4px;height:1.6px;background:rgba(255,255,255,.9);"></div>
<div style="left:1066px;top:850.75px;width:14px;height:0.8px;background:rgba(255,255,255,.45);"></div>
<div style="left:1083px;top:850.75px;width:8px;height:0.8px;background:rgba(255,255,255,.45);"></div>
<div style="left:1156.2px;top:850.75px;width:6px;height:0.8px;background:rgba(255,255,255,.45);"></div>
<div style="left:1164.2px;top:850.75px;width:5px;height:0.8px;background:rgba(255,255,255,.45);"></div>
<div style="left:238px;top:287px;width:122px;height:82px;border:1px solid #504c4a;border-top-color:rgba(80,76,74,.45);box-shadow:0 0 0 .4px rgba(80,76,74,.7);"></div>
<div style="left:378px;top:288px;width:122px;height:158px;border:1px solid #504c4a;border-top-color:rgba(80,76,74,.45);box-shadow:0 0 0 .4px rgba(80,76,74,.7);"></div>
<div style="left:513px;top:288px;width:121px;height:136px;border:1px solid #504c4a;border-top-color:rgba(80,76,74,.45);box-shadow:0 0 0 .4px rgba(80,76,74,.7);"></div>
<div style="left:651px;top:288px;width:121px;height:134px;border:1px solid #504c4a;border-top-color:rgba(80,76,74,.45);box-shadow:0 0 0 .4px rgba(80,76,74,.7);"></div>
<div style="left:783px;top:290px;width:121px;height:133px;border:1px solid #504c4a;border-top-color:rgba(80,76,74,.45);box-shadow:0 0 0 .4px rgba(80,76,74,.7);"></div>
<div style="left:918px;top:289px;width:121px;height:142px;border:1px solid #504c4a;border-top-color:rgba(80,76,74,.45);box-shadow:0 0 0 .4px rgba(80,76,74,.7);"></div>
<div style="left:1053px;top:287px;width:121px;height:249px;border:1px solid #504c4a;border-top-color:rgba(80,76,74,.45);box-shadow:0 0 0 .4px rgba(80,76,74,.7);"></div>
<div style="left:1184px;top:287px;width:121px;height:135px;border:1px solid #504c4a;border-top-color:rgba(80,76,74,.45);box-shadow:0 0 0 .4px rgba(80,76,74,.7);"></div>
<div style="left:1312px;top:287px;width:120px;height:129px;border:1px solid #504c4a;border-top-color:rgba(80,76,74,.45);box-shadow:0 0 0 .4px rgba(80,76,74,.7);"></div>
<div style="left:378px;top:491px;width:122px;height:110px;border:1px solid #504c4a;border-top-color:rgba(80,76,74,.45);box-shadow:0 0 0 .4px rgba(80,76,74,.7);"></div>
<div style="left:516px;top:490px;width:122px;height:156px;border:1px solid #504c4a;border-top-color:rgba(80,76,74,.45);box-shadow:0 0 0 .4px rgba(80,76,74,.7);"></div>
<div style="left:654px;top:487px;width:122px;height:140px;border:1px solid #504c4a;border-top-color:rgba(80,76,74,.45);box-shadow:0 0 0 .4px rgba(80,76,74,.7);"></div>
<div style="left:784px;top:489px;width:121px;height:135px;border:1px solid #504c4a;border-top-color:rgba(80,76,74,.45);box-shadow:0 0 0 .4px rgba(80,76,74,.7);"></div>
<div style="left:374px;top:690px;width:122px;height:125px;border:1px solid #504c4a;border-top-color:rgba(80,76,74,.45);box-shadow:0 0 0 .4px rgba(80,76,74,.7);"></div>
<div style="left:516px;top:690px;width:122px;height:222px;border:1px solid #8c8a88;border-top-color:rgba(140,138,136,.45);box-shadow:.7px .7px 0 .3px #8c8a88;"></div>
<div style="left:651px;top:690px;width:121px;height:130px;border:1px solid #504c4a;border-top-color:rgba(80,76,74,.45);box-shadow:0 0 0 .4px rgba(80,76,74,.7);"></div>
<div style="left:783px;top:690px;width:121px;height:134px;border:1px solid #504c4a;border-top-color:rgba(80,76,74,.45);box-shadow:0 0 0 .4px rgba(80,76,74,.7);"></div>
<div style="left:916px;top:690px;width:120px;height:141px;border:1px solid #504c4a;border-top-color:rgba(80,76,74,.45);box-shadow:0 0 0 .4px rgba(80,76,74,.7);"></div>
<div style="left:1053px;top:690px;width:121px;height:163px;border:1px solid #504c4a;border-top-color:rgba(80,76,74,.45);box-shadow:0 0 0 .4px rgba(80,76,74,.7);"></div>
</body></html>
